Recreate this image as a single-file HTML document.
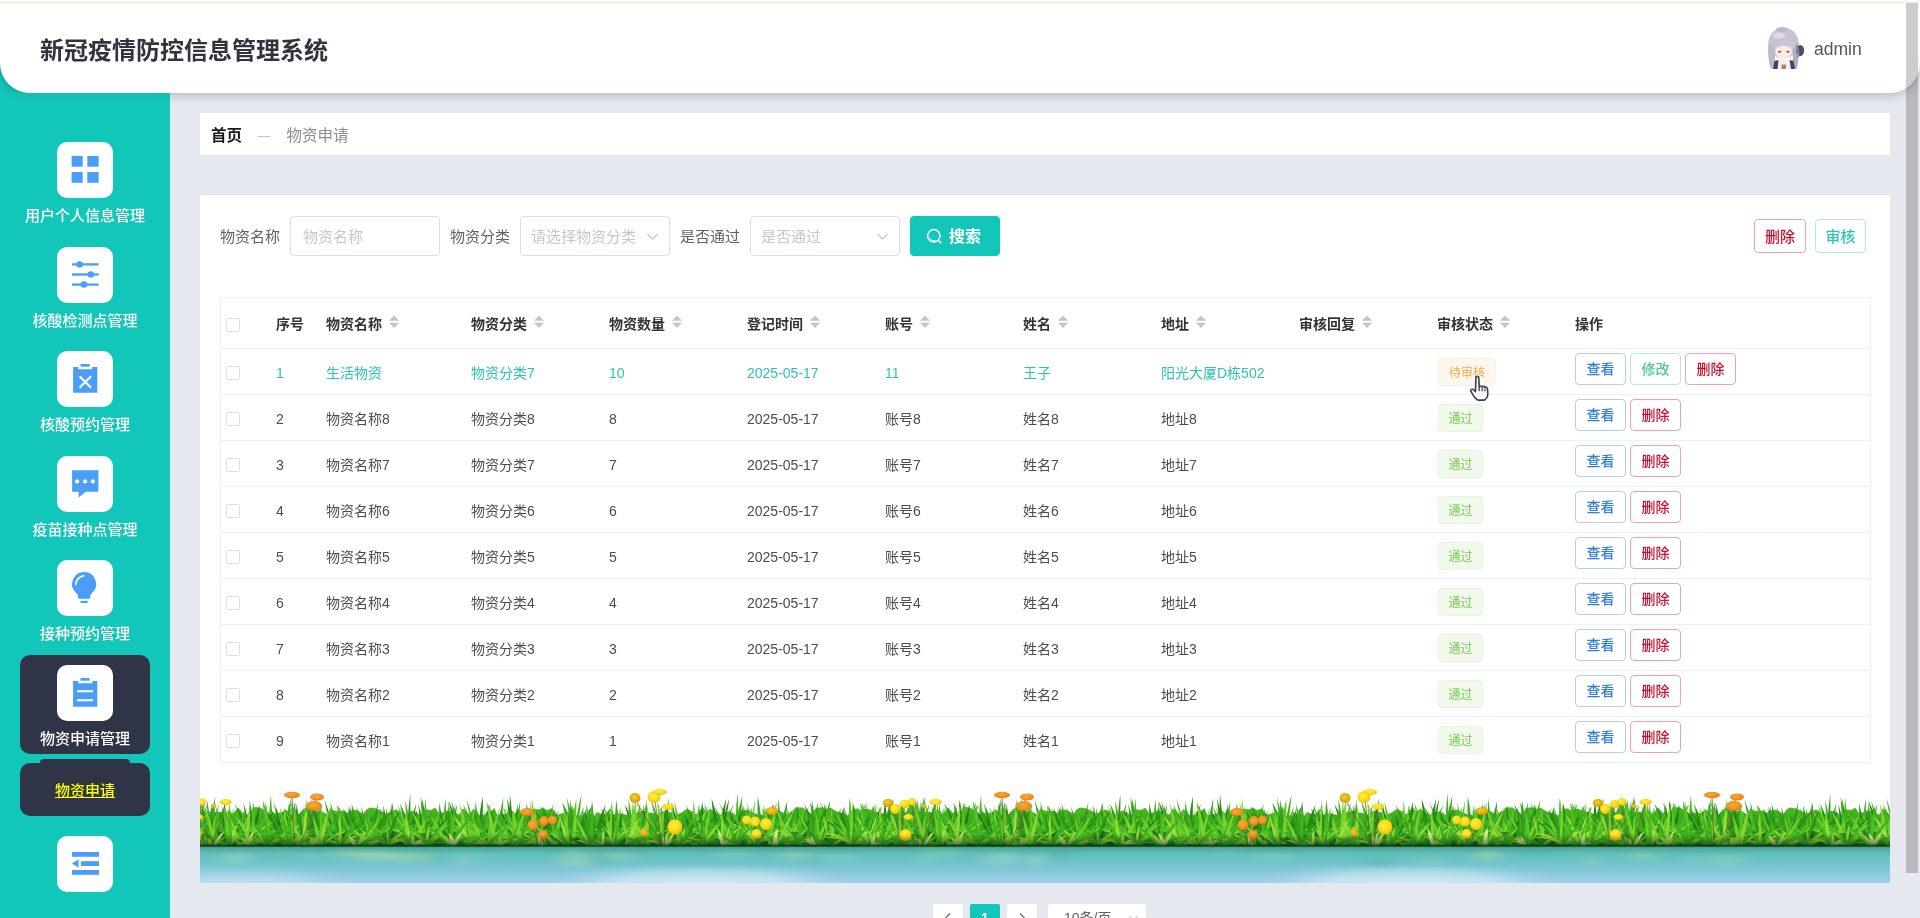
<!DOCTYPE html><html lang="zh-CN"><head><meta charset="utf-8"><title>新冠疫情防控信息管理系统</title><style>
*{box-sizing:border-box;margin:0;padding:0}
html,body{width:1920px;height:918px;overflow:hidden}
body{position:relative;background:#e5e8ee;font-family:"Liberation Sans","Noto Sans CJK SC",sans-serif;font-size:14px;color:#555;-webkit-font-smoothing:antialiased}
.abs{position:absolute}
#side{position:absolute;left:0;top:0;width:170px;height:918px;background:#13c6ba}
#head{position:absolute;left:0;top:0;width:1920px;height:93px;background:#fff;border-radius:0 0 30px 30px;box-shadow:0 3px 10px rgba(0,0,0,.19);z-index:5}
#head .t0{position:absolute;left:0;top:0;width:100%;height:2px;background:#fbfbf4}
#head .t1{position:absolute;left:0;top:2px;width:100%;height:1px;background:#e9eae3}
#title{position:absolute;left:40px;top:33px;font-size:24px;line-height:36px;font-weight:bold;color:#30343e;white-space:nowrap}
#uname{position:absolute;left:1814px;top:36px;font-size:17.500px;line-height:26px;color:#555;white-space:nowrap}
#avatar{position:absolute;left:1764px;top:26px;width:44px;height:44px}
.ibox{position:absolute;left:57px;width:56px;height:56px;border-radius:10px;background:#fff}
.ibox svg{position:absolute;left:0;top:0;width:56px;height:56px}
.ilab{position:absolute;left:0;width:170px;text-align:center;color:#fff;font-size:15px;line-height:22px;font-weight:500;white-space:nowrap}
.dk{position:absolute;background:#2f3546}
#bread{position:absolute;left:200px;top:113px;width:1690px;height:42px;background:#fff}
#bread span{position:absolute;top:1px;line-height:43px;font-size:15.500px;white-space:nowrap}
#panel{position:absolute;left:200px;top:195px;width:1690px;height:688px;background:#fff;overflow:hidden}
.lab{position:absolute;top:22px;height:40px;line-height:40px;font-size:15px;color:#606266;white-space:nowrap}
.inp{position:absolute;top:21px;height:40px;width:150px;border:1px solid #dcdfe6;border-radius:4px;background:#fff;line-height:40px;font-size:15px;color:#c4c7ce;padding-left:12px;white-space:nowrap}
.inp svg{position:absolute;right:10px;top:13px;width:13px;height:13px}
.btn{position:absolute;border:1px solid;border-radius:4px;background:#fff;text-align:center;white-space:nowrap;font-weight:500}
#tbl{position:absolute;left:20px;top:102px;width:1651px;height:466px;border:1px solid #eff0f3}
.hl{position:absolute;left:0;width:1649px;height:1px;background:#eff0f3}
.th{position:absolute;top:1px;height:50px;line-height:50px;font-size:14px;font-weight:bold;color:#333;white-space:nowrap}
.td{position:absolute;height:45px;line-height:45px;font-size:14px;color:#4c4c4c;white-space:nowrap}
.r1 .td{color:#2cc3b5}
.cb{position:absolute;left:5px;width:14px;height:14px;border:1px solid #dcdfe6;border-radius:2px;background:#fff}
.sort{position:absolute;width:10px;height:14px}
.tag{position:absolute;height:28px;line-height:28px;border:1px solid;border-radius:4px;font-size:12px;padding:0 10px;white-space:nowrap}
.pg{position:absolute;top:904px;height:28px;background:#fff;border-radius:2px;text-align:center;font-size:14px;color:#606266;line-height:28px}
#sb{position:absolute;left:1906px;top:3px;width:12px;height:870px;background:rgba(0,0,0,.2);z-index:9}
</style></head><body><div id="app" style="position:absolute;left:0;top:0;width:1920px;height:918px;overflow:hidden;will-change:transform">
<div id="side">
<div class="dk" style="left:20px;top:655px;width:130px;height:99px;border-radius:10px"></div>
<div class="dk" style="left:40px;top:759px;width:90px;height:10px;border-radius:4px"></div>
<div class="dk" style="left:20px;top:763px;width:130px;height:53px;border-radius:10px"></div>
<div class="ilab" style="top:780px;color:#ffff00;text-decoration:underline;font-weight:500">物资申请</div>
<div class="ibox" style="top:142px"><svg viewBox="0 0 56 56"><g fill="#4a9ef5"><rect x="14.600" y="13.900" width="11.100" height="10.800"/><rect x="30.300" y="13.900" width="11.300" height="10.800"/><rect x="14.600" y="30" width="11.100" height="10.800"/><rect x="30.300" y="30" width="11.300" height="10.800"/></g></svg></div>
<div class="ilab" style="top:205px">用户个人信息管理</div>
<div class="ibox" style="top:247px"><svg viewBox="0 0 56 56"><g fill="#4a9ef5"><rect x="15" y="16.250" width="26.700" height="2.300"/><rect x="15" y="26.350" width="26.700" height="2.300"/><rect x="15" y="36.450" width="26.700" height="2.300"/><circle cx="22.600" cy="17.400" r="3.250"/><circle cx="33.800" cy="27.500" r="3.250"/><circle cx="26.900" cy="37.600" r="3.250"/></g></svg></div>
<div class="ilab" style="top:310px">核酸检测点管理</div>
<div class="ibox" style="top:351px"><svg viewBox="0 0 56 56"><g fill="#4a9ef5"><path d="M16.100 16.100h5.100v2.100h14.100v-2.100h5v25.700h-24.200z"/><rect x="23.500" y="13" width="9.200" height="2.700"/></g><path d="M22.600 25.200L34 36.700M34 25.200L22.600 36.700" stroke="#fff" stroke-width="2.200" fill="none"/></svg></div>
<div class="ilab" style="top:414px">核酸预约管理</div>
<div class="ibox" style="top:456px"><svg viewBox="0 0 56 56"><g fill="#4a9ef5"><path d="M15.100 14.200h26.300v21.500h-12.500l-7.300 5.700v-5.700h-6.500z"/></g><g fill="#fff"><circle cx="20.100" cy="25.400" r="2.100"/><circle cx="28.100" cy="25.400" r="2.100"/><circle cx="35.900" cy="25.400" r="2.100"/></g></svg></div>
<div class="ilab" style="top:519px">疫苗接种点管理</div>
<div class="ibox" style="top:560px"><svg viewBox="0 0 56 56"><g fill="#4a9ef5"><path d="M27.100 11.950A12.050 12.050 0 0 1 34.850 33.200Q33 35 33 37V38.800H21.200V37Q21.200 35 19.350 33.200A12.050 12.050 0 0 1 27.100 11.950Z"/><rect x="23.500" y="40.900" width="7.300" height="2.100"/></g><path d="M18.900 24.300A8.400 8.400 0 0 1 26.600 15.900" stroke="#fff" stroke-width="1.800" fill="none" stroke-linecap="round"/></svg></div>
<div class="ilab" style="top:623px">接种预约管理</div>
<div class="ibox" style="top:665px"><svg viewBox="0 0 56 56"><g fill="#4a9ef5"><path d="M16.100 16.100h5.100v2.100h14.100v-2.100h5v25.700h-24.200z"/><rect x="23.500" y="13" width="9.200" height="2.700"/></g><g fill="#fff"><rect x="20.100" y="25.200" width="16" height="2.100"/><rect x="20.100" y="34.200" width="16" height="2.100"/></g></svg></div>
<div class="ilab" style="top:728px">物资申请管理</div>
<div class="ibox" style="top:836px"><svg viewBox="0 0 56 56"><g fill="#4a9ef5"><rect x="15" y="16" width="27" height="4.800"/><rect x="24" y="25.200" width="18" height="4.800"/><rect x="15" y="34" width="27" height="4.800"/><path d="M15 27.500l6.500-4.200v8.400z"/></g></svg></div>
</div>
<div id="head"><div class="t0"></div><div class="t1"></div><div id="title">新冠疫情防控信息管理系统</div>
<svg id="avatar" viewBox="0 0 44 44"><ellipse cx="19.500" cy="17" rx="15" ry="15.500" fill="#c9c2d3"/><path d="M4.500 16Q3 30 6.500 42.500L13 42.500Q10 34 11 24Z" fill="#beb6ca"/><path d="M34.500 16Q35.500 30 33 42.500L27 42.500Q29.500 34 29 24Z" fill="#b3aac1"/><ellipse cx="17.700" cy="3.600" rx="5.800" ry="2.400" fill="#bdb5c9"/><ellipse cx="15" cy="9.500" rx="6.500" ry="3" fill="#e4dfea" opacity=".8"/><path d="M12.500 33.500L27 33.500 28.500 43 11.500 43Z" fill="#f4f0f2"/><path d="M10.500 35L14.500 34 13.500 43 9 43Z" fill="#47424f"/><path d="M25.500 34L29.500 35 31 43 27 43Z" fill="#47424f"/><path d="M17.500 38.500h4.500v4.500h-4.500z" fill="#b5835f"/><ellipse cx="19.600" cy="25.500" rx="8.300" ry="7.600" fill="#fce9e3"/><path d="M10 23Q11.500 13.500 19.500 13Q28.500 13.500 29.500 23Q26.500 19.500 23.500 21Q20 17.500 16 21Q13 19.500 10 23Z" fill="#cbc4d5"/><ellipse cx="15.600" cy="25.800" rx="1.700" ry="1" fill="#7b5c72"/><ellipse cx="24" cy="25.800" rx="1.700" ry="1" fill="#7b5c72"/><ellipse cx="36.300" cy="24.500" rx="3.800" ry="5.500" fill="#514b5e"/><path d="M32 19q3 4 2.500 12" stroke="#8d859c" stroke-width="1.500" fill="none"/></svg>
<div id="uname">admin</div></div>
<div id="bread"><span style="left:11px;font-weight:bold;color:#1a1a1a">首页</span><span style="left:57.500px;color:#b9bdc6;font-size:13px">—</span><span style="left:86.500px;color:#8a8d94">物资申请</span></div>
<div id="panel">
<div class="lab" style="left:20px">物资名称</div><div class="inp" style="left:90px">物资名称</div>
<div class="lab" style="left:250px">物资分类</div><div class="inp" style="left:320px;padding-left:10px">请选择物资分类<svg viewBox="0 0 13 13"><path d="M1.500 4l5 5 5-5" fill="none" stroke="#c0c4cc" stroke-width="1.200"/></svg></div>
<div class="lab" style="left:480px">是否通过</div><div class="inp" style="left:550px;padding-left:10px">是否通过<svg viewBox="0 0 13 13"><path d="M1.500 4l5 5 5-5" fill="none" stroke="#c0c4cc" stroke-width="1.200"/></svg></div>
<div class="btn" style="left:710px;top:21px;width:90px;height:40px;background:#13c6ba;border-color:#13c6ba;color:#fff;font-weight:bold;font-size:16px;line-height:40px;text-align:left"><svg style="position:absolute;left:15px;top:11px;width:17px;height:17px" viewBox="0 0 17 17"><circle cx="7.800" cy="7.800" r="6.200" fill="none" stroke="#fff" stroke-width="1.500"/><path d="M12.300 12.300l3 3" stroke="#fff" stroke-width="1.600"/><path d="M3.700 9.500a4.600 4.600 0 0 0 5.800 3" stroke="#fff" stroke-width="1" fill="none"/></svg><span style="position:absolute;left:38px;top:0">搜索</span></div>
<div class="btn" style="left:1554px;top:24px;width:52px;height:34px;line-height:33px;font-size:15px;color:#c8102e;border-color:#eba3b0">删除</div>
<div class="btn" style="left:1615px;top:24px;width:51px;height:34px;line-height:33px;font-size:15px;color:#2cc3b5;border-color:#aee9e3">审核</div>
<div id="tbl">
<div class="cb" style="top:20px"></div>
<div class="th" style="left:55px">序号</div>
<div class="th" style="left:105px">物资名称</div>
<svg class="sort" style="left:168px;top:17px" viewBox="0 0 10 14"><path d="M5 .5l5 5.300H0z" fill="#c0c4cc"/><path d="M5 13l5-5.300H0z" fill="#c0c4cc"/></svg>
<div class="th" style="left:250px">物资分类</div>
<svg class="sort" style="left:313px;top:17px" viewBox="0 0 10 14"><path d="M5 .5l5 5.300H0z" fill="#c0c4cc"/><path d="M5 13l5-5.300H0z" fill="#c0c4cc"/></svg>
<div class="th" style="left:388px">物资数量</div>
<svg class="sort" style="left:451px;top:17px" viewBox="0 0 10 14"><path d="M5 .5l5 5.300H0z" fill="#c0c4cc"/><path d="M5 13l5-5.300H0z" fill="#c0c4cc"/></svg>
<div class="th" style="left:526px">登记时间</div>
<svg class="sort" style="left:589px;top:17px" viewBox="0 0 10 14"><path d="M5 .5l5 5.300H0z" fill="#c0c4cc"/><path d="M5 13l5-5.300H0z" fill="#c0c4cc"/></svg>
<div class="th" style="left:664px">账号</div>
<svg class="sort" style="left:699px;top:17px" viewBox="0 0 10 14"><path d="M5 .5l5 5.300H0z" fill="#c0c4cc"/><path d="M5 13l5-5.300H0z" fill="#c0c4cc"/></svg>
<div class="th" style="left:802px">姓名</div>
<svg class="sort" style="left:837px;top:17px" viewBox="0 0 10 14"><path d="M5 .5l5 5.300H0z" fill="#c0c4cc"/><path d="M5 13l5-5.300H0z" fill="#c0c4cc"/></svg>
<div class="th" style="left:940px">地址</div>
<svg class="sort" style="left:975px;top:17px" viewBox="0 0 10 14"><path d="M5 .5l5 5.300H0z" fill="#c0c4cc"/><path d="M5 13l5-5.300H0z" fill="#c0c4cc"/></svg>
<div class="th" style="left:1078px">审核回复</div>
<svg class="sort" style="left:1141px;top:17px" viewBox="0 0 10 14"><path d="M5 .5l5 5.300H0z" fill="#c0c4cc"/><path d="M5 13l5-5.300H0z" fill="#c0c4cc"/></svg>
<div class="th" style="left:1216px">审核状态</div>
<svg class="sort" style="left:1279px;top:17px" viewBox="0 0 10 14"><path d="M5 .5l5 5.300H0z" fill="#c0c4cc"/><path d="M5 13l5-5.300H0z" fill="#c0c4cc"/></svg>
<div class="th" style="left:1354px">操作</div>
<div class="hl" style="top:50px"></div>
<div class="r1">
<div class="cb" style="top:68px"></div>
<div class="td" style="left:55px;top:53px">1</div>
<div class="td" style="left:105px;top:53px">生活物资</div>
<div class="td" style="left:250px;top:53px">物资分类7</div>
<div class="td" style="left:388px;top:53px">10</div>
<div class="td" style="left:526px;top:53px">2025-05-17</div>
<div class="td" style="left:664px;top:53px">11</div>
<div class="td" style="left:802px;top:53px">王子</div>
<div class="td" style="left:940px;top:53px">阳光大厦D栋502</div>
<div class="tag" style="left:1217px;top:60px;color:#e9ae55;background:#fdf6ec;border-color:#fbf0e1;width:58px">待审核</div>
<div class="btn" style="left:1354px;top:55px;width:51px;height:32px;line-height:30px;font-size:14px;color:#2f7ee6;border-color:#b3cdf3">查看</div>
<div class="btn" style="left:1409px;top:55px;width:51px;height:32px;line-height:30px;font-size:14px;color:#4ec98e;border-color:#b9ead3">修改</div>
<div class="btn" style="left:1464px;top:55px;width:51px;height:32px;line-height:30px;font-size:14px;color:#c8102e;border-color:#eba3b0">删除</div>
</div>
<div class="hl" style="top:96px"></div>
<div class="rn">
<div class="cb" style="top:114px"></div>
<div class="td" style="left:55px;top:99px">2</div>
<div class="td" style="left:105px;top:99px">物资名称8</div>
<div class="td" style="left:250px;top:99px">物资分类8</div>
<div class="td" style="left:388px;top:99px">8</div>
<div class="td" style="left:526px;top:99px">2025-05-17</div>
<div class="td" style="left:664px;top:99px">账号8</div>
<div class="td" style="left:802px;top:99px">姓名8</div>
<div class="td" style="left:940px;top:99px">地址8</div>
<div class="tag" style="left:1217px;top:106px;color:#7bca53;background:#f0f9eb;border-color:#e6f5de;width:45px;padding:0 9.500px">通过</div>
<div class="btn" style="left:1354px;top:101px;width:51px;height:32px;line-height:30px;font-size:14px;color:#2f7ee6;border-color:#b3cdf3">查看</div>
<div class="btn" style="left:1409px;top:101px;width:51px;height:32px;line-height:30px;font-size:14px;color:#c8102e;border-color:#eba3b0">删除</div>
</div>
<div class="hl" style="top:142px"></div>
<div class="rn">
<div class="cb" style="top:160px"></div>
<div class="td" style="left:55px;top:145px">3</div>
<div class="td" style="left:105px;top:145px">物资名称7</div>
<div class="td" style="left:250px;top:145px">物资分类7</div>
<div class="td" style="left:388px;top:145px">7</div>
<div class="td" style="left:526px;top:145px">2025-05-17</div>
<div class="td" style="left:664px;top:145px">账号7</div>
<div class="td" style="left:802px;top:145px">姓名7</div>
<div class="td" style="left:940px;top:145px">地址7</div>
<div class="tag" style="left:1217px;top:152px;color:#7bca53;background:#f0f9eb;border-color:#e6f5de;width:45px;padding:0 9.500px">通过</div>
<div class="btn" style="left:1354px;top:147px;width:51px;height:32px;line-height:30px;font-size:14px;color:#2f7ee6;border-color:#b3cdf3">查看</div>
<div class="btn" style="left:1409px;top:147px;width:51px;height:32px;line-height:30px;font-size:14px;color:#c8102e;border-color:#eba3b0">删除</div>
</div>
<div class="hl" style="top:188px"></div>
<div class="rn">
<div class="cb" style="top:206px"></div>
<div class="td" style="left:55px;top:191px">4</div>
<div class="td" style="left:105px;top:191px">物资名称6</div>
<div class="td" style="left:250px;top:191px">物资分类6</div>
<div class="td" style="left:388px;top:191px">6</div>
<div class="td" style="left:526px;top:191px">2025-05-17</div>
<div class="td" style="left:664px;top:191px">账号6</div>
<div class="td" style="left:802px;top:191px">姓名6</div>
<div class="td" style="left:940px;top:191px">地址6</div>
<div class="tag" style="left:1217px;top:198px;color:#7bca53;background:#f0f9eb;border-color:#e6f5de;width:45px;padding:0 9.500px">通过</div>
<div class="btn" style="left:1354px;top:193px;width:51px;height:32px;line-height:30px;font-size:14px;color:#2f7ee6;border-color:#b3cdf3">查看</div>
<div class="btn" style="left:1409px;top:193px;width:51px;height:32px;line-height:30px;font-size:14px;color:#c8102e;border-color:#eba3b0">删除</div>
</div>
<div class="hl" style="top:234px"></div>
<div class="rn">
<div class="cb" style="top:252px"></div>
<div class="td" style="left:55px;top:237px">5</div>
<div class="td" style="left:105px;top:237px">物资名称5</div>
<div class="td" style="left:250px;top:237px">物资分类5</div>
<div class="td" style="left:388px;top:237px">5</div>
<div class="td" style="left:526px;top:237px">2025-05-17</div>
<div class="td" style="left:664px;top:237px">账号5</div>
<div class="td" style="left:802px;top:237px">姓名5</div>
<div class="td" style="left:940px;top:237px">地址5</div>
<div class="tag" style="left:1217px;top:244px;color:#7bca53;background:#f0f9eb;border-color:#e6f5de;width:45px;padding:0 9.500px">通过</div>
<div class="btn" style="left:1354px;top:239px;width:51px;height:32px;line-height:30px;font-size:14px;color:#2f7ee6;border-color:#b3cdf3">查看</div>
<div class="btn" style="left:1409px;top:239px;width:51px;height:32px;line-height:30px;font-size:14px;color:#c8102e;border-color:#eba3b0">删除</div>
</div>
<div class="hl" style="top:280px"></div>
<div class="rn">
<div class="cb" style="top:298px"></div>
<div class="td" style="left:55px;top:283px">6</div>
<div class="td" style="left:105px;top:283px">物资名称4</div>
<div class="td" style="left:250px;top:283px">物资分类4</div>
<div class="td" style="left:388px;top:283px">4</div>
<div class="td" style="left:526px;top:283px">2025-05-17</div>
<div class="td" style="left:664px;top:283px">账号4</div>
<div class="td" style="left:802px;top:283px">姓名4</div>
<div class="td" style="left:940px;top:283px">地址4</div>
<div class="tag" style="left:1217px;top:290px;color:#7bca53;background:#f0f9eb;border-color:#e6f5de;width:45px;padding:0 9.500px">通过</div>
<div class="btn" style="left:1354px;top:285px;width:51px;height:32px;line-height:30px;font-size:14px;color:#2f7ee6;border-color:#b3cdf3">查看</div>
<div class="btn" style="left:1409px;top:285px;width:51px;height:32px;line-height:30px;font-size:14px;color:#c8102e;border-color:#eba3b0">删除</div>
</div>
<div class="hl" style="top:326px"></div>
<div class="rn">
<div class="cb" style="top:344px"></div>
<div class="td" style="left:55px;top:329px">7</div>
<div class="td" style="left:105px;top:329px">物资名称3</div>
<div class="td" style="left:250px;top:329px">物资分类3</div>
<div class="td" style="left:388px;top:329px">3</div>
<div class="td" style="left:526px;top:329px">2025-05-17</div>
<div class="td" style="left:664px;top:329px">账号3</div>
<div class="td" style="left:802px;top:329px">姓名3</div>
<div class="td" style="left:940px;top:329px">地址3</div>
<div class="tag" style="left:1217px;top:336px;color:#7bca53;background:#f0f9eb;border-color:#e6f5de;width:45px;padding:0 9.500px">通过</div>
<div class="btn" style="left:1354px;top:331px;width:51px;height:32px;line-height:30px;font-size:14px;color:#2f7ee6;border-color:#b3cdf3">查看</div>
<div class="btn" style="left:1409px;top:331px;width:51px;height:32px;line-height:30px;font-size:14px;color:#c8102e;border-color:#eba3b0">删除</div>
</div>
<div class="hl" style="top:372px"></div>
<div class="rn">
<div class="cb" style="top:390px"></div>
<div class="td" style="left:55px;top:375px">8</div>
<div class="td" style="left:105px;top:375px">物资名称2</div>
<div class="td" style="left:250px;top:375px">物资分类2</div>
<div class="td" style="left:388px;top:375px">2</div>
<div class="td" style="left:526px;top:375px">2025-05-17</div>
<div class="td" style="left:664px;top:375px">账号2</div>
<div class="td" style="left:802px;top:375px">姓名2</div>
<div class="td" style="left:940px;top:375px">地址2</div>
<div class="tag" style="left:1217px;top:382px;color:#7bca53;background:#f0f9eb;border-color:#e6f5de;width:45px;padding:0 9.500px">通过</div>
<div class="btn" style="left:1354px;top:377px;width:51px;height:32px;line-height:30px;font-size:14px;color:#2f7ee6;border-color:#b3cdf3">查看</div>
<div class="btn" style="left:1409px;top:377px;width:51px;height:32px;line-height:30px;font-size:14px;color:#c8102e;border-color:#eba3b0">删除</div>
</div>
<div class="hl" style="top:418px"></div>
<div class="rn">
<div class="cb" style="top:436px"></div>
<div class="td" style="left:55px;top:421px">9</div>
<div class="td" style="left:105px;top:421px">物资名称1</div>
<div class="td" style="left:250px;top:421px">物资分类1</div>
<div class="td" style="left:388px;top:421px">1</div>
<div class="td" style="left:526px;top:421px">2025-05-17</div>
<div class="td" style="left:664px;top:421px">账号1</div>
<div class="td" style="left:802px;top:421px">姓名1</div>
<div class="td" style="left:940px;top:421px">地址1</div>
<div class="tag" style="left:1217px;top:428px;color:#7bca53;background:#f0f9eb;border-color:#e6f5de;width:45px;padding:0 9.500px">通过</div>
<div class="btn" style="left:1354px;top:423px;width:51px;height:32px;line-height:30px;font-size:14px;color:#2f7ee6;border-color:#b3cdf3">查看</div>
<div class="btn" style="left:1409px;top:423px;width:51px;height:32px;line-height:30px;font-size:14px;color:#c8102e;border-color:#eba3b0">删除</div>
</div>
</div>
<svg class="abs" style="left:1269px;top:179px;width:21.500px;height:28px" viewBox="0 0 20 26"><path d="M6.500 2.500q1.800-1 2.600 1l.4 8.500q1.400-1.200 2.600-.2q1.500-.8 2.500.5q2-.5 2.600 1.500l.3 5q-.3 4-3.500 5.500h-5.500q-2.500-1-4.500-4.500l-2.500-4.200q.2-2 2.500-1.200l2 2z" fill="#fff" stroke="#39414d" stroke-width="1.500" stroke-linejoin="round"/><path d="M9.500 12v4M12.200 12.500v3.500M14.800 13.500v2.500" stroke="#39414d" stroke-width="1.200"/></svg>
<svg class="abs" style="left:0;top:590px;width:1690px;height:98px" viewBox="0 0 1690 98"><defs><linearGradient id="gb" x1="0" y1="0" x2="0" y2="1"><stop offset="0" stop-color="#4dba22"/><stop offset=".5" stop-color="#35a01b"/><stop offset="1" stop-color="#1a6512"/></linearGradient><linearGradient id="wg" x1="0" y1="0" x2="0" y2="1"><stop offset="0" stop-color="#3f6f68"/><stop offset=".07" stop-color="#4aa59d"/><stop offset=".25" stop-color="#62bfbb"/><stop offset=".6" stop-color="#7ac6d4"/><stop offset="1" stop-color="#a3d0ea"/></linearGradient><radialGradient id="fy" cx=".45" cy=".4" r=".6"><stop offset="0" stop-color="#fff04a"/><stop offset=".6" stop-color="#fbdc17"/><stop offset="1" stop-color="#e9b90c"/></radialGradient><radialGradient id="fg" cx=".45" cy=".4" r=".6"><stop offset="0" stop-color="#f6d023"/><stop offset="1" stop-color="#d59a10"/></radialGradient><radialGradient id="fo" cx=".45" cy=".4" r=".6"><stop offset="0" stop-color="#f8ab3a"/><stop offset=".7" stop-color="#ee8f1f"/><stop offset="1" stop-color="#d87812"/></radialGradient><linearGradient id="bs" x1="0" y1="0" x2="0" y2="1"><stop offset="0" stop-color="#07280c" stop-opacity="0"/><stop offset="1" stop-color="#07280c" stop-opacity=".6"/></linearGradient><filter id="bl2" x="-20%%" y="-150%%" width="140%%" height="400%%"><feGaussianBlur stdDeviation="22 5"/></filter><filter id="bl" x="-5%%" y="-50%%" width="110%%" height="200%%"><feGaussianBlur stdDeviation="6 2.500"/></filter><g id="gt"><path fill="url(#gb)" d="M0 62L0 24L4.8 27L11.5 26.2L16.5 27.3L20.3 26.6L25.8 29.1L29.2 24.7L32.5 29.3L38.3 22.4L45.2 30.7L50.9 27.5L54.5 22.1L59.6 22.5L63.4 24.2L66.5 26.2L71.2 29.6L76.3 27.8L81.3 28L86.1 24.5L93.1 31L99.5 28.4L103.8 24.1L107.9 22.6L114 25.6L120.4 25.5L127.2 29.6L130.2 23.9L136.8 26.2L143.8 25.6L147.1 27.7L153.2 24.4L156.5 25L163.4 28.8L166.8 24.2L170.2 22.5L176.4 23.6L181.7 26L185.4 28.6L189 27.8L192.4 25.8L196.3 24.4L203.2 29.2L207.4 30L211.2 25.5L217.6 27.8L221 30.9L224.9 24.3L231 25L235.2 22.7L238.5 27.2L242.5 27.4L247 26.1L253.8 26.4L259.1 29.8L262.9 23.4L269.5 29.4L273.5 23.7L279.4 30.5L283.2 30.6L289.8 27.4L294.4 22.9L297.6 30.7L301.6 28.3L305.6 29.4L311 24.6L314.7 28.5L317.9 24.1L323.2 29.7L328.6 24.5L335.3 23.8L338.4 24.4L343.2 22.5L346.9 25.3L352.2 23.2L356.6 30L363.5 27.9L369.3 27.3L372.8 22.3L375.9 30.2L381.7 30.7L384.8 27.7L389.7 28.6L394 31L397.3 26.9L403.3 30.1L409.2 28.3L415.4 30.2L419.8 28.2L426.4 29.8L431.1 29.1L437.5 27.2L443 25.4L448.3 27.5L451.7 27.8L458.6 29.9L464.6 25.5L470.5 27.2L475.3 29.5L478.6 28.8L481.7 27.4L486.6 24.1L492.4 26.5L497.9 30.3L501.9 22.1L506.1 28.1L509.9 23.5L516.5 27.9L521.3 30L525.6 28L529.4 25.9L535.6 30.2L542.2 25.5L547.5 24.8L551 26.5L557.4 29.6L563.2 30.6L567.3 23.5L572.1 24.5L576 25.7L581.5 26.4L585.8 29.6L592.7 26.1L596 22.3L602.5 22.4L608.3 27.1L612.6 29.1L615.6 23.2L620.4 22.2L626.8 24.1L630.3 22.4L635.8 26L641.4 27.9L647.6 30.6L653.3 23.8L658.2 23.6L661.3 26.2L667.1 23.6L671.2 25.1L677 26.7L682.5 28.8L687 29.1L693.7 22.8L700.4 28.5L703.9 26.1L709.4 30.2L710 27.1L710 62 Z"/><path fill="#48b423" d="M9 58.6Q7.2 33.9 6.8 13.5Q10.9 33.7 12 58.6ZM717.3 58.6Q715.5 33.9 715.1 13.5Q719.2 33.7 720.3 58.6ZM8.6 58.6Q18.3 43.1 32.2 35.8Q21 45 11.3 58.6ZM717.5 58.6Q727.1 43.1 741 35.8Q729.9 45 720.1 58.6ZM7.8 58.6Q-0.9 46.6 -11 38.6Q2.8 44.1 11.3 58.6ZM717 58.6Q708.3 46.6 698.2 38.6Q712.1 44.1 720.6 58.6ZM5.6 58.6Q1.3 34.3 -1.8 14.2Q5.8 33.6 9.3 58.6ZM717 58.6Q712.6 34.3 709.5 14.2Q717.1 33.6 720.6 58.6ZM31.9 59.6Q21.9 46.8 12 37Q24.5 44.8 34.5 59.6ZM740.8 59.6Q730.8 46.8 720.9 37Q733.4 44.8 743.4 59.6ZM29.6 59.6Q36.8 38 46.8 22.5Q41.8 39.8 33.9 59.6ZM740 59.6Q747.1 38 757.2 22.5Q752.1 39.8 744.2 59.6ZM29.5 59.6Q30.1 38.8 33.4 21.9Q33.8 39 32.5 59.6ZM740.6 59.6Q741.2 38.8 744.5 21.9Q744.9 39 743.6 59.6ZM30.8 59.6Q21.9 42.9 14.7 28.6Q26 40.9 34.5 59.6ZM740.3 59.6Q731.4 42.9 724.2 28.6Q735.5 40.9 743.9 59.6ZM29 59.6Q42.1 45.8 57.1 40.7Q44.5 48.3 31.9 59.6ZM740.7 59.6Q753.7 45.8 768.8 40.7Q756.2 48.3 743.5 59.6ZM28.4 59.6Q24 38.7 21.3 21.1Q29.4 37.7 32.8 59.6ZM739.9 59.6Q735.5 38.7 732.8 21.1Q740.9 37.7 744.3 59.6ZM30.2 59.6Q26.2 36.1 23.5 16.6Q29.4 35.6 32.8 59.6ZM740.8 59.6Q736.8 36.1 734.1 16.6Q740 35.6 743.4 59.6ZM48.5 58.3Q49.1 35.5 53.7 17.1Q54.7 35.8 53 58.3ZM760 58.3Q760.6 35.5 765.2 17.1Q766.2 35.8 764.5 58.3ZM68.2 60.8Q68.1 32.7 71 9.7Q72.7 32.7 71.9 60.8ZM69.4 60.8Q61.8 41.1 55.3 24.7Q66.1 39.6 73.1 60.8ZM70 60.8Q65.1 36.1 62.9 15.3Q70 35.2 74 60.8ZM81.7 59.9Q73.3 46.1 63.1 36.5Q78.2 43.4 86.2 59.9ZM82.8 59.9Q78.1 38.9 74.4 21.4Q81.7 38.1 85.8 59.9ZM101.5 60Q91.3 51.5 80.3 46.7Q95.1 47.7 105.8 60ZM101.5 60Q103.1 34.1 106.8 13.2Q106.5 34.4 104.2 60ZM102.2 60Q96.7 44.1 93.6 30.2Q101.3 42.7 106 60ZM115.3 59.1Q127.2 41.1 144.4 33.5Q131.1 43.8 119.1 59.1ZM154 58.2Q160.5 39.5 172.5 27.7Q165.6 41.4 158.3 58.2ZM166.7 59Q175.5 41.7 190.3 33.2Q179.1 43.7 170.1 59ZM168.9 59Q177.5 37.4 192.4 24.4Q182.5 39.6 173.2 59ZM186 59.8Q184.7 39.5 186.2 22.8Q190 39.3 190.3 59.8ZM185.9 59.8Q178.8 45.7 170.3 35.3Q183.7 43.5 190.2 59.8ZM188.7 59.8Q199.8 47 213.4 42.4Q202.5 49.5 191.6 59.8ZM206.4 59.3Q215.5 45.7 226.6 38.4Q218.6 48 209.4 59.3ZM209.7 59.3Q220.5 45.1 235.4 40.4Q223.3 47.4 212.6 59.3ZM209 59.3Q202.8 39.6 197.2 23.4Q205.9 38.7 211.6 59.3ZM208.9 59.3Q205.9 35.2 205.2 15.1Q210.4 34.7 212.5 59.3ZM222.6 59.5Q232.6 42.5 245.4 32.5Q235.8 44.6 225.6 59.5ZM226.4 59.5Q235.7 37.5 249.4 23.2Q238.9 39 229.3 59.5ZM225 59.5Q222.4 40.5 220 24.9Q225.6 40.1 227.7 59.5ZM241.9 60.6Q242.3 34.6 245.6 13.4Q246.7 34.7 245.5 60.6ZM239.6 60.6Q248.8 44.9 264.3 39.1Q252 47 242.6 60.6ZM258.6 60.3Q259.6 39.8 263.7 23.4Q264.5 40.2 262.6 60.3ZM257.8 60.3Q253 42.7 250 27.7Q257.9 41.5 261.9 60.3ZM274.6 58.4Q267.3 41.2 261.5 26.6Q272.2 39.4 278.8 58.4ZM273.4 58.4Q268 37.1 263.1 19.5Q273.3 35.9 277.7 58.4ZM296.1 59.5Q288.1 42 280.8 27.4Q292.8 40 300.2 59.5ZM297.6 59.5Q290.7 43.1 284.6 29.4Q295.2 41.4 301.5 59.5ZM295 59.5Q287 47 277 38.9Q290.7 44.9 298.4 59.5ZM313.2 60.2Q322.4 40.6 338.3 30.2Q326.1 42.4 316.5 60.2ZM335.3 60.7Q330 38.7 326 20.3Q333.9 37.8 338.5 60.7ZM334.1 60.7Q324.3 49.2 315.5 39.4Q328.3 46.2 338.1 60.7ZM375.6 58.3Q364.5 45.3 353.5 35.5Q368.1 42.6 379.2 58.3ZM373.2 58.3Q375.4 30.9 381.6 9Q379.5 31.3 376.4 58.3ZM372.9 58.3Q376.3 37.1 384.4 21.1Q379.9 37.8 375.8 58.3ZM372.1 58.3Q370.9 37.2 372.1 19.8Q375.1 37 375.5 58.3ZM390.1 60.2Q378.3 45.7 368.1 33.2Q382.3 42.7 394.1 60.2ZM392.5 60.2Q401.3 47 413.3 41.2Q404.5 49.4 395.7 60.2ZM392.2 60.2Q399.4 36 414 20.1Q404.3 37.6 396.3 60.2ZM392.6 60.2Q391.1 37.8 391.9 19.3Q395.4 37.6 396.1 60.2ZM391.5 60.2Q398.2 37.4 411 22Q403.3 39.1 395.8 60.2ZM437.5 61Q426.2 47.7 412.1 41.2Q429 45.5 440.3 61ZM459 59.5Q468.7 41.3 484.8 32.8Q472.2 43.3 462.3 59.5ZM461.1 59.5Q455.2 35.1 450.9 14.7Q460 34 465 59.5ZM458.9 59.5Q449.1 47 436.4 40.8Q452 44.9 461.8 59.5ZM474.7 60.6Q464.2 44.6 452.5 33.1Q468.4 42 478.7 60.6ZM476.4 60.6Q471.3 42.3 468.9 26.4Q476.6 41 480.8 60.6ZM498.3 60.9Q489.9 47 481.8 35.8Q493.3 45.1 501.4 60.9ZM499.9 60.9Q488 47.9 475.8 38.5Q492.3 44.4 504.4 60.9ZM515.9 58.6Q523.7 35.5 534.1 18.5Q527.1 36.7 518.8 58.6ZM515 58.6Q525.9 39.7 541.2 29.5Q530 42.2 518.8 58.6ZM516.2 58.6Q503.5 47.4 487.9 44.6Q507.5 43.5 520.6 58.6ZM534.5 59Q527.7 35.8 518.8 17.8Q531.3 34.8 537.5 59ZM535.1 59Q535.1 30.7 537.5 7.6Q539 30.8 538.2 59ZM533.8 59Q535.3 36.5 540.2 18.5Q540.2 36.9 537.7 59ZM536 59Q542.2 37.1 552.9 21.5Q546.2 38.3 539.3 59ZM536.6 59Q541.7 37.7 552.5 22.6Q547 39.1 540.9 59ZM559 58.1Q557.3 33.3 558.2 12.8Q562.1 33 562.8 58.1ZM580 60Q569.8 40.1 560.8 23.8Q572.8 38.7 582.6 60ZM600.5 60.6Q602.6 38.3 608.5 20.8Q606.7 38.8 603.8 60.6ZM600.7 60.6Q612 45.5 624.5 37Q615.1 48 603.9 60.6ZM600.3 60.6Q587.8 49 576.8 39Q591.2 45.8 604 60.6ZM617.9 60.7Q609.9 47.5 599.7 38.9Q612.8 45.8 620.7 60.7ZM633 58.9Q622.2 47.7 609.1 42.9Q625.9 44.6 636.8 58.9ZM650 59.4Q639.5 41.7 627.5 28.9Q644.1 39.2 654.1 59.4ZM-59.5 59.4Q-69.9 41.7 -82 28.9Q-65.4 39.2 -55.4 59.4ZM652.3 59.4Q660 43.2 671.1 33.3Q663.2 44.8 655.2 59.4ZM-58.9 59.4Q-51.2 43.2 -40.1 33.3Q-48 44.8 -56 59.4ZM664.7 60.4Q671.6 42.3 680.3 29.3Q674.8 43.7 667.5 60.4ZM-43.4 60.4Q-36.6 42.3 -27.9 29.3Q-33.3 43.7 -40.7 60.4ZM666.5 60.4Q668.2 38.1 673.4 20.4Q673.4 38.6 670.6 60.4ZM-44.1 60.4Q-42.4 38.1 -37.2 20.4Q-37.2 38.6 -40 60.4ZM665.6 60.4Q670 42 679.3 29Q674.6 43.2 669.4 60.4ZM-43.9 60.4Q-39.5 42 -30.2 29Q-34.9 43.2 -40.2 60.4ZM701.4 58.9Q704.1 32.6 712 12.1Q709.6 33.3 705.9 58.9ZM-7.7 58.9Q-5 32.6 2.9 12.1Q0.6 33.3 -3.2 58.9ZM701.1 58.9Q703.1 37.8 707.8 21.1Q707.4 38.3 704.6 58.9ZM-7.2 58.9Q-5.2 37.8 -0.5 21.1Q-0.8 38.3 -3.7 58.9Z"/><path fill="#33a01b" d="M7.3 58.6Q-1.9 46.5 -9.6 35.8Q1.5 44.1 10.6 58.6ZM717.1 58.6Q707.9 46.5 700.2 35.8Q711.3 44.1 720.4 58.6ZM6.7 58.6Q14.5 41.3 29.2 33Q19.3 43.7 11 58.6ZM716.6 58.6Q724.5 41.3 739.2 33Q729.3 43.7 720.9 58.6ZM31.5 59.6Q21.7 50.6 10.4 46.7Q24.4 48 34.5 59.6ZM740.6 59.6Q730.8 50.6 719.5 46.7Q733.5 48 743.6 59.6ZM30.2 59.6Q38.7 42.9 52.9 34.7Q43 45.3 34.1 59.6ZM740.1 59.6Q748.7 42.9 762.9 34.7Q753 45.3 744.1 59.6ZM52.5 58.3Q43.7 45.7 32.7 38.1Q46.9 43.7 55.4 58.3ZM760.8 58.3Q752 45.7 741 38.1Q755.2 43.7 763.7 58.3ZM50.2 58.3Q40.5 48.8 30.8 42Q43.6 46 53.5 58.3ZM760.6 58.3Q750.9 48.8 741.2 42Q754 46 763.9 58.3ZM68.9 60.8Q72.8 43.1 79.6 29.7Q76.5 44 72 60.8ZM68.2 60.8Q65.2 38.3 63.8 19.5Q69.1 37.8 71.3 60.8ZM82.9 59.9Q71.1 44.9 57.7 35.3Q75.3 42 86.9 59.9ZM84.9 59.9Q88.6 35.7 95.8 16.9Q93.4 36.5 88.8 59.9ZM84 59.9Q85.4 34.3 90.7 13.8Q90.8 34.7 88.3 59.9ZM104 60Q93.1 47.6 80.4 40.6Q96.6 44.9 107.5 60ZM103.5 60Q110.9 38.9 121.1 23.7Q114.6 40.3 106.6 60ZM102.6 60Q115.1 44 133.7 41.1Q118.3 46.7 106 60ZM116.8 59.1Q112.6 40.5 109.4 25Q116.2 39.7 119.7 59.1ZM118.1 59.1Q110.5 44.3 104.1 31.8Q114 42.7 121.2 59.1ZM135.5 60.6Q138.5 41 144.3 25.7Q142 41.6 138.4 60.6ZM132.4 60.6Q128.7 38.5 126.1 20.2Q134.1 37.8 136.7 60.6ZM131.9 60.6Q122 49.6 110.4 43.6Q125.4 46.9 135.3 60.6ZM155.3 58.2Q149.8 39.6 143.6 24.7Q153.1 38.7 158 58.2ZM166.7 59Q163.1 38.3 161.1 21Q166.6 37.7 169.5 59ZM188.2 59.8Q188.6 36.6 191.5 17.7Q191.9 36.7 190.8 59.8ZM188.2 59.8Q199.5 43.2 216.9 38.3Q203.2 46 191.9 59.8ZM206.3 59.3Q218.6 44.4 232.9 37.7Q221.7 47.2 209.7 59.3ZM208.7 59.3Q214.1 40.3 224.2 27.1Q218.8 41.8 212.7 59.3ZM241.4 60.6Q237.5 42.7 235.5 27.4Q242.2 41.8 245.3 60.6ZM240 60.6Q232.8 43.3 223.2 30.7Q236.1 42 242.8 60.6ZM259.7 60.3Q254.8 35.8 251.2 15.5Q258.5 35.1 262.7 60.3ZM258.2 60.3Q265.6 44.7 277.4 35.9Q269.5 46.7 261.7 60.3ZM277.3 58.4Q287.5 38.5 302.3 26.9Q291.7 40.7 281.1 58.4ZM275 58.4Q274.5 34.6 275.8 15Q277.7 34.5 277.6 58.4ZM295 59.5Q288.4 43.6 281 31.1Q291.8 42.3 298 59.5ZM295.6 59.5Q283.9 47.3 273.6 37.1Q286.5 45 298.4 59.5ZM312.7 60.2Q301.6 43.5 288.7 32.1Q304.9 41.4 315.8 60.2ZM312.2 60.2Q305.5 43.8 299.4 30.1Q309.5 42.2 315.7 60.2ZM313.4 60.2Q321.9 46.9 335.6 42.7Q325.3 49.2 316.6 60.2ZM336.9 60.7Q327.6 47.8 317.9 38.1Q331.7 45.1 340.8 60.7ZM335.4 60.7Q329.3 43.6 324.9 29Q333.2 42.3 338.6 60.7ZM337.6 60.7Q335.1 42.1 334.6 26.6Q339.5 41.7 341.2 60.7ZM337.8 60.7Q343.9 36.4 354.5 18.6Q347.1 37.3 340.5 60.7ZM354.5 59.4Q344.4 49 334.5 41.3Q347.8 46.1 358.1 59.4ZM355.8 59.4Q346.5 45.5 338.8 33.6Q349.4 43.7 358.6 59.4ZM376 58.3Q366.2 42.5 356.6 30.3Q369.1 40.9 378.6 58.3ZM394.1 60.2Q404 45 417.3 37.6Q406.9 47.1 396.9 60.2ZM413.5 60.7Q410 41 407.6 24.7Q413.4 40.5 416.3 60.7ZM413.3 60.7Q424.5 46.7 440.7 44.5Q427.8 49.7 416.9 60.7ZM435.8 61Q430.8 42.3 426.9 26.8Q436.2 41.1 440.2 61ZM435.9 61Q442.5 45.1 451.3 34.3Q445.8 46.6 438.8 61ZM438.1 61Q446.8 44.9 461.5 38Q450.2 47 441.3 61ZM460.3 59.5Q456.7 41 454.3 25.6Q461.1 40.3 463.8 59.5ZM457.3 59.5Q452 42.2 447.1 27.9Q457.2 40.7 461.7 59.5ZM460.5 59.5Q451.9 46.3 440.3 38.8Q455 44.5 463.3 59.5ZM476.4 60.6Q482 41.1 492.1 27.4Q485.5 42.2 479.4 60.6ZM474.5 60.6Q461.9 48.7 450.9 38.1Q465.8 45 478.8 60.6ZM500.9 60.9Q511 39.7 529 29.2Q515.1 41.8 504.6 60.9ZM498.7 60.9Q508.7 48.6 520.9 43.7Q511.8 51.4 502 60.9ZM498 60.9Q489.1 48 478.2 39.7Q492.8 45.7 501.5 60.9ZM497.1 60.9Q488.6 45.2 481 32Q493.6 42.8 501.5 60.9ZM517.8 58.6Q509.1 37.2 501.4 19.6Q512.3 36 520.4 58.6ZM535 59Q524.6 49.3 511.4 47.3Q527.2 46.8 537.9 59ZM534.3 59Q537.9 37.9 545.8 21.9Q542.2 38.7 537.8 59ZM534.9 59Q536.9 31.9 542.3 10.2Q541.2 32.3 538.4 59ZM556.8 58.1Q547.1 41.7 534.3 31.3Q551.3 39.4 560.7 58.1ZM559.5 58.1Q550.6 49.1 540.9 43.5Q553.9 46.2 563.1 58.1ZM579.7 60Q576.9 38.1 575 20.1Q580.9 37.7 582.9 60ZM579.3 60Q580.9 35.4 587.2 15.9Q586.4 35.9 583.7 60ZM578.2 60Q567.3 41.9 555.2 28.7Q571.8 39.5 582.3 60ZM599.4 60.6Q597.2 38.7 596.9 20.5Q601.4 38.3 602.8 60.6ZM619.7 60.7Q625.9 41.8 636.3 28.8Q629.7 43.1 623 60.7ZM618.3 60.7Q611.2 43.5 606.4 28.4Q615.4 41.9 621.9 60.7ZM620.1 60.7Q611 52.6 600.7 48.5Q614.3 49.4 623.8 60.7ZM633.3 58.9Q626.7 35.8 620.1 17Q630.3 34.8 636.2 58.9ZM634 58.9Q645.7 42.8 661.8 36.7Q648.8 45.2 637.1 58.9ZM636.4 58.9Q627.5 41.3 615.1 29.6Q630.7 39.7 639.2 58.9ZM634.1 58.9Q627.9 39.3 621.7 23.5Q631.6 38.2 637.2 58.9ZM634.3 58.9Q621.5 47.5 610.4 37.7Q624.3 44.7 637.5 58.9ZM651.4 59.4Q663.3 43.2 677.8 35Q665.9 45.3 654.1 59.4ZM-58.8 59.4Q-46.9 43.2 -32.4 35Q-44.2 45.3 -56.1 59.4ZM650.4 59.4Q641.3 41.6 633.8 26.7Q644.6 40 653.4 59.4ZM-58.9 59.4Q-68 41.6 -75.6 26.7Q-64.7 40 -56 59.4ZM649.9 59.4Q661.3 45.7 676.9 42.7Q663.8 48 652.7 59.4ZM-58.8 59.4Q-47.5 45.7 -31.9 42.7Q-44.9 48 -56.1 59.4ZM667.7 60.4Q676 38.2 692.2 25.3Q680.4 40 671.5 60.4ZM-43.9 60.4Q-35.6 38.2 -19.4 25.3Q-31.2 40 -40.1 60.4ZM668.3 60.4Q664.7 36.8 661.8 17.4Q668 36.3 670.9 60.4ZM-43.4 60.4Q-46.9 36.8 -49.9 17.4Q-43.7 36.3 -40.7 60.4ZM668.2 60.4Q672.9 42.7 680.3 29.7Q676.4 43.7 671.2 60.4ZM-43.5 60.4Q-38.9 42.7 -31.4 29.7Q-35.4 43.7 -40.6 60.4ZM683 58.4Q675.4 38.5 665.9 23.4Q678.8 37.3 685.9 58.4ZM-28.7 58.4Q-36.3 38.5 -45.8 23.4Q-32.9 37.3 -25.8 58.4ZM704 58.9Q693.7 41 681.8 28.2Q697 39.3 707 58.9ZM-6.9 58.9Q-17.2 41 -29.1 28.2Q-14 39.3 -4 58.9Z"/><path fill="#217f12" d="M6 58.6Q-4.3 48.6 -14.2 41.1Q-1.2 45.8 9.4 58.6ZM717.1 58.6Q706.8 48.6 696.9 41.1Q709.9 45.8 720.5 58.6ZM7.2 58.6Q-1.2 48 -10.3 40.5Q2.1 45.6 10.5 58.6ZM717.2 58.6Q708.7 48 699.7 40.5Q712.1 45.6 720.4 58.6ZM31.8 59.6Q37 41.3 44.5 27.6Q40.2 42.3 34.5 59.6ZM740.8 59.6Q746 41.3 753.4 27.6Q749.2 42.3 743.4 59.6ZM49.3 58.3Q40.6 48.3 31.9 40.4Q44.9 45 53.7 58.3ZM760 58.3Q751.3 48.3 742.6 40.4Q755.6 45 764.4 58.3ZM51.1 58.3Q49.4 34.7 49.7 15.2Q53.6 34.4 54.5 58.3ZM760.5 58.3Q758.9 34.7 759.2 15.2Q763.1 34.4 763.9 58.3ZM51.7 58.3Q43.7 44.6 37.8 32.2Q47.6 42.5 55.2 58.3ZM760.5 58.3Q752.4 44.6 746.6 32.2Q756.4 42.5 764 58.3ZM51.2 58.3Q53.6 36.7 59.6 19.8Q58.6 37.4 55.2 58.3ZM760.2 58.3Q762.6 36.7 768.6 19.8Q767.6 37.4 764.2 58.3ZM51.8 58.3Q60.5 37.8 75.4 25.8Q64.3 39.5 55.1 58.3ZM760.6 58.3Q769.3 37.8 784.2 25.8Q773.1 39.5 763.9 58.3ZM68 60.8Q57.3 47 47.3 35.8Q60.8 44.5 71.4 60.8ZM83 59.9Q73.1 49.6 62 43.6Q76.4 46.8 86.4 59.9ZM101.9 60Q91.8 40.5 81.1 25.4Q96.3 38.4 105.8 60ZM116.7 59.1Q108.8 46.4 100.3 36.9Q112.5 44.3 120.1 59.1ZM133.9 60.6Q146.4 45.9 164.6 45.2Q150.1 49.4 138 60.6ZM134.7 60.6Q123.1 47.3 110.5 38.7Q126.7 44.5 138.3 60.6ZM134 60.6Q123.5 45.8 110.8 36.4Q127.5 43.2 137.9 60.6ZM152.7 58.2Q144.1 48.2 135.8 40.1Q148.6 44.9 157.2 58.2ZM169.9 59Q160 45.2 150.2 34.5Q163.5 42.9 173.3 59ZM167.2 59Q179.9 44.9 194.3 39.1Q183.2 48.2 170.9 59ZM206.6 59.3Q210.3 39.7 217.1 24.9Q215.5 40.8 210.9 59.3ZM205.8 59.3Q216.9 46.5 231.8 44.3Q220.1 49.7 209.4 59.3ZM222.8 59.5Q220.1 37.3 218.3 18.9Q223.9 36.9 225.9 59.5ZM223.1 59.5Q212.7 44 200.2 33.8Q217.2 41.3 227.2 59.5ZM260 60.3Q248.8 44.5 236.9 33Q253 41.8 264 60.3ZM277.4 58.4Q282.5 41.5 291.2 29.6Q286.4 42.8 280.7 58.4ZM275.1 58.4Q281.8 35.7 291.1 18.8Q285.4 36.9 278.2 58.4ZM310.5 60.2Q302.4 48.7 293.6 40.4Q306.7 46.1 314.5 60.2ZM334.1 60.7Q330 37.1 325.7 17.8Q333.7 36.5 337.2 60.7ZM337.3 60.7Q347.7 42.6 360.4 31.2Q350.5 44.3 339.9 60.7ZM334.3 60.7Q344.5 43.5 359.8 35.6Q348.2 45.9 337.9 60.7ZM354 59.4Q362.5 41 374.1 29.3Q367.5 43.6 358.4 59.4ZM355.2 59.4Q344.6 47.3 330.8 42.5Q347.1 45.2 357.9 59.4ZM355.1 59.4Q347.1 44.1 338.2 32.5Q350.9 42.3 358.4 59.4ZM374 58.3Q381.6 35.6 393 19.5Q386.4 37.3 378.1 58.3ZM373 58.3Q362.5 45.7 351.1 37.2Q365.8 43.1 376.4 58.3ZM415.9 60.7Q408.3 39.8 400.6 22.8Q411.9 38.5 419 60.7ZM415.3 60.7Q417.8 40.7 422.7 24.9Q421.3 41.2 418.1 60.7ZM412.8 60.7Q403.3 49.1 392.8 41Q407.8 45.9 417.3 60.7ZM436.2 61Q424.1 50.4 410.2 46.4Q427.1 47.4 439.5 61ZM439 61Q429.4 48.8 421.8 37.7Q433.5 46 443 61ZM460.4 59.5Q458.3 36.3 457.7 17.2Q462.1 36.1 463.4 59.5ZM474.9 60.6Q467.5 38.4 458.7 21Q470.7 37.4 477.6 60.6ZM476.8 60.6Q467 43.4 456.6 30.4Q470.8 41.5 480.1 60.6ZM498 60.9Q487.4 49 479.1 37.6Q491.7 45.6 502.4 60.9ZM498.5 60.9Q498.8 36.3 502.5 16.3Q503.8 36.5 502.5 60.9ZM514.4 58.6Q525.2 42.9 538.2 34.7Q529.5 46.2 518.8 58.6ZM515.5 58.6Q502.8 46.1 490.9 36.4Q505.9 43.3 518.9 58.6ZM517.2 58.6Q519.5 33.3 526.3 13.3Q524 33.8 520.8 58.6ZM535.6 59Q532.3 40.8 529.7 25.8Q535.9 40.3 538.6 59ZM580.3 60Q577.5 41.6 576.5 26.2Q580.9 41.1 583 60ZM581.6 60Q588.8 45 597.8 35Q591.8 46.6 584.3 60ZM578.1 60Q569.7 46 561.3 34.9Q574.5 43.5 582.4 60ZM601 60.6Q597.3 39.4 596.3 21.5Q602.6 38.6 605.2 60.6ZM600.5 60.6Q605.7 39.9 614.4 24.7Q610.3 41.2 604.3 60.6ZM635.2 58.9Q644.8 41.7 656.8 31.2Q648.7 44.1 638.9 58.9ZM634.5 58.9Q642.3 40 654.3 27.9Q646.4 41.8 638.1 58.9ZM650.6 59.4Q650.6 37 653.9 18.9Q655.8 37.1 654.8 59.4ZM-59.6 59.4Q-59.6 37 -56.2 18.9Q-54.3 37.1 -55.3 59.4ZM650.3 59.4Q638.6 44.6 624.8 35.6Q642.8 41.6 654.4 59.4ZM-59.5 59.4Q-71.1 44.6 -85 35.6Q-67 41.6 -55.4 59.4ZM651 59.4Q664.1 44.8 681.3 42.4Q667.4 48.1 654.7 59.4ZM-59.3 59.4Q-46.2 44.8 -29 42.4Q-43 48.1 -55.6 59.4ZM681.2 58.4Q669 46 653.5 42Q672.5 42.9 685 58.4ZM-29.1 58.4Q-41.3 46 -56.8 42Q-37.9 42.9 -25.4 58.4ZM681.6 58.4Q674.1 43.6 666.8 31.5Q678 41.8 685 58.4ZM-29 58.4Q-36.5 43.6 -43.8 31.5Q-32.6 41.8 -25.6 58.4Z"/><path fill="#2c9418" d="M6.4 58.6Q17.3 44.3 30.4 37.8Q21.5 47.8 10.7 58.6ZM716.6 58.6Q727.6 44.3 740.6 37.8Q731.7 47.8 721 58.6ZM6.7 58.6Q17.9 39.3 34.8 30.1Q21.7 41.7 10.2 58.6ZM717 58.6Q728.3 39.3 745.2 30.1Q732.1 41.7 720.6 58.6ZM29.1 59.6Q24.1 41.6 18.9 27Q28.6 40.5 32.8 59.6ZM740.2 59.6Q735.2 41.6 730 27Q739.7 40.5 744 59.6ZM49.9 58.3Q45.7 35.9 43.3 17.2Q49.1 35.3 52.7 58.3ZM760.8 58.3Q756.7 35.9 754.3 17.2Q760.1 35.3 763.6 58.3ZM66.7 60.8Q54.5 47.1 41.1 38.3Q57.8 44.4 70.1 60.8ZM68.5 60.8Q56.9 47 46.8 34.9Q61.2 43.7 72.8 60.8ZM83.3 59.9Q91.6 38.6 103.3 23.7Q94.9 39.9 86.2 59.9ZM84.2 59.9Q76 39.9 70 22.7Q81.1 38 88.5 59.9ZM83.9 59.9Q94.9 42.2 112.7 35.9Q98.4 44.6 87.3 59.9ZM103.7 60Q98.9 40.1 95.3 23.5Q103 39.2 107 60ZM101.7 60Q97 39.8 92.5 23.2Q100.5 39 104.6 60ZM118.9 59.1Q107.1 44.2 96 32.1Q111.4 41.1 123.3 59.1ZM118.3 59.1Q128.3 43.5 142 36Q132.4 46.3 122.2 59.1ZM116.5 59.1Q110.6 38.6 106 21.4Q115.9 37.3 120.9 59.1ZM134.4 60.6Q127.6 46.6 121.4 35Q131.5 44.9 137.9 60.6ZM135.3 60.6Q124.6 44.4 110.5 35.1Q127.3 42.7 137.9 60.6ZM132.1 60.6Q128.3 34.8 124.5 13.7Q131.7 34.4 134.8 60.6ZM152.6 58.2Q164.7 43.2 178.5 35.9Q168.1 46.2 156.2 58.2ZM154.9 58.2Q152.7 36.1 151.7 17.9Q156.1 35.8 157.7 58.2ZM155.5 58.2Q166 38.5 179.5 26Q169.1 40.3 158.3 58.2ZM154.3 58.2Q164.9 42.8 179.8 36.7Q168.1 45.3 157.5 58.2ZM153.6 58.2Q143.1 39.9 131 26.6Q148.1 37.3 158.1 58.2ZM167.4 59Q162.4 38.4 156.1 22Q165.8 37.6 170.2 59ZM170.2 59Q172.4 35.6 178.4 17Q175.8 35.9 172.8 59ZM168.4 59Q177.8 44.9 193 41.4Q181.5 47.6 172.1 59ZM184.8 59.8Q182.7 38.3 183.5 20.5Q187.7 38 188.8 59.8ZM188.7 59.8Q182.1 40.8 176.4 25Q185.9 39.6 191.9 59.8ZM187.5 59.8Q177.3 41.8 166.3 28.3Q180.9 39.9 190.7 59.8ZM207.3 59.3Q217.9 39.2 232.9 27.4Q221.3 41.1 210.4 59.3ZM209.3 59.3Q204.1 37 200 18.5Q209.3 35.9 213.6 59.3ZM207 59.3Q209.8 36.2 216.3 18.1Q213.9 36.8 210.4 59.3ZM209.2 59.3Q216.1 42 227.5 31.2Q219.6 43.5 212.2 59.3ZM206.5 59.3Q207.1 31.5 210.3 8.9Q210.7 31.6 209.4 59.3ZM223.9 59.5Q222.1 34.4 222.2 13.6Q227 34.1 227.8 59.5ZM240.3 60.6Q231.9 44.8 223.1 32.5Q234.9 43.3 242.9 60.6ZM259.1 60.3Q269.6 47.8 285.5 48.4Q273.1 51.1 263 60.3ZM258 60.3Q263.6 41.7 272.9 28.8Q268.7 43.5 262.4 60.3ZM258.7 60.3Q265.3 39.9 278.7 27.1Q270 41.5 262.7 60.3ZM274.1 58.4Q281.2 36.9 295.6 23.6Q285.7 38.6 277.9 58.4ZM297.6 59.5Q290.1 43 282.1 30.1Q293.5 41.6 300.5 59.5ZM297.5 59.5Q292.3 37 286.2 18.9Q295.8 36.2 300.4 59.5ZM294.8 59.5Q287.1 47.1 277.5 38.8Q291.2 44.8 298.5 59.5ZM335.9 60.7Q323.8 45.2 307.5 38.2Q327.2 42.7 339.3 60.7ZM336.9 60.7Q331.3 43.3 324.5 29.6Q335.2 42.1 340.2 60.7ZM354.1 59.4Q347 38.4 341.1 20.8Q352.3 36.7 358.6 59.4ZM355.2 59.4Q364.1 46.2 378.6 43.2Q367.1 48.4 358.1 59.4ZM374.7 58.3Q378.5 38 387 23Q383 39 378.5 58.3ZM393.6 60.2Q384 46.8 376.4 34.8Q388.2 44.1 397.5 60.2ZM415 60.7Q426.5 42 439.6 30Q430 44.3 418.4 60.7ZM437.6 61Q431.3 39.1 425 21.4Q435.9 38 441.3 61ZM457.8 59.5Q446.5 45.1 433.3 36.4Q449.4 43 460.6 59.5ZM459.1 59.5Q458.6 38.3 461.4 21.1Q464.2 38.4 463.6 59.5ZM477.1 60.6Q468.3 51.2 457.5 46.8Q472.3 48 481.2 60.6ZM476 60.6Q463.4 47.3 447.9 41.9Q466.5 44.7 479.2 60.6ZM477.4 60.6Q471.7 45.2 465.6 32.9Q476.9 43.5 481.8 60.6ZM477.7 60.6Q469.8 45.3 461 33.7Q473 43.8 480.5 60.6ZM500.1 60.9Q492.1 38.3 485.7 19.4Q496.1 37 503.4 60.9ZM514.8 58.6Q526.5 40 542.7 30.9Q531 43.1 519.1 58.6ZM514.9 58.6Q502.9 47.3 492.4 37.5Q505.9 44.4 518.2 58.6ZM537.4 59Q527.3 48.8 519 39.3Q530.9 45.7 541.2 59ZM536.4 59Q529.2 40.8 520.3 27Q532.4 39.6 539.1 59ZM555.9 58.1Q562.4 35 575.3 19.3Q567.1 36.5 559.9 58.1ZM556.2 58.1Q561.5 41 571.6 29.8Q566.5 42.7 560.5 58.1ZM580.6 60Q592.2 45.5 607.3 40.5Q595.4 48.3 584 60ZM618.1 60.7Q608.3 50 597 43.7Q612 46.9 622 60.7ZM635.1 58.9Q644.1 45.2 657.4 39.7Q647.1 47.3 638 58.9ZM634.5 58.9Q637.6 37.6 644.4 21.2Q642.6 38.4 638.6 58.9ZM635.6 58.9Q646.6 43.2 659.3 34.5Q650.2 46 639.2 58.9ZM649.9 59.4Q642.3 41.8 632.5 28.9Q646.6 40.1 653.5 59.4ZM-59.3 59.4Q-66.8 41.8 -76.7 28.9Q-62.6 40.1 -55.6 59.4ZM652.1 59.4Q642.8 44.7 632.3 34.1Q647.4 42.1 656.4 59.4ZM-59.6 59.4Q-69 44.7 -79.4 34.1Q-64.3 42.1 -55.3 59.4ZM680.5 58.4Q689 38.2 703.7 26.3Q692 39.5 683.2 58.4ZM-28.6 58.4Q-20.1 38.2 -5.4 26.3Q-17.1 39.5 -25.9 58.4ZM679.6 58.4Q683.9 33 692.5 13.6Q687.6 33.7 682.6 58.4ZM-28.8 58.4Q-24.5 33 -15.8 13.6Q-20.7 33.7 -25.8 58.4ZM680.5 58.4Q672 45.5 663.9 35Q675.9 43.2 684 58.4ZM-29.1 58.4Q-37.5 45.5 -45.6 35Q-33.6 43.2 -25.5 58.4ZM682.2 58.4Q671.3 44.5 660.4 34.1Q674.4 42.3 685.3 58.4ZM-28.8 58.4Q-39.7 44.5 -50.6 34.1Q-36.6 42.3 -25.7 58.4ZM702.1 58.9Q705.8 38.7 713.7 23.5Q709.7 39.5 705.2 58.9ZM-7 58.9Q-3.2 38.7 4.6 23.5Q0.7 39.5 -3.8 58.9ZM704.5 58.9Q697.4 37.7 689.6 20.8Q701.5 36.4 708 58.9ZM-7.1 58.9Q-14.2 37.7 -22.1 20.8Q-10.1 36.4 -3.7 58.9Z"/><path fill="#3dab1f" d="M8.3 58.6Q10.3 32.5 15.3 11.6Q14.9 32.9 12 58.6ZM717 58.6Q719 32.5 724 11.6Q723.5 32.9 720.6 58.6ZM6 58.6Q7.6 36.9 13 19.7Q11.7 37.3 9.3 58.6ZM717.1 58.6Q718.8 36.9 724.2 19.7Q722.9 37.3 720.4 58.6ZM30.8 59.6Q22.7 42.3 13.9 28.7Q26.7 40.5 34.4 59.6ZM740.3 59.6Q732.2 42.3 723.4 28.7Q736.2 40.5 743.9 59.6ZM49.1 58.3Q56.3 35.3 68.1 19.2Q60.8 36.8 52.9 58.3ZM760.4 58.3Q767.5 35.3 779.4 19.2Q772 36.8 764.1 58.3ZM51.3 58.3Q60.5 37.8 76.9 26.8Q64.2 39.6 54.7 58.3ZM760.6 58.3Q769.7 37.8 786.1 26.8Q773.5 39.6 763.9 58.3ZM48.3 58.3Q42.3 42.2 35.6 29.5Q47.4 40.5 52.6 58.3ZM760.1 58.3Q754.1 42.2 747.4 29.5Q759.2 40.5 764.4 58.3ZM69.2 60.8Q59.6 46.2 49.1 35.6Q62.7 44.3 72.1 60.8ZM83.7 59.9Q90.9 41.5 100.6 28.6Q94.1 42.9 86.5 59.9ZM104.5 60Q97.5 37.1 90.7 18.4Q101.3 36 107.7 60ZM101.1 60Q110 38.6 120.8 23.3Q113.5 40.2 104.2 60ZM103.7 60Q96.9 36.4 90.6 16.9Q101.5 35.1 107.6 60ZM133.5 60.6Q141.1 45 153.9 37.2Q145.5 47.4 137.4 60.6ZM131.8 60.6Q121.3 51.5 111.5 44.1Q124.8 48 135.7 60.6ZM131.8 60.6Q140.9 39.4 156.8 27.5Q145.6 41.6 136 60.6ZM154.7 58.2Q160.4 40.2 171.7 28.7Q164.4 41.6 158.1 58.2ZM152.2 58.2Q145.1 36.4 135.8 19.7Q148.8 35.3 155.2 58.2ZM186.2 59.8Q195.6 43.8 209.8 36.4Q199.1 46.1 189.6 59.8ZM186.8 59.8Q195.7 46.4 207.1 39.9Q199.8 49.5 190.9 59.8ZM185.8 59.8Q197.3 42.8 212.6 34.7Q200.7 45.2 189.1 59.8ZM207.2 59.3Q196 42.8 181.3 33.3Q200 40.3 211 59.3ZM224.3 59.5Q221.7 33.2 220.5 11.5Q225.7 32.9 227.5 59.5ZM222.6 59.5Q212.8 43.5 201 32.5Q216.8 41.3 226.3 59.5ZM225.4 59.5Q219.9 43.4 214.4 30.3Q223.7 42.2 228.6 59.5ZM223.3 59.5Q212.6 50.4 203.3 42.3Q215.8 47.2 226.9 59.5ZM240.2 60.6Q237.3 41.7 236.1 25.9Q241.1 41.2 243.2 60.6ZM241.4 60.6Q231.4 45.8 219.9 35.5Q236.2 42.9 245.9 60.6ZM274.9 58.4Q268.3 43.9 260.2 33.2Q272.1 42.4 278.2 58.4ZM275.1 58.4Q270 33.7 266.4 13.2Q273.3 33.1 277.8 58.4ZM276.9 58.4Q278.4 32 283 10.7Q283.4 32.3 280.9 58.4ZM296.9 59.5Q306.3 42 321.6 33.6Q309.9 44.1 300.2 59.5ZM297.3 59.5Q298.5 33.3 303.3 12.2Q302.7 33.6 300.7 59.5ZM312.6 60.2Q307 39.2 303.2 21.5Q311.4 38.1 316.2 60.2ZM310.1 60.2Q319.3 47.8 334.2 47.3Q323.3 51.2 314.3 60.2ZM311.6 60.2Q301.5 49.2 291.9 40.4Q305.4 46 315.6 60.2ZM351.7 59.4Q351.7 39.5 354.7 23.3Q356.4 39.6 355.4 59.4ZM372.4 58.3Q368.9 33.1 366.9 12.3Q373 32.6 375.7 58.3ZM390.8 60.2Q395.3 40.5 402.6 25.7Q400 41.7 394.6 60.2ZM394 60.2Q402.6 47.3 415.1 42.4Q405.8 49.7 397.2 60.2ZM414 60.7Q415.7 41.1 420.5 25.6Q419.4 41.5 417 60.7ZM414.1 60.7Q413.8 39.7 416.2 22.5Q418.3 39.7 417.8 60.7ZM412 60.7Q400.8 46.4 389.7 35.6Q404.1 44 415.2 60.7ZM415.3 60.7Q414.3 35.4 416.2 14.6Q419.6 35.3 419.5 60.7ZM412.6 60.7Q421.8 48 433.9 42.8Q425.5 51 416.4 60.7ZM436.4 61Q424.5 48.2 410.5 41.8Q427 46 439 61ZM459 59.5Q466.5 43 478.3 33.3Q469.8 44.6 462 59.5ZM476.8 60.6Q465.8 44.1 453.6 32.4Q470.3 41.4 481 60.6ZM475.7 60.6Q472.4 41.4 470.5 25.4Q477.8 40.6 480 60.6ZM476.3 60.6Q473.5 36.3 471.4 16.2Q476.9 35.9 479 60.6ZM498.5 60.9Q493.7 44.3 491.1 30Q498.6 43.1 502.5 60.9ZM500.7 60.9Q506.5 39.1 517.3 23.7Q510.9 40.4 504.4 60.9ZM498.6 60.9Q488.7 51.2 477 46.9Q491.2 48.9 501.4 60.9ZM516.7 58.6Q507.2 46.2 498.4 36Q511 43.6 520.4 58.6ZM516.4 58.6Q507.3 45 498.9 33.8Q511.2 42.6 520.1 58.6ZM535.4 59Q525.2 44.6 514.7 33.6Q529.1 42 539.1 59ZM536.2 59Q541.7 39.4 551.7 25.6Q546 40.7 539.8 59ZM558.7 58.1Q557.4 32.5 557.5 11.5Q560.7 32.4 561.4 58.1ZM558 58.1Q548.1 41.6 534.9 31.2Q552.5 39.1 562 58.1ZM579.1 60Q577.6 34.3 578.2 13.1Q581.4 34.1 582.1 60ZM580.9 60Q586.9 40 596.6 25.7Q590.2 41.1 583.7 60ZM601.7 60.6Q589.6 45.7 576.7 35.2Q593.8 42.6 605.9 60.6ZM601.4 60.6Q591.8 49.9 580.9 43.6Q594.7 47.5 604.4 60.6ZM620.4 60.7Q623.2 35.2 630.1 15.1Q628.4 35.8 624.5 60.7ZM617.6 60.7Q619.4 37 624.7 18.2Q624.9 37.6 622.1 60.7ZM620.8 60.7Q628.9 37.9 642.3 22.5Q632.6 39.3 623.9 60.7ZM617.7 60.7Q613.4 36.4 609.7 16.4Q618.1 35.7 621.4 60.7ZM652.8 59.4Q662.1 47.2 673.8 42.3Q665.4 50 656.3 59.4ZM-59.2 59.4Q-49.9 47.2 -38.1 42.3Q-46.5 50 -55.7 59.4ZM648.4 59.4Q653.7 35.3 666 18.4Q659.1 36.7 652.8 59.4ZM-59.7 59.4Q-54.3 35.3 -42.1 18.4Q-48.9 36.7 -55.2 59.4ZM665.6 60.4Q658.8 45.3 651.4 33.4Q662.5 43.7 668.9 60.4ZM-43.7 60.4Q-50.5 45.3 -57.9 33.4Q-46.8 43.7 -40.4 60.4ZM663.8 60.4Q653.7 45.9 645 33.3Q658.2 43 668.2 60.4ZM-44.2 60.4Q-54.4 45.9 -63.1 33.3Q-49.8 43 -39.9 60.4ZM679.6 58.4Q685.9 42 695.3 30.9Q688.9 43.3 682.1 58.4ZM-28.6 58.4Q-22.2 42 -12.8 30.9Q-19.2 43.3 -26 58.4ZM704.9 58.9Q709.6 34.1 717.5 14.9Q713.5 34.9 708.1 58.9ZM-7 58.9Q-2.3 34.1 5.6 14.9Q1.6 34.9 -3.8 58.9ZM704.5 58.9Q712.8 37 726.6 22.8Q716.6 38.5 707.8 58.9ZM-7.1 58.9Q1.3 37 15.1 22.8Q5 38.5 -3.8 58.9ZM704 58.9Q710.2 35.2 719 17.1Q713.3 36 706.7 58.9ZM-6.7 58.9Q-0.6 35.2 8.2 17.1Q2.6 36 -4.1 58.9ZM702.2 58.9Q700.4 35.7 701.1 16.6Q705.2 35.4 706.1 58.9ZM-7.3 58.9Q-9.2 35.7 -8.5 16.6Q-4.4 35.4 -3.5 58.9Z"/><path fill="#258a14" d="M30.8 59.6Q23.3 41.5 15.6 27.1Q26.6 40.3 33.6 59.6ZM740.7 59.6Q733.2 41.5 725.5 27.1Q736.5 40.3 743.5 59.6ZM50.9 58.3Q42.2 36.8 34.5 19Q45.9 35.4 54.1 58.3ZM760.7 58.3Q752 36.8 744.2 19Q755.6 35.4 763.8 58.3ZM70 60.8Q74.7 38.7 85.5 22.9Q79.4 39.8 73.9 60.8ZM69.4 60.8Q57.4 49.5 43.6 44Q60.7 46.3 73.1 60.8ZM83.7 59.9Q89 39.1 98.6 24.1Q92.7 40.2 86.8 59.9ZM101.4 60Q92.4 46.3 80.8 38.1Q95.2 44.6 104 60ZM101.8 60Q108.3 39.8 119.2 25.9Q113.4 41.6 106.1 60ZM118.6 59.1Q114.5 34.4 111 14Q119.2 33.7 122.4 59.1ZM117.7 59.1Q109.1 44.2 99.6 32.9Q113.1 42 121.4 59.1ZM118.7 59.1Q129.9 44.5 145.3 40.3Q133.9 47.9 122.9 59.1ZM134.1 60.6Q124.4 49.8 116.4 39.9Q128.3 46.8 138.1 60.6ZM154.4 58.2Q150.2 38 148.4 21Q154.3 37.3 157.7 58.2ZM152.5 58.2Q146.7 39.4 143.3 23.3Q151.3 38.2 156.3 58.2ZM166.6 59Q156.8 50.3 148.1 42.8Q159.9 47.3 170.1 59ZM168.2 59Q177.2 39.1 190.9 27Q181.7 41.3 172.3 59ZM188.2 59.8Q199.1 44.6 212.9 37.5Q202.4 47.1 191.6 59.8ZM188.4 59.8Q197.5 45 209.9 37.7Q201.8 47.9 192.5 59.8ZM187.4 59.8Q188.8 35.7 193.2 16.4Q192.4 36 190.3 59.8ZM223 59.5Q230.9 40.6 243.7 29.1Q235.2 42.6 226.8 59.5ZM242.5 60.6Q252.6 43.6 267.7 35.9Q257.1 46.6 246.7 60.6ZM242.4 60.6Q243.7 40.1 247.4 23.5Q247.4 40.3 245.4 60.6ZM239.8 60.6Q238.3 37.1 239.5 17.7Q243 36.9 243.6 60.6ZM241.3 60.6Q232.1 41 219.1 27.7Q235.3 39.6 244.1 60.6ZM259.1 60.3Q249.8 44.4 241.2 31.6Q252.9 42.8 261.9 60.3ZM258.3 60.3Q252.9 36.1 248.7 16Q258 35.1 262.5 60.3ZM277.5 58.4Q278.9 33.9 282.3 14.1Q282.2 34.2 280.2 58.4ZM274.1 58.4Q279.3 39.7 288.3 26.2Q282.3 40.6 276.7 58.4ZM294.9 59.5Q288.1 41.2 280.6 26.7Q292 39.9 298.2 59.5ZM295.5 59.5Q308.3 45.1 324 41Q312 48.8 299.8 59.5ZM293.9 59.5Q298.5 42 307.2 29.6Q303 43.3 297.7 59.5ZM296.3 59.5Q291.8 37 287.4 18.5Q296.7 36.1 300.3 59.5ZM311.7 60.2Q308.8 34.4 307.1 13.2Q313.3 34 315.3 60.2ZM310.4 60.2Q309.3 32 309.9 8.8Q313 31.9 313.4 60.2ZM311.9 60.2Q315.3 39.7 324.4 24.7Q320.7 40.8 316.2 60.2ZM337.3 60.7Q346.7 39.6 359 25.4Q351.3 41.8 341.5 60.7ZM335.9 60.7Q343.8 39.5 356.4 25.5Q347.8 41.1 339.3 60.7ZM352.4 59.4Q343.5 39.7 333.9 24.4Q347.5 38.1 355.9 59.4ZM355.5 59.4Q347.8 39.7 339.3 24.4Q351 38.6 358.2 59.4ZM372.3 58.3Q381.5 43.2 396.3 37.8Q385.9 46.1 376.5 58.3ZM390.7 60.2Q387.4 41.1 386.8 24.9Q392.7 40.3 395 60.2ZM393.7 60.2Q384.1 49.7 372.1 45.2Q386.5 47.6 396.3 60.2ZM392.1 60.2Q397.2 36.9 405.6 19.4Q402.6 38.2 396.6 60.2ZM391.4 60.2Q401.2 39.2 416.8 27.1Q405.2 41.2 395 60.2ZM413 60.7Q406.8 43.7 400.4 30Q411.1 42.3 416.6 60.7ZM413.1 60.7Q408.2 40.3 404.7 23.2Q412.5 39.3 416.6 60.7ZM413.9 60.7Q404.4 48.5 396 38.1Q408 45.9 417.5 60.7ZM438.2 61Q428.7 49.6 416.9 43.7Q431.7 47.3 441.3 61ZM439.3 61Q435.1 43.1 433.3 27.8Q439.5 42.1 442.9 61ZM436.4 61Q430.4 37.8 424.5 18.9Q435.2 36.7 440.4 61ZM436.3 61Q447.6 46.6 461.7 41Q451.7 50.2 440.6 61ZM435.8 61Q424.3 44.3 412.7 31.6Q427.3 42.4 438.7 61ZM437 61Q434.1 39.4 432.5 21.5Q438.9 38.8 440.8 61ZM460.3 59.5Q463 33.6 469.4 13.1Q467 34.1 463.6 59.5ZM458.8 59.5Q460.9 38.5 466.6 22Q464.3 38.9 461.5 59.5ZM461.4 59.5Q451.4 40.3 442.1 24.8Q454.4 38.8 464.1 59.5ZM498.1 60.9Q505 40.9 517.2 27.8Q508.8 42.4 501.3 60.9ZM518.6 58.6Q522.3 33.3 529.2 13.5Q526.6 34 522 58.6ZM517.4 58.6Q512.9 34.2 511.6 13.6Q518.3 33.3 521.8 58.6ZM557.1 58.1Q567 46.5 579.2 42.6Q569.8 49.2 560.2 58.1ZM558.9 58.1Q566.8 37.7 579.2 24.3Q570.8 39.3 562.3 58.1ZM556.1 58.1Q566.4 41.4 582.5 35.1Q570.9 44.5 560.5 58.1ZM557.1 58.1Q560.4 39 566.8 24.3Q563.9 39.6 559.9 58.1ZM580.5 60Q589.5 47.3 602.2 42.8Q592.9 49.9 583.9 60ZM577.8 60Q568.8 40.4 556.9 26.5Q572.3 38.9 580.9 60ZM602.2 60.6Q612.1 45.1 628.4 40.5Q615.5 47.4 605.5 60.6ZM599.7 60.6Q610.4 48 622.3 42.4Q613.9 51.4 603.6 60.6ZM616.5 60.7Q608.2 45 601.6 31.2Q613.2 42.6 621 60.7ZM617.7 60.7Q610.5 37.8 604 19Q615.4 36.4 621.7 60.7ZM619 60.7Q627.5 43.6 640.9 34.2Q630.6 45.3 621.8 60.7ZM620.3 60.7Q622 38 626.2 19.7Q625.3 38.3 622.9 60.7ZM636 58.9Q638.7 38.1 645.3 22Q642.1 38.6 638.7 58.9ZM650 59.4Q658.5 41.6 670.5 30.8Q662.8 43.9 654 59.4ZM-59.4 59.4Q-51 41.6 -39 30.8Q-46.6 43.9 -55.5 59.4ZM649.8 59.4Q643.1 41.2 638.8 25.5Q647.6 39.7 653.6 59.4ZM-59.4 59.4Q-66.1 41.2 -70.3 25.5Q-61.6 39.7 -55.6 59.4ZM665.1 60.4Q671.8 40.6 682.7 26.9Q675 41.7 667.8 60.4ZM-43.4 60.4Q-36.6 40.6 -25.8 26.9Q-33.5 41.7 -40.7 60.4ZM667 60.4Q672.2 37.9 682 21.4Q676.8 39.1 670.7 60.4ZM-43.9 60.4Q-38.7 37.9 -28.9 21.4Q-34.1 39.1 -40.2 60.4ZM682.2 58.4Q672.6 45.2 662.3 35.7Q675.7 43.1 685.2 58.4ZM-28.8 58.4Q-38.4 45.2 -48.6 35.7Q-35.3 43.1 -25.8 58.4ZM680.2 58.4Q690.4 38 707.5 27.6Q694.1 40 683.6 58.4ZM-29 58.4Q-18.8 38 -1.7 27.6Q-15 40 -25.6 58.4ZM704.7 58.9Q693.7 44.8 681.1 35.9Q697.6 42.1 708.4 58.9ZM-7.3 58.9Q-18.3 44.8 -30.9 35.9Q-14.4 42.1 -3.5 58.9ZM701.3 58.9Q704.9 40.4 712 26.6Q709.7 41.5 705.3 58.9ZM-7.4 58.9Q-3.8 40.4 3.3 26.6Q1 41.5 -3.5 58.9Z"/><path fill="#66cb2a" d="M20.3 61Q8.3 51.9 -2.4 44.3Q10.9 48.9 23.4 61ZM732.1 61Q720.2 51.9 709.5 44.3Q722.8 48.9 735.3 61ZM20.4 61Q24.3 44.9 33.8 34.3Q29.2 46.3 24.5 61ZM731.7 61Q735.6 44.9 745.1 34.3Q740.4 46.3 735.7 61ZM39.5 60.6Q42.5 43.6 49.5 31Q46.9 44.5 43.1 60.6ZM747.6 60.6Q750.5 43.6 757.6 31Q755 44.5 751.2 60.6ZM38.4 60.6Q30.4 49.7 20.5 43.2Q33.1 47.9 40.9 60.6ZM748.1 60.6Q740.2 49.7 730.3 43.2Q742.8 47.9 750.7 60.6ZM37.5 60.6Q29 46.1 21 34.3Q32.6 44.2 40.7 60.6ZM747.8 60.6Q739.4 46.1 731.4 34.3Q742.9 44.2 751 60.6ZM37.3 60.6Q27 51.1 13.7 49.8Q29.3 48.8 39.9 60.6ZM748.1 60.6Q737.8 51.1 724.5 49.8Q740.2 48.8 750.7 60.6ZM52.8 60.8Q64.7 45.5 83 43.8Q68.2 48.5 56.5 60.8ZM762.5 60.8Q774.4 45.5 792.7 43.8Q777.9 48.5 766.2 60.8ZM53.2 60.8Q62 43.8 75 34.2Q65.9 45.9 56.8 60.8ZM762.6 60.8Q771.4 43.8 784.4 34.2Q775.3 45.9 766.1 60.8ZM51.7 60.8Q49.1 44.7 47.6 31.2Q52.2 44.2 54.2 60.8ZM763.1 60.8Q760.5 44.7 759.1 31.2Q763.6 44.2 765.6 60.8ZM69.7 60.1Q78.7 44 94.5 38.4Q83 46.7 73.7 60.1ZM67.5 60.1Q57.4 48.2 44.3 42.9Q60.7 45.6 70.9 60.1ZM69.2 60.1Q57.4 47.9 43.1 42.8Q59.7 45.8 71.7 60.1ZM85.1 59.5Q97.9 45.6 114.7 43.8Q101.3 49.1 88.9 59.5ZM97.3 60.8Q88.4 52.5 77.3 50.1Q90.7 50.3 99.8 60.8ZM100.2 60.8Q95.7 41.5 93.8 25Q100.3 40.6 104 60.8ZM118.9 59.5Q106.1 50.9 91.7 50.4Q108.8 47.5 122.4 59.5ZM120.7 59.5Q124.5 40.7 132.2 26.8Q127.4 41.4 123.1 59.5ZM119.9 59.5Q122.2 40.4 127.8 25.5Q125.3 40.8 122.5 59.5ZM133.5 59.2Q145.6 41.8 160.3 32.6Q149.4 44.6 137.3 59.2ZM137.5 59.2Q130.1 41.7 121.5 28.2Q133.5 40.3 140.4 59.2ZM150 59.5Q141.6 52.6 134.3 46Q145 49.1 153.9 59.5ZM150.5 59.5Q144.4 37.1 137 19.4Q148 36.2 153.5 59.5ZM170.6 60.6Q158.6 47.7 142.7 44.3Q161.3 45.5 173.4 60.6ZM190.6 59.9Q189.6 41.2 190.3 25.8Q192.8 41.1 193.2 59.9ZM188.3 59.9Q200 46.7 215.8 45.3Q203.6 50.3 192.3 59.9ZM188.4 59.9Q179.3 47.2 167.8 39.7Q183.4 44.5 192.3 59.9ZM189.4 59.9Q180.7 49.4 169.7 44.1Q183.7 47.1 192.4 59.9ZM209.3 60.5Q198.9 53.4 186.9 53.6Q201.4 50.4 212.4 60.5ZM208.4 60.5Q203.4 37.5 197.5 18.9Q207.3 36.7 211.6 60.5ZM227.1 60.7Q232.1 40 240.5 24.7Q237 41.3 231.2 60.7ZM246.1 59.8Q236.8 41.7 227.3 27.5Q240.4 40 249.3 59.8ZM248.1 59.8Q254 42.2 265.5 31Q257.8 43.5 251.4 59.8ZM246.3 59.8Q244 42.4 243.2 27.9Q248.5 41.9 249.9 59.8ZM246.3 59.8Q252.4 44.2 262.8 34.6Q256.7 46 250 59.8ZM266 60.8Q274.2 46.1 286.7 39Q278.3 48.6 269.9 60.8ZM266.1 60.8Q266.5 40.5 269.8 24.1Q271 40.7 269.8 60.8ZM268.4 60.8Q269.9 40 273.8 23.3Q273.9 40.4 271.6 60.8ZM282.3 60Q291.2 44.2 305.1 36.8Q294.6 46.2 285.4 60ZM283.1 60Q271.1 45.6 256.9 37.5Q274.1 43.3 286.1 60ZM295.9 59.8Q305 48.2 317.6 44.9Q307.7 50.5 298.8 59.8ZM315 60.7Q309.9 38.7 305.3 20.6Q313.1 38 317.5 60.7ZM331.6 59.7Q321.6 43.2 309.4 31.8Q325.5 41 335.2 59.7ZM333.3 59.7Q325.2 43.8 315.2 32.2Q329.4 41.8 337 59.7ZM350.4 59.7Q344.6 46.2 338.6 35.3Q348.9 44.5 354.1 59.7ZM373.2 59.1Q370.9 42.3 369.7 28.3Q374.1 41.9 375.8 59.1ZM372.5 59.1Q367 39.8 363.1 23.6Q371.3 38.7 376.1 59.1ZM371 59.1Q381.6 50 393.6 49.5Q383.9 53 374.1 59.1ZM387.9 59.3Q379.6 50.1 371.7 42.8Q382.7 47.6 391.1 59.3ZM390.8 59.3Q393 41.2 398.7 27.1Q396.3 41.6 393.4 59.3ZM390.3 59.3Q390.5 41.7 392.8 27.4Q393.8 41.8 393 59.3ZM390.2 59.3Q400.9 41.9 414.9 32.2Q403.8 43.8 392.9 59.3ZM411.4 59.8Q417.8 43.9 429.7 34.9Q421.6 45.5 414.7 59.8ZM410.5 59.8Q414 38 421.4 21.4Q418.1 38.8 413.8 59.8ZM410.7 59.8Q399.3 48.8 389.6 39Q403.1 45.4 414.8 59.8ZM432.4 60.7Q442.2 51.6 454.9 54.1Q444.9 55 435.9 60.7ZM432.3 60.7Q426 47.4 420.4 36.4Q429.1 46.1 435 60.7ZM432 60.7Q444.3 48.6 457.9 45.1Q447.6 52.4 436.1 60.7ZM445.5 59.5Q451.4 44.5 460 34.6Q455.4 46.3 449 59.5ZM446.8 59.5Q436.5 52.6 425.2 50.9Q439 49.4 450 59.5ZM444.2 59.5Q454 49.3 465.8 47Q456.5 52 447.1 59.5ZM459.2 60.4Q471.5 49.2 484.1 44.9Q473.7 51.9 462 60.4ZM477.8 60.7Q484.4 43.9 494.9 33.3Q488.6 45.8 481.5 60.7ZM493.2 60.7Q500.1 41.8 510.6 28.7Q503.1 42.9 495.7 60.7ZM492.5 60.7Q494.5 37.8 499.6 19.6Q499.3 38.3 496.3 60.7ZM492.9 60.7Q492.2 35.5 493.6 14.8Q496.3 35.4 496.2 60.7ZM493.5 60.7Q500.3 45.6 509.1 35.6Q503.9 47.4 496.8 60.7ZM513.8 60.1Q504.5 54.5 493.9 55.6Q507.2 50.9 517.3 60.1ZM529.8 59.5Q519.1 50.7 507.7 45.9Q521.8 47.8 532.9 59.5ZM529.6 59.5Q535.9 42.3 546.6 31.2Q540.2 44 533.4 59.5ZM549.6 59.6Q561.1 43.3 577.1 36.7Q563.8 45.4 552.3 59.6ZM546.3 59.6Q542.5 40 539.2 23.7Q546.3 39.3 549.4 59.6ZM547.5 59.6Q536 43.9 524.9 31.5Q540.2 41.1 551.5 59.6ZM570 59.3Q565 38.4 562.2 20.8Q569.4 37.5 573.6 59.3ZM571.3 59.3Q566.7 37.4 563.8 19.1Q569.8 36.8 573.9 59.3ZM588.3 60.6Q586.9 39.6 587.2 22.4Q590.3 39.5 591 60.6ZM585.8 60.6Q597.3 43.6 614.1 36.9Q600 45.6 588.5 60.6ZM600.7 60.7Q600.5 40 603 23Q604.7 40 604.1 60.7ZM599.2 60.7Q608.3 41.4 624.2 31.4Q611.6 43.1 602.2 60.7ZM601.5 60.7Q592.9 40.6 586.3 23.4Q597 39 605.1 60.7ZM613.1 60.1Q624 47.3 637.4 43.2Q627.5 50.7 616.9 60.1ZM611.2 60.1Q615.8 41.9 623.6 28.5Q619.7 43 614.5 60.1ZM630.7 60.5Q619.5 52.6 606.2 53Q621.6 49.9 633.4 60.5ZM630.4 60.5Q628.2 43.3 628.4 28.9Q633.1 42.8 634.5 60.5ZM649 60.1Q642.2 42.3 635.5 27.8Q646.7 40.7 652.9 60.1ZM-61.3 60.1Q-68.1 42.3 -74.8 27.8Q-63.6 40.7 -57.4 60.1ZM662 60.7Q675.3 46.8 694.4 49.5Q678.4 50 665.5 60.7ZM-46.2 60.7Q-32.9 46.8 -13.9 49.5Q-29.9 50 -42.7 60.7ZM681.7 60.4Q692.3 49.9 705.9 49.9Q695.1 53 685 60.4ZM-27.7 60.4Q-17.1 49.9 -3.5 49.9Q-14.4 53 -24.4 60.4ZM681.7 60.4Q693.9 44.4 708.7 36.9Q697.5 47.4 685.4 60.4ZM-27.9 60.4Q-15.7 44.4 -0.9 36.9Q-12.1 47.4 -24.2 60.4ZM680.2 60.4Q667.9 48.2 653.4 42.5Q671.7 44.8 684.3 60.4ZM-28.1 60.4Q-40.5 48.2 -54.9 42.5Q-36.6 44.8 -24 60.4ZM682.1 60.4Q679.1 44.3 676.1 31.1Q682.3 43.8 684.7 60.4ZM-27.4 60.4Q-30.4 44.3 -33.4 31.1Q-27.2 43.8 -24.8 60.4ZM680.1 60.4Q692.1 47.7 708.9 49.2Q695.6 51.4 684.2 60.4ZM-28.1 60.4Q-16.1 47.7 0.7 49.2Q-12.6 51.4 -24 60.4ZM696.3 60Q705.2 40 718.8 27.7Q709.6 42.1 700.2 60ZM-14.2 60Q-5.3 40 8.2 27.7Q-0.9 42.1 -10.3 60ZM695 60Q689.2 43.6 683.7 30.2Q692.8 42.4 698.1 60ZM-13.8 60Q-19.6 43.6 -25.2 30.2Q-16 42.4 -10.8 60Z"/><path fill="#4dba22" d="M7.4 60.7Q10.9 40.5 16.9 24.8Q14.9 41.3 10.7 60.7ZM717.9 60.7Q721.4 40.5 727.5 24.8Q725.5 41.3 721.2 60.7ZM23 61Q28.1 41.9 38.9 29Q32.9 43.3 27 61ZM731.7 61Q736.8 41.9 747.6 29Q741.6 43.3 735.7 61ZM20.4 61Q10 49.7 -2.8 44.4Q13.9 46.5 24.4 61ZM731.7 61Q721.3 49.7 708.5 44.4Q725.2 46.5 735.8 61ZM21.3 61Q21.7 36 24.8 15.7Q26 36.1 24.8 61ZM732 61Q732.4 36 735.5 15.7Q736.7 36.1 735.4 61ZM38.1 60.6Q49.1 44 64.5 36.8Q52.9 46.8 41.9 60.6ZM747.5 60.6Q758.5 44 773.9 36.8Q762.4 46.8 751.3 60.6ZM52.5 60.8Q57.4 41.7 67.4 28.3Q62 42.9 56.3 60.8ZM762.5 60.8Q767.4 41.7 777.3 28.3Q771.9 42.9 766.2 60.8ZM53.3 60.8Q66.2 49.1 80 45.1Q68.3 51.6 55.9 60.8ZM763.1 60.8Q776 49.1 789.8 45.1Q778.1 51.6 765.7 60.8ZM54 60.8Q44.5 47.4 37 35.4Q48.1 45.1 57.4 60.8ZM762.6 60.8Q753.1 47.4 745.7 35.4Q756.7 45.1 766.1 60.8ZM53.2 60.8Q49 44.9 44.9 31.7Q53.7 43.8 57.1 60.8ZM762.4 60.8Q758.2 44.9 754 31.7Q762.9 43.8 766.3 60.8ZM54 60.8Q43.7 44 33 31.1Q48.1 41.6 58 60.8ZM762.4 60.8Q752.1 44 741.4 31.1Q756.4 41.6 766.4 60.8ZM68.5 60.1Q60.4 49.5 50.4 43.6Q62.9 47.8 70.9 60.1ZM84.3 59.5Q78.9 36.4 73.3 17.6Q83.3 35.5 87.9 59.5ZM85.4 59.5Q74.6 51.3 61.4 51.5Q77.1 48.4 88.5 59.5ZM99 60.8Q103 44.1 110.4 32.1Q107.9 45.5 103.2 60.8ZM122 59.5Q132.5 43.5 149.8 39.1Q135.3 45.4 124.7 59.5ZM120.8 59.5Q108.4 46 94.5 38.1Q112.2 42.9 124.6 59.5ZM121.7 59.5Q119.6 36 119.2 16.7Q123.9 35.7 125.2 59.5ZM120.6 59.5Q119.8 40.8 120.5 25.5Q122.8 40.7 123.1 59.5ZM136.5 59.2Q127 49.1 117.5 41.7Q129.9 46.6 139.5 59.2ZM136.2 59.2Q145.5 44 160.1 38.1Q149 46.3 139.5 59.2ZM135.7 59.2Q125 53.1 114.5 49.1Q128 48.9 139.9 59.2ZM151.4 59.5Q149.5 39.8 149.8 23.5Q153.9 39.5 154.8 59.5ZM149.5 59.5Q140.1 44 128.9 33.1Q144.3 41.6 153.4 59.5ZM150.5 59.5Q159.5 47 171.2 41.5Q162.5 49.3 153.6 59.5ZM169.7 60.6Q173.1 38.9 181.5 22.6Q177.7 39.8 173.5 60.6ZM170.3 60.6Q168 40.7 167.4 24.3Q172.2 40.4 173.6 60.6ZM191.1 59.9Q178.8 50.3 166 45.1Q181.7 47.1 194.5 59.9ZM191.4 59.9Q201.6 44.2 216.8 38.1Q205.6 47 195.4 59.9ZM192.3 59.9Q197 41.8 204.4 28.5Q200.6 42.8 195.3 59.9ZM192.5 59.9Q201.5 40.8 215.2 29.4Q204.6 42.3 195.3 59.9ZM210.3 60.5Q218.8 49.7 231.4 48.5Q222 52.6 213.8 60.5ZM209.2 60.5Q212.7 42.2 220.4 28.7Q216.6 43 212.4 60.5ZM223.7 60.7Q222.6 42.4 223.8 27.4Q226.7 42.3 227 60.7ZM227.9 60.7Q216.5 47 203.2 38.9Q219.1 44.9 230.6 60.7ZM246.1 59.8Q256.9 48 269.1 43.1Q259.4 50.5 248.9 59.8ZM247.2 59.8Q257.8 41.4 272.6 31.4Q260.5 43.1 249.8 59.8ZM247.1 59.8Q257.7 45 273.7 41.2Q261.6 48.1 251.1 59.8ZM246.4 59.8Q240.5 39.6 235.1 22.9Q244.3 38.5 249.5 59.8ZM267.6 60.8Q259 40.9 248.6 26Q262.8 39.4 270.9 60.8ZM268.6 60.8Q279.2 48.4 294.4 47.9Q282.7 51.8 272.5 60.8ZM281.1 60Q284.8 39.7 290.6 23.9Q288.1 40.3 283.8 60ZM292.6 59.8Q287.3 41.4 283.8 25.8Q292.3 40.1 296.8 59.8ZM332.8 59.7Q346.1 47 362 45.5Q349 50.5 336.4 59.7ZM353.3 59.7Q344.6 47.8 333.9 40.6Q347.1 46.1 355.8 59.7ZM353.4 59.7Q351 39.3 349.8 22.5Q354 39 355.8 59.7ZM389 59.3Q395.9 45.4 408.2 39Q398.7 46.9 391.5 59.3ZM387.8 59.3Q376.4 50.3 364.8 45.3Q379.1 47.4 391 59.3ZM391.1 59.3Q387.7 37.4 385.9 19.1Q392.7 36.7 395.2 59.3ZM389.9 59.3Q381.7 48.3 372.4 40.9Q385.1 46 393.3 59.3ZM391.1 59.3Q381.6 53.9 371.6 52.2Q384.1 50.3 394.5 59.3ZM432.7 60.7Q444.1 43.3 459.7 35Q446.9 45.3 435.5 60.7ZM433 60.7Q437.4 38.6 445 21.8Q441 39.4 435.9 60.7ZM430.2 60.7Q426 45.6 422.6 33Q429.7 44.7 433.3 60.7ZM431.5 60.7Q439.6 43.5 454.1 35Q443.4 45.4 434.9 60.7ZM443.7 59.5Q452.2 46.9 463.4 41.2Q455.8 49.7 447.3 59.5ZM446.8 59.5Q448.8 42.9 453.4 30Q452.3 43.4 449.6 59.5ZM477.9 60.7Q485.5 45.4 496.9 36.6Q488.3 46.9 480.5 60.7ZM479.1 60.7Q471.7 44.4 462.2 32.6Q476 42.6 482.9 60.7ZM478.1 60.7Q469.4 47.8 461.7 37.1Q472.1 46.1 480.6 60.7ZM477.3 60.7Q467.4 52.4 458.4 45.3Q470.7 49 481.1 60.7ZM493 60.7Q497.2 42.4 504.3 28.7Q500.3 43.2 495.6 60.7ZM529.7 59.5Q519 46.9 509.4 36.4Q522.5 44.2 533.2 59.5ZM547.8 59.6Q556 42.5 570.6 34.1Q559.2 44.1 550.7 59.6ZM568.4 59.3Q565.3 42.9 563.2 29.3Q569.5 42.3 571.7 59.3ZM569.6 59.3Q578.3 48 589.5 44Q582.1 51.3 573.6 59.3ZM587.7 60.6Q578.9 44.5 570.2 31.8Q582.3 42.8 590.8 60.6ZM585.3 60.6Q580.3 45.1 575.3 32.5Q584.8 43.8 589 60.6ZM588.5 60.6Q590.2 38.5 594.4 20.9Q593.4 38.8 591.1 60.6ZM598.4 60.7Q598.5 42.8 601.9 28.2Q603.5 42.9 602.4 60.7ZM599.4 60.7Q598.1 39.9 598.4 22.7Q601.4 39.7 602 60.7ZM600 60.7Q593.7 45.9 587.3 33.8Q598.1 44.2 603.8 60.7ZM600.3 60.7Q587.6 52.3 573.1 52.6Q589.6 49.6 603 60.7ZM610.6 60.1Q611.3 41.2 615 26Q616.1 41.5 614.5 60.1ZM613.3 60.1Q605.9 49 600.3 38.9Q609.6 46.8 616.7 60.1ZM662.9 60.7Q650.3 52 638.9 45.2Q652.5 49.2 665.8 60.7ZM-45.9 60.7Q-58.5 52 -69.9 45.2Q-56.3 49.2 -43 60.7ZM662.1 60.7Q669.4 43.7 680.6 33.3Q674.1 46 666.2 60.7ZM-46.6 60.7Q-39.2 43.7 -28.1 33.3Q-34.5 46 -42.4 60.7ZM681.9 60.4Q673.1 53.5 665.2 47.9Q675.3 51.2 684.4 60.4ZM-27.4 60.4Q-36.1 53.5 -44 47.9Q-33.9 51.2 -24.8 60.4ZM694.6 60Q707.8 47.6 725.1 50.3Q710.7 51.1 698.2 60ZM-14.1 60Q-0.9 47.6 16.4 50.3Q2 51.1 -10.5 60ZM697.1 60Q702.1 43.9 711.7 33.3Q705.4 45 699.9 60ZM-13.7 60Q-8.7 43.9 0.9 33.3Q-5.4 45 -10.9 60ZM697.7 60Q708.7 48.5 724.3 50.9Q711.9 52 701.5 60ZM-14.2 60Q-3.3 48.5 12.3 50.9Q-0 52 -10.4 60Z"/><path fill="#1f7a12" d="M6.8 60.7Q-1.1 51.3 -8.1 43.2Q2 49 9.9 60.7ZM718 60.7Q710.1 51.3 703.1 43.2Q713.2 49 721.1 60.7ZM9.4 60.7Q18.1 48.6 28.4 42.4Q21 51 12.4 60.7ZM718.1 60.7Q726.8 48.6 737.1 42.4Q729.7 51 721.1 60.7ZM7.9 60.7Q15.1 39.7 24.5 24.1Q18.1 40.7 10.5 60.7ZM718.3 60.7Q725.5 39.7 734.9 24.1Q728.5 40.7 720.9 60.7ZM23.3 61Q22.4 43 23.1 28.2Q25.7 42.9 26 61ZM732.4 61Q731.5 43 732.2 28.2Q734.8 42.9 735 61ZM37.8 60.6Q49.3 47.7 65.3 46.8Q52.4 50.8 41.3 60.6ZM747.6 60.6Q759.2 47.7 775.2 46.8Q762.3 50.8 751.2 60.6ZM36 60.6Q26.4 50.8 17.7 42.5Q29.7 48 39.5 60.6ZM747.7 60.6Q738 50.8 729.3 42.5Q741.3 48 751.2 60.6ZM82.1 59.5Q77.8 39.5 75.7 22.6Q81.4 38.8 85 59.5ZM82.7 59.5Q73.5 41.2 66 25.5Q77.7 39.2 86.5 59.5ZM85.1 59.5Q93.5 49 105.8 47.5Q96.1 51.4 87.9 59.5ZM96.4 60.8Q95.2 37.6 96.5 18.4Q99.6 37.4 100 60.8ZM97.7 60.8Q111.7 48 128.6 47.6Q114.6 51.5 101.4 60.8ZM97.4 60.8Q109.7 46.7 126.5 45Q113.3 50.3 101.5 60.8ZM99.6 60.8Q91.2 52.9 83 46.9Q94.6 49.8 103.2 60.8ZM137.1 59.2Q131.7 43 126.4 29.7Q136.3 41.6 140.9 59.2ZM151.9 59.5Q141.5 48.8 128.7 44.3Q145.1 45.6 155.8 59.5ZM189.4 59.9Q192 41.6 196.7 27.2Q195.1 42.1 191.9 59.9ZM210.3 60.5Q203.2 45.1 195 33.5Q206.8 43.6 213.4 60.5ZM226.9 60.7Q235 42.8 248.2 32.6Q238.9 44.8 230.4 60.7ZM267.4 60.8Q263.7 43.4 261.5 28.9Q267.9 42.6 270.8 60.8ZM266.4 60.8Q277.4 50.8 291.3 52.4Q279.3 53.2 268.8 60.8ZM293.2 59.8Q286.3 48.2 279.8 38.7Q290 46.2 296.6 59.8ZM293.9 59.8Q281.7 51.7 270.4 45.8Q283.5 49.2 296.4 59.8ZM311.3 60.7Q305.8 40.6 299.6 24.4Q310.3 39.5 315 60.7ZM314.6 60.7Q314.9 37.4 317.5 18.5Q318.5 37.5 317.5 60.7ZM313 60.7Q320.9 42.7 331.6 30.7Q324.5 44.4 316.2 60.7ZM332.7 59.7Q340.2 43.5 352.1 34.2Q344.4 45.6 336.4 59.7ZM332.3 59.7Q324.1 48.6 314.4 41.5Q326.7 46.9 334.8 59.7ZM353.3 59.7Q344.8 50.4 334 46.4Q348.1 47.7 356.7 59.7ZM352.5 59.7Q347.7 45.5 343.5 33.7Q351.9 44.2 356 59.7ZM373.5 59.1Q367.3 46.1 360.2 36.1Q372 44.1 377.6 59.1ZM373.1 59.1Q368.1 44 363.2 31.7Q373.1 42.5 377.2 59.1ZM374.9 59.1Q366.1 51.5 355.6 49.4Q368.3 49.2 377.5 59.1ZM411.5 59.8Q402 46.6 390.4 38.5Q405 44.6 414.4 59.8ZM410.9 59.8Q405.1 45.2 400 32.9Q409.6 43.6 414.7 59.8ZM431.5 60.7Q422.1 48.1 411.9 39.2Q426 45.5 435.3 60.7ZM444.7 59.5Q443.2 37.6 443.4 19.5Q446.7 37.4 447.6 59.5ZM458.3 60.4Q461.7 42.4 469.8 29.4Q466.6 43.5 462.3 60.4ZM461.8 60.4Q464 43 469.5 29.6Q467.8 43.6 464.9 60.4ZM477.6 60.7Q488.1 42 503.5 32.1Q490.8 43.6 480.1 60.7ZM477.8 60.7Q474.8 37.4 472.1 18.3Q477.9 37 480.4 60.7ZM491.8 60.7Q487.7 43.3 485.1 28.8Q491.2 42.6 494.7 60.7ZM513.2 60.1Q505.8 41.3 496.9 26.9Q510.5 39.6 517.3 60.1ZM512.1 60.1Q503.3 52.3 495.3 45.8Q505.5 50 514.7 60.1ZM510.7 60.1Q501.1 45.3 490.1 34.9Q505.2 42.9 514.5 60.1ZM532 59.5Q536.7 36.9 544.1 19.5Q539.7 37.6 534.5 59.5ZM548.4 59.6Q543.3 45.1 537.9 33.4Q546.9 44 551.4 59.6ZM549 59.6Q539.5 46.1 531.7 34.2Q543.6 43.5 552.8 59.6ZM569.3 59.3Q569.4 36.7 572.5 18.2Q574.1 36.8 573.1 59.3ZM600.2 60.7Q607.5 45.1 620.1 36.8Q610.9 46.8 603.3 60.7ZM598.3 60.7Q589.2 54.9 578.9 54.5Q591.3 52.1 601.2 60.7ZM600.3 60.7Q604 42.1 612 28.3Q607.1 42.8 602.9 60.7ZM600.4 60.7Q608.6 45.9 622 39.5Q612.8 48.5 604.4 60.7ZM599.3 60.7Q605.3 42.4 616.9 30.6Q608.8 43.6 602.2 60.7ZM632.6 60.5Q641.9 39.8 658.3 28.5Q645 41.2 635.3 60.5ZM683.5 60.4Q683.4 36.7 685.8 17.4Q687.1 36.8 686.4 60.4ZM-27.6 60.4Q-27.6 36.7 -25.2 17.4Q-23.9 36.8 -24.6 60.4ZM697.6 60Q703.4 46 711.8 36.7Q706.2 47.2 700.1 60ZM-13.5 60Q-7.8 46 0.6 36.7Q-4.9 47.2 -11 60Z"/><path fill="#41b01f" d="M6.4 60.7Q11.8 43.1 21.2 30.9Q16 44.5 9.9 60.7ZM717.8 60.7Q723.3 43.1 732.6 30.9Q727.5 44.5 721.4 60.7ZM8.7 60.7Q-2.5 49.3 -13.5 41.2Q-0.2 47.3 11.2 60.7ZM718.4 60.7Q707.2 49.3 696.1 41.2Q709.4 47.3 720.8 60.7ZM7.4 60.7Q2.8 45.7 -0.9 33Q7.8 44.4 11.5 60.7ZM717.5 60.7Q713 45.7 709.3 33Q717.9 44.4 721.6 60.7ZM21.3 61Q23.2 43.2 27.6 29.3Q26.9 43.7 24.3 61ZM732.2 61Q734.1 43.2 738.4 29.3Q737.8 43.7 735.2 61ZM21.9 61Q18.1 39.3 15.9 21.3Q22.7 38.6 25.6 61ZM731.9 61Q728.1 39.3 725.9 21.3Q732.6 38.6 735.6 61ZM39 60.6Q43.5 40.6 52.4 26Q48.1 41.8 42.8 60.6ZM747.5 60.6Q752 40.6 760.8 26Q756.6 41.8 751.3 60.6ZM54.5 60.8Q64.7 43.2 77.1 31.9Q67.5 44.8 57.1 60.8ZM763.1 60.8Q773.3 43.2 785.7 31.9Q776 44.8 765.6 60.8ZM83.3 59.5Q86.5 36.5 93.3 18.5Q89.7 37 85.8 59.5ZM85.1 59.5Q79.1 45.7 72.8 34.7Q81.9 44.5 87.5 59.5ZM96.5 60.8Q94.3 36 93.7 15.5Q98.6 35.7 100 60.8ZM100.5 60.8Q100.8 39.1 103.2 21.4Q104.1 39.2 103.2 60.8ZM98.9 60.8Q89.6 52.8 78.6 50Q92.9 49.6 102.6 60.8ZM134 59.2Q130.9 35.9 130.5 16.5Q135.5 35.4 137.7 59.2ZM136 59.2Q148.7 44.2 167 42.5Q151.3 46.6 138.8 59.2ZM136.4 59.2Q135.9 38.1 137.2 20.7Q139 38 138.8 59.2ZM149.2 59.5Q142.7 39.2 137.7 22.2Q146.4 38.1 152.2 59.5ZM149 59.5Q143 37.4 137.7 19.2Q146.1 36.6 151.6 59.5ZM171.7 60.6Q184.3 45.3 201.6 41.5Q187 47.7 174.6 60.6ZM191.9 59.9Q181.4 47.7 169.9 40Q183.9 45.7 194.4 59.9ZM189 59.9Q195.1 44.9 205.9 36.1Q198.9 46.5 192.3 59.9ZM191.4 59.9Q193.9 41.4 199.5 27.1Q198.2 42.1 195 59.9ZM209 60.5Q201 47.5 193.8 36.7Q204 45.8 211.8 60.5ZM224 60.7Q223.3 34.5 225.2 12.9Q227.7 34.4 227.4 60.7ZM248.2 59.8Q247.4 35.4 248.7 15.4Q251 35.3 251 59.8ZM248.4 59.8Q238.2 52 229.2 45.4Q240.8 49.1 251.5 59.8ZM249.3 59.8Q249.3 41.2 251.4 26Q252.5 41.2 251.9 59.8ZM269 60.8Q259.5 52.9 250.7 46.5Q262.6 49.7 272.5 60.8ZM282.9 60Q278.6 37.3 274.3 18.8Q282.7 36.6 286.3 60ZM279.9 60Q289.1 42.4 301.7 31.8Q292.8 44.5 283.3 60ZM282.7 60Q282.4 42.4 284.9 28Q286.7 42.4 286.1 60ZM282 60Q295.2 44.8 311.2 39.5Q298.6 48.1 285.8 60ZM294.5 59.8Q300.1 40.1 309.5 25.9Q304 41.3 297.8 59.8ZM295.2 59.8Q301.2 44.2 310.9 34.1Q304.9 45.7 298.4 59.8ZM294 59.8Q289.4 41.1 285.4 25.7Q292.7 40.4 296.7 59.8ZM295.9 59.8Q289.2 41.3 280.9 27Q292 40.3 298.3 59.8ZM314.3 60.7Q305.6 45.8 294.3 36Q309.5 43.7 317.8 60.7ZM313.4 60.7Q315.1 35.6 320.3 15.5Q319.3 35.9 316.7 60.7ZM351.7 59.7Q341.6 51.4 332.7 43.9Q344.7 48.1 355.4 59.7ZM354 59.7Q364.8 44.3 381.1 39.7Q367.6 46.4 356.7 59.7ZM372.8 59.1Q361.3 51.2 348.9 48.5Q364 47.9 376.2 59.1ZM371.8 59.1Q383.1 48.8 396.6 49.3Q386 52.5 375.6 59.1ZM373.2 59.1Q363.4 51.9 351.7 51.5Q366.8 48.1 377.3 59.1ZM390.4 59.3Q388.3 41.5 387.6 26.8Q391.9 41.2 393.3 59.3ZM430.2 60.7Q428.3 35.4 428.6 14.6Q433.4 35.2 434.2 60.7ZM430.4 60.7Q433.9 36.7 440.5 18.1Q438.8 37.6 434.4 60.7ZM430 60.7Q432.8 44.1 439.2 31.6Q436.4 44.7 433 60.7ZM432.1 60.7Q420.7 45.4 407.6 35.5Q424.2 43 435.5 60.7ZM445 59.5Q446.7 41 451.5 26.5Q451.2 41.5 448.6 59.5ZM446.8 59.5Q448.9 42.3 454 28.8Q452.4 42.8 449.6 59.5ZM444.6 59.5Q451 44.2 459.1 33.4Q454 45.5 447.2 59.5ZM445.2 59.5Q433.3 45 422.8 33.2Q435.7 43.2 447.6 59.5ZM443.4 59.5Q443.3 34.8 446.4 14.6Q448.2 34.8 447.3 59.5ZM462.6 60.4Q453.6 52.3 443.1 49.2Q456.3 49.7 465.5 60.4ZM462.3 60.4Q455.6 46.8 449 35.9Q459.6 45 465.8 60.4ZM476.4 60.7Q486 41.2 497.7 27.9Q489 42.7 479.1 60.7ZM490.1 60.7Q500.1 45.3 517.2 42.2Q504.3 48.3 494.3 60.7ZM491.3 60.7Q502 49.9 516 49.9Q504.4 52.5 494.1 60.7ZM510.8 60.1Q505 42.2 500.9 27.1Q508.3 41.2 513.6 60.1ZM513.8 60.1Q504.4 45.1 494.2 33.9Q508.5 42.8 517.6 60.1ZM512.1 60.1Q508 36.8 504.2 17.7Q512.6 36.1 515.8 60.1ZM513.8 60.1Q506.5 44.8 498.4 32.9Q510.9 42.9 517.6 60.1ZM531.2 59.5Q536.6 44.5 545.9 35Q541.3 46.4 535.3 59.5ZM531.2 59.5Q539.9 45.2 550.5 36.9Q543.2 47.5 534.4 59.5ZM548.5 59.6Q561.3 47.7 577.1 47.6Q564.1 51 552 59.6ZM549.7 59.6Q547.5 36.9 547.6 18.1Q551.4 36.6 552.9 59.6ZM547.7 59.6Q535.5 46.4 520.5 40.5Q538.6 43.8 550.9 59.6ZM569.3 59.3Q569.1 39.5 571 23.3Q572.7 39.5 572.2 59.3ZM586.2 60.6Q577.7 50.9 567.7 45.5Q580.2 48.9 588.8 60.6ZM611 60.1Q609 41.4 609.2 25.8Q613 41 614.1 60.1ZM630.2 60.5Q637 46.5 649.3 40.1Q640.3 48.2 633.2 60.5ZM631.1 60.5Q645.1 47 662.6 47Q648.1 50.5 634.8 60.5ZM648 60.1Q654.9 38.6 667.4 24.1Q658.8 40 651.3 60.1ZM-61 60.1Q-54.1 38.6 -41.6 24.1Q-50.2 40 -57.7 60.1ZM665 60.7Q675.5 41.6 692.9 33.1Q678.1 43.2 667.5 60.7ZM-45.7 60.7Q-35.3 41.6 -17.9 33.1Q-32.6 43.2 -43.3 60.7ZM665.4 60.7Q674.9 50.2 688.4 50.5Q677.3 52.6 668.1 60.7ZM-45.8 60.7Q-36.3 50.2 -22.8 50.5Q-34 52.6 -43.2 60.7ZM662 60.7Q660.5 39 660.8 21.2Q664.5 38.8 665.2 60.7ZM-46.1 60.7Q-47.6 39 -47.2 21.2Q-43.6 38.8 -42.9 60.7ZM663 60.7Q658.3 43.4 653.4 29.3Q661.7 42.5 665.7 60.7ZM-45.9 60.7Q-50.5 43.4 -55.5 29.3Q-47.2 42.5 -43.1 60.7ZM665.5 60.7Q668.7 37 676.7 18.7Q673.2 37.7 669.1 60.7ZM-46.3 60.7Q-43 37 -35 18.7Q-38.6 37.7 -42.7 60.7ZM683.5 60.4Q689.5 44.9 698.5 34.6Q693.2 46.4 686.7 60.4ZM-27.7 60.4Q-21.7 44.9 -12.6 34.6Q-18 46.4 -24.5 60.4ZM696.4 60Q693.9 39.4 692.9 22.3Q697 39 698.8 60ZM-13.5 60Q-16 39.4 -17 22.3Q-12.9 39 -11 60Z"/><path fill="#58c326" d="M7.6 60.7Q10.8 37 19.3 18.9Q15.3 37.7 11.2 60.7ZM717.8 60.7Q721 37 729.5 18.9Q725.5 37.7 721.4 60.7ZM37.7 60.6Q32.9 42.6 28.2 27.8Q36.6 41.7 40.8 60.6ZM747.9 60.6Q743.1 42.6 738.4 27.8Q746.8 41.7 750.9 60.6ZM37.1 60.6Q38.9 41.8 43.5 26.9Q43.4 42.3 40.8 60.6ZM747.6 60.6Q749.3 41.8 754 26.9Q753.8 42.3 751.2 60.6ZM51.4 60.8Q50.6 40.4 52.8 23.6Q55.6 40.3 55.4 60.8ZM762.4 60.8Q761.6 40.4 763.7 23.6Q766.6 40.3 766.3 60.8ZM51.3 60.8Q61.8 47.3 76.9 44.2Q65.1 50.1 54.7 60.8ZM762.6 60.8Q773.1 47.3 788.2 44.2Q776.4 50.1 766.1 60.8ZM52.2 60.8Q42.5 52.5 32.3 47.5Q46 49.1 56 60.8ZM762.4 60.8Q752.8 52.5 742.5 47.5Q756.2 49.1 766.3 60.8ZM67.9 60.1Q64 36.1 62.9 16Q68.8 35.5 71.8 60.1ZM71.5 60.1Q85.2 47.9 100.6 45.4Q87.2 50.4 74 60.1ZM68.5 60.1Q66.2 35.5 65.1 15.3Q69.4 35.2 71 60.1ZM70.9 60.1Q83.5 45.5 97.3 38.2Q86.5 48.3 74.2 60.1ZM83.7 59.5Q80.8 39.2 80.1 22.2Q85.4 38.6 87.4 59.5ZM97.9 60.8Q95.5 42.3 95.6 26.8Q99.9 41.8 101.5 60.8ZM96.6 60.8Q93.9 38.7 92.7 20.3Q98.3 38.2 100.1 60.8ZM119 59.5Q129.4 47.5 142 43.2Q131.6 49.6 121.4 59.5ZM118.3 59.5Q122.9 38.1 130.9 22Q127 39.1 121.7 59.5ZM133.5 59.2Q126.5 38.7 118.7 22.4Q130.6 37.4 137 59.2ZM133.7 59.2Q130.9 39.1 129.9 22.4Q134.7 38.7 136.8 59.2ZM149.6 59.5Q138.2 50.9 124.3 51Q141 47.6 153.1 59.5ZM167.7 60.6Q177.2 46.1 188.5 38.1Q181.3 49.1 171.8 60.6ZM170.7 60.6Q181.5 51.1 195.3 55.1Q183.8 54.3 173.8 60.6ZM208.2 60.5Q200.9 48.4 191.8 40.3Q204.4 46.5 211.3 60.5ZM226.8 60.7Q237.4 41.5 252.5 31Q241.6 44 230.7 60.7ZM225.3 60.7Q222.3 43.4 221.1 28.9Q227.4 42.7 229.5 60.7ZM225.4 60.7Q233.9 49.3 245.8 46.1Q237.2 52.2 229 60.7ZM225.7 60.7Q223.4 42.8 222.7 27.8Q226.9 42.4 228.5 60.7ZM249.8 59.8Q259.2 51.7 271 54.7Q261 54.2 252.3 59.8ZM268.1 60.8Q278.8 51.4 292.3 54.3Q281.1 54.5 271.3 60.8ZM281.7 60Q273.8 42.6 265.5 29Q276.9 41.3 284.3 60ZM281.4 60Q273.4 46.8 263.7 37.8Q277.4 44.6 285 60ZM294.3 59.8Q303 42.2 317 32.9Q307.3 44.6 298.2 59.8ZM295.4 59.8Q285.7 49.1 274.3 43.3Q288.6 46.7 298.3 59.8ZM293.3 59.8Q283.8 48.6 274.3 40.1Q286.8 46.2 296.4 59.8ZM295.3 59.8Q284.6 46.9 271.2 40.4Q287.5 44.7 298.2 59.8ZM312.7 60.7Q324 49.9 337.1 47.8Q326.3 52.7 315.6 60.7ZM314.1 60.7Q304.7 53.7 295.9 48.1Q307.1 50.9 317 60.7ZM313.2 60.7Q319.3 46.4 329 37.7Q322.3 47.8 315.8 60.7ZM312.2 60.7Q311 41.4 312.3 25.4Q315.7 41.2 316 60.7ZM354.4 59.7Q361.9 44.9 374.8 37.8Q364.7 46.4 356.9 59.7ZM370.5 59.1Q371.4 33.9 376.3 13.7Q376.6 34.2 374.6 59.1ZM372.1 59.1Q366.7 36.5 362.1 17.8Q371.3 35.5 375.9 59.1ZM388.6 59.3Q377.3 50.1 363.4 49.6Q379.4 47.7 391.2 59.3ZM443.9 59.5Q438.1 42.9 431.5 29.9Q441.4 41.9 446.7 59.5ZM461.1 60.4Q453.4 42.8 445.1 28.9Q458.2 40.8 465.3 60.4ZM477.6 60.7Q486.6 49 501 49.2Q490.3 52.3 481.6 60.7ZM479.1 60.7Q476.2 36.2 474.4 16Q480.4 35.8 482.6 60.7ZM479.4 60.7Q488.3 50.4 501.1 50.2Q490.8 52.9 482.2 60.7ZM478.2 60.7Q466.4 50.3 452 48Q469.3 47.3 481.5 60.7ZM492.3 60.7Q501.9 49.8 513.6 47Q505.3 53.4 496.3 60.7ZM528.8 59.5Q535.9 44.5 548.2 36.7Q538.9 46 531.5 59.5ZM530.6 59.5Q528.1 39.7 526.4 23.4Q531.6 39.4 533.4 59.5ZM547 59.6Q538.5 40.2 531 24.2Q541.7 38.9 549.8 59.6ZM548.8 59.6Q550.8 34.3 555.2 13.9Q553.8 34.6 551.3 59.6ZM569 59.3Q578.9 40.7 594 30.7Q582.4 42.7 572.2 59.3ZM569.1 59.3Q575.6 41 588.5 30Q579.7 42.6 572.6 59.3ZM569.8 59.3Q567.3 40.7 565.4 25.4Q570.5 40.4 572.3 59.3ZM585.1 60.6Q590.5 43.8 599.9 32.4Q593.4 44.8 587.6 60.6ZM585.4 60.6Q593.4 49 606.5 46.9Q596.2 51.1 588.2 60.6ZM598.9 60.7Q587.1 49.3 572.8 45.2Q589.6 46.9 601.6 60.7ZM611.2 60.1Q618 39.2 629.6 24.9Q621.6 40.4 614.3 60.1ZM612 60.1Q603.9 44 594.2 32.2Q607.2 42.5 614.9 60.1ZM630.8 60.5Q641.6 49.3 655.9 48.9Q643.9 51.8 633.4 60.5ZM630.8 60.5Q623.8 48.1 615.8 38.8Q628 45.9 634.6 60.5ZM650.2 60.1Q659.4 46.4 672.9 41.2Q662.3 48.5 653 60.1ZM-60.8 60.1Q-51.6 46.4 -38.1 41.2Q-48.7 48.5 -57.9 60.1ZM650.5 60.1Q659.4 47.9 672.8 44.9Q662.2 50.2 653.3 60.1ZM-60.8 60.1Q-51.8 47.9 -38.5 44.9Q-49.1 50.2 -57.9 60.1ZM648.8 60.1Q648.1 34.2 649.8 13Q652.4 34.2 652.3 60.1ZM-61.1 60.1Q-61.8 34.2 -60.1 13Q-57.5 34.2 -57.6 60.1ZM647.9 60.1Q647.8 41.2 649.7 25.8Q650.9 41.2 650.3 60.1ZM-60.6 60.1Q-60.7 41.2 -58.8 25.8Q-57.6 41.2 -58.1 60.1ZM665.7 60.7Q663 36.9 662.5 17.2Q666.8 36.6 668.8 60.7ZM-46 60.7Q-48.7 36.9 -49.2 17.2Q-44.9 36.6 -43 60.7ZM662.8 60.7Q670.1 44.8 681.9 35.6Q672.8 46.1 665.2 60.7ZM-45.7 60.7Q-38.4 44.8 -26.6 35.6Q-35.7 46.1 -43.3 60.7ZM664.6 60.7Q656.4 45.5 650.4 32Q660.6 43.4 668.3 60.7ZM-46.3 60.7Q-54.5 45.5 -60.5 32Q-50.3 43.4 -42.6 60.7ZM681.8 60.4Q676.1 44.4 672.3 30.6Q679.8 43.2 684.9 60.4ZM-27.6 60.4Q-33.4 44.4 -37.1 30.6Q-29.7 43.2 -24.5 60.4ZM682.2 60.4Q675.8 45.9 668.9 34.4Q679.8 44.3 685.7 60.4ZM-27.8 60.4Q-34.2 45.9 -41.2 34.4Q-30.2 44.3 -24.3 60.4ZM694.6 60Q689.7 45.3 684.4 33.5Q693.7 44.1 697.9 60ZM-13.9 60Q-18.9 45.3 -24.2 33.5Q-14.8 44.1 -10.6 60ZM696.7 60Q687.4 41.1 675.3 28Q690.5 39.7 699.4 60ZM-13.6 60Q-22.9 41.1 -35 28Q-19.8 39.7 -10.9 60Z"/><path fill="#33a01b" d="M8 60.7Q2.9 45.9 -2 33.8Q7.2 44.6 11.6 60.7ZM717.8 60.7Q712.7 45.9 707.8 33.8Q717 44.6 721.4 60.7ZM9.8 60.7Q9.6 36.3 12 16.3Q13.5 36.3 12.8 60.7ZM718 60.7Q717.9 36.3 720.3 16.3Q721.8 36.3 721.1 60.7ZM6.6 60.7Q-5 50.4 -16 42.7Q-2.7 48 9.3 60.7ZM718.3 60.7Q706.6 50.4 695.6 42.7Q708.9 48 720.9 60.7ZM9.4 60.7Q1.9 48.8 -4.8 38.7Q5.7 46.6 12.9 60.7ZM717.8 60.7Q710.3 48.8 703.6 38.7Q714.2 46.6 721.4 60.7ZM20.9 61Q30.5 50.1 42.3 47Q33.4 53 24.2 61ZM732.1 61Q741.7 50.1 753.5 47Q744.6 53 735.4 61ZM21.6 61Q13.8 48.3 4 39.8Q17.2 46.3 24.7 61ZM732.1 61Q724.3 48.3 714.6 39.8Q727.8 46.3 735.3 61ZM39.3 60.6Q33.7 42.6 28.9 27.6Q37 41.7 42 60.6ZM748 60.6Q742.4 42.6 737.7 27.6Q745.7 41.7 750.8 60.6ZM70.6 60.1Q82 42.5 97.1 33.4Q84.8 44.5 73.4 60.1ZM67.7 60.1Q74.7 44.3 85.3 34.5Q78.3 46 70.9 60.1ZM67.9 60.1Q76.9 45.6 91.3 40.3Q79.5 47.3 70.5 60.1ZM82.1 59.5Q73.5 54 65.8 49Q76.1 50.7 85.5 59.5ZM97.3 60.8Q96.2 41 96.6 24.7Q99.5 40.9 99.9 60.8ZM100.4 60.8Q112.9 46.9 127.6 41.5Q115.4 49.4 103.2 60.8ZM120.1 59.5Q128.5 39.8 139.9 26.5Q132.1 41.4 123.4 59.5ZM149.1 59.5Q136.1 47.7 122.1 41.2Q139.4 44.4 152.8 59.5ZM149.2 59.5Q149 37.8 150.8 20.1Q152.2 37.8 151.8 59.5ZM149.3 59.5Q162.2 45.2 176.3 39Q165.7 48.7 153.2 59.5ZM151.7 59.5Q160 45.4 171.5 38.2Q164 48 155.5 59.5ZM152.5 59.5Q144.4 43.6 137 30.5Q147.8 41.9 155.6 59.5ZM171.6 60.6Q180.4 39.6 191.3 24.6Q183.6 41 174.4 60.6ZM169.7 60.6Q178.8 47.1 191.3 41.2Q181.6 49.1 172.5 60.6ZM210.4 60.5Q222.3 48.1 236.7 45.2Q225.2 51.3 213.8 60.5ZM227.4 60.7Q218.3 42.6 211 27Q222.1 40.8 230.8 60.7ZM224.3 60.7Q211.9 49.1 195.7 47.9Q214 47 226.7 60.7ZM225.8 60.7Q227.2 41.1 231.5 25.5Q230.7 41.4 228.6 60.7ZM246.9 59.8Q250.1 37 257.2 19.5Q255.2 37.9 251.1 59.8ZM281.3 60Q291.6 43 306.5 35.2Q295.8 45.9 285.4 60ZM280.6 60Q289 47.2 299.4 40.4Q292.3 49.6 283.8 60ZM280.5 60Q273.6 40.6 265 25.6Q277.8 39.2 284.1 60ZM295.5 59.8Q287.2 51.7 277.6 47.6Q290.3 49 298.8 59.8ZM313 60.7Q319.8 43 330.3 31.5Q324.3 44.9 316.9 60.7ZM332.9 59.7Q337.7 41.8 345.7 28.8Q342 43 336.4 59.7ZM332.4 59.7Q320.2 47.5 308.2 38.6Q322.7 45.2 335.1 59.7ZM353 59.7Q366.7 45.6 385.2 46.5Q370 49.2 356.9 59.7ZM353.5 59.7Q362.7 43 375.6 33.9Q367.1 45.6 357.6 59.7ZM354.5 59.7Q362.7 40.4 376.2 28.7Q365.8 41.8 357.2 59.7ZM371.4 59.1Q382.5 43.1 396.4 34.8Q385 45 373.9 59.1ZM371 59.1Q369.5 34.5 370.3 14.2Q373.9 34.3 374.5 59.1ZM373.7 59.1Q367.6 36.4 362.5 17.6Q372.6 35.2 377.8 59.1ZM389.9 59.3Q384.5 39.8 381.6 23.2Q389.2 38.7 393.7 59.3ZM391.1 59.3Q390.5 35.1 392 15.3Q394.3 35 394.2 59.3ZM387.6 59.3Q387.3 39.8 390.2 23.9Q392.4 39.8 391.7 59.3ZM412.9 59.8Q402.1 52.8 391.8 48Q404.6 49.6 416.1 59.8ZM409.5 59.8Q401 50.6 390.9 45.7Q404.7 47.6 413.3 59.8ZM413 59.8Q403.2 49.8 395 40.6Q406.2 47.1 416.3 59.8ZM458.6 60.4Q455.2 45.2 453 32.5Q460.2 44.3 462.7 60.4ZM459.9 60.4Q473 48.4 490.3 52.8Q476 52.2 463.8 60.4ZM476 60.7Q488.9 49 502.6 45.6Q491.8 52.6 479.7 60.7ZM494.2 60.7Q498.4 45.4 507.7 35.3Q502 46.5 497.2 60.7ZM512.9 60.1Q522.6 42.9 537.2 34.4Q525.9 45 516 60.1ZM512.1 60.1Q501.4 53.2 489.6 51.9Q504.5 49.4 516.1 60.1ZM531.6 59.5Q535.5 44.1 543.1 33.2Q539.3 45.2 534.7 59.5ZM530.4 59.5Q520.7 44.2 510.7 32.4Q524.4 42 533.8 59.5ZM528.6 59.5Q520.6 38.8 514.4 21.2Q524.4 37.4 531.9 59.5ZM531.3 59.5Q522.1 49.8 513.1 42.2Q526 46.6 535.4 59.5ZM547.5 59.6Q538.8 46.8 527.1 39.6Q541.8 44.9 550.3 59.6ZM547.9 59.6Q543.7 44.3 540.4 31.5Q547.4 43.4 551 59.6ZM549.1 59.6Q545.5 37.7 542.2 19.7Q548.5 37.3 551.5 59.6ZM570.8 59.3Q576.1 42.6 585.3 31.4Q580.9 44.4 574.9 59.3ZM584.1 60.6Q587.1 40.3 595.1 25Q592 41.1 588.1 60.6ZM584.6 60.6Q576.4 44.3 568.7 31Q580 42.6 587.8 60.6ZM599.1 60.7Q600.2 41.6 605.3 26.5Q605.2 42 603.2 60.7ZM612.1 60.1Q610.7 35.5 612 15.1Q615.7 35.3 616.1 60.1ZM611.8 60.1Q613.1 36.1 617.8 16.8Q617.4 36.4 615.3 60.1ZM630.2 60.5Q621.5 48.7 612.9 39.4Q625.8 45.9 634.3 60.5ZM646.7 60.1Q643.6 42.2 642.2 27.1Q648.5 41.5 650.7 60.1ZM-61.3 60.1Q-64.5 42.2 -65.9 27.1Q-59.6 41.5 -57.4 60.1ZM647 60.1Q643.8 41.2 643.3 25.1Q648.7 40.5 651 60.1ZM-61.3 60.1Q-64.6 41.2 -65 25.1Q-59.7 40.5 -57.4 60.1ZM649.9 60.1Q657.8 44.8 668.9 35.8Q661.4 46.8 653.2 60.1ZM-61 60.1Q-53.1 44.8 -42 35.8Q-49.5 46.8 -57.7 60.1ZM647.5 60.1Q648.3 40.2 652.5 24.2Q652.9 40.5 651.1 60.1ZM-61.2 60.1Q-60.4 40.2 -56.2 24.2Q-55.8 40.5 -57.5 60.1ZM649.6 60.1Q656 46.3 668 39.8Q660 48.3 653.2 60.1ZM-61.2 60.1Q-54.8 46.3 -42.8 39.8Q-50.8 48.3 -57.6 60.1ZM662.4 60.7Q675.7 47.8 690.1 43.5Q678.6 51.2 666 60.7ZM-46.3 60.7Q-33 47.8 -18.5 43.5Q-30 51.2 -42.7 60.7ZM682.4 60.4Q692.5 44.1 707.1 36.4Q695.2 45.9 685 60.4ZM-27.4 60.4Q-17.3 44.1 -2.6 36.4Q-14.6 45.9 -24.8 60.4ZM680.8 60.4Q672.4 50.5 664.1 42.8Q676 47.8 684.4 60.4ZM-27.9 60.4Q-36.3 50.5 -44.7 42.8Q-32.7 47.8 -24.3 60.4ZM697.9 60Q697.5 38.3 699.8 20.6Q701.9 38.3 701.4 60ZM-14 60Q-14.4 38.3 -12.1 20.6Q-10 38.3 -10.5 60Z"/><path fill="#7bd32e" d="M7.6 60.7Q13 44.1 22 32.6Q16.4 45.2 10.5 60.7ZM718.2 60.7Q723.5 44.1 732.5 32.6Q726.9 45.2 721 60.7ZM7.3 60.7Q-0 45 -7.5 32.5Q3.2 43.7 10 60.7ZM718.2 60.7Q710.9 45 703.5 32.5Q714.1 43.7 721 60.7ZM21.7 61Q11.3 53.1 -1.2 52.5Q14.7 49.4 25.8 61ZM731.7 61Q721.3 53.1 708.7 52.5Q724.7 49.4 735.7 61ZM36.6 60.6Q41 43.3 47.8 30.4Q44.6 44.3 39.6 60.6ZM747.9 60.6Q752.3 43.3 759.1 30.4Q755.9 44.3 750.9 60.6ZM37.3 60.6Q30.4 43.9 22.8 30.8Q33.6 42.7 40.1 60.6ZM748 60.6Q741.1 43.9 733.5 30.8Q744.3 42.7 750.8 60.6ZM38.6 60.6Q31.9 38.6 23.2 21.5Q35.5 37.6 41.7 60.6ZM747.9 60.6Q741.1 38.6 732.5 21.5Q744.8 37.6 750.9 60.6ZM52.5 60.8Q44 42.8 32.8 30Q47.4 41.3 55.5 60.8ZM762.9 60.8Q754.3 42.8 743.1 30Q757.7 41.3 765.8 60.8ZM67.7 60.1Q77.6 49.4 89.4 47Q81.1 53.3 71.9 60.1ZM82.8 59.5Q91.9 43.2 104.6 34.2Q95.4 45.3 86.1 59.5ZM85.6 59.5Q83.6 38.3 83.6 20.7Q87.9 38 89 59.5ZM96.5 60.8Q98.2 43.8 103.9 30.6Q102.8 44.3 100.2 60.8ZM121.2 59.5Q109.8 49.4 95.2 48.3Q112.4 46.7 124.2 59.5ZM121.5 59.5Q133.4 46.2 150.3 46.1Q136.5 49.2 125 59.5ZM118.4 59.5Q114.7 43.4 112.5 29.8Q118.9 42.5 121.9 59.5ZM136.4 59.2Q136.8 42.4 140 28.8Q141.5 42.6 140.2 59.2ZM169.8 60.6Q166.9 44.5 164.1 31.4Q170.1 44 172.4 60.6ZM171.3 60.6Q164.1 49.8 158.1 40.5Q166.9 48.1 173.9 60.6ZM170.1 60.6Q179.4 45 195.1 40Q183.6 47.8 174.2 60.6ZM190.5 59.9Q183.2 49.1 174 42.5Q185.8 47.5 192.9 59.9ZM189.2 59.9Q196.3 44.4 206.9 35Q200.2 46.3 192.6 59.9ZM209 60.5Q199.9 40.8 191.9 24.4Q203.4 39.2 212.1 60.5ZM210.6 60.5Q222.9 46.2 236.8 39.3Q225.1 48.3 213.1 60.5ZM209.8 60.5Q217.2 42 230.7 31.5Q221.3 43.8 213.4 60.5ZM211.3 60.5Q198.6 48.3 186 39.9Q201.3 45.7 214.2 60.5ZM225 60.7Q217.5 41.8 211.6 25.8Q222.1 40.1 228.9 60.7ZM225.9 60.7Q215.2 50.1 203.3 44.1Q218.2 47.4 229.1 60.7ZM249 59.8Q240.5 51.5 229.9 48.9Q242.8 49.4 251.4 59.8ZM265 60.8Q261.5 37.8 260.1 18.6Q266.5 37.1 269 60.8ZM266.9 60.8Q260.1 43.4 253.6 29.3Q263.6 42.1 269.9 60.8ZM281.9 60Q275.3 45.9 269.6 34.1Q278.6 44.5 284.8 60ZM280.4 60Q276.1 45.4 272.6 33.3Q279.6 44.5 283.3 60ZM293 59.8Q289.1 35.6 286.5 15.5Q294 34.9 296.9 59.8ZM311.2 60.7Q316.3 38.7 326.9 23Q321 39.9 315 60.7ZM314.6 60.7Q326.6 51.1 340.6 52.7Q328.3 53.5 317 60.7ZM314.5 60.7Q312.8 40.9 313.4 24.4Q317.3 40.6 318.1 60.7ZM333 59.7Q331.4 34 331.8 12.7Q335.8 33.8 336.5 59.7ZM333.4 59.7Q331.1 35.5 329.4 15.5Q334.2 35.2 335.9 59.7ZM333.3 59.7Q333.4 39 335.6 22Q336.8 39 336.1 59.7ZM353.5 59.7Q342.3 48.1 331.5 39.2Q345.7 45.1 357.2 59.7ZM353.6 59.7Q355.2 42.5 360.7 29.2Q359.8 43.1 357.3 59.7ZM371.5 59.1Q372.1 41.4 375.8 27.3Q376.8 41.7 375.3 59.1ZM410.6 59.8Q407.4 40.3 404.6 24.3Q410.7 39.8 413.3 59.8ZM409.9 59.8Q409.5 35.2 411.4 15.1Q413.3 35.2 412.9 59.8ZM432.7 60.7Q432.5 34.5 435.4 13.1Q437.4 34.5 436.6 60.7ZM430.1 60.7Q430.4 34.7 433.2 13.5Q434.2 34.8 433.1 60.7ZM430.6 60.7Q439.8 51.3 451.9 51.3Q442 53.7 433.1 60.7ZM447.2 59.5Q434.3 49.4 420.7 44.5Q437.1 46.3 450.5 59.5ZM445 59.5Q454.2 47.6 465.3 42.3Q457 50.1 448 59.5ZM461.5 60.4Q464.6 44.3 472 32.7Q468 45.1 464.3 60.4ZM458.5 60.4Q459.6 39.3 464.3 22.4Q463.8 39.6 461.8 60.4ZM462 60.4Q458.8 36.7 457.3 17Q463.3 36.1 465.6 60.4ZM477.5 60.7Q469.2 51 461.4 43.4Q472.1 48.8 480.4 60.7ZM494.3 60.7Q498.2 41.1 505.4 26.2Q501.2 41.7 496.8 60.7ZM492.9 60.7Q498 37.7 507.9 20.8Q502.5 38.8 496.7 60.7ZM492.6 60.7Q482.6 51.7 472.4 45.7Q486.3 48.2 496.6 60.7ZM529.8 59.5Q523 41.5 518 26.2Q526.7 40.2 533 59.5ZM528.4 59.5Q519.7 53.9 511 50.7Q522.1 50.9 531.5 59.5ZM547.8 59.6Q547.8 40 550.1 24Q551.2 40.1 550.5 59.6ZM567.9 59.3Q570.4 35.3 577 16.4Q574.8 35.8 571.4 59.3ZM586 60.6Q591.3 45.7 600 35.8Q595.2 47.2 589.4 60.6ZM585.1 60.6Q580.1 39.9 576.3 22.6Q584.9 38.8 589 60.6ZM600 60.7Q592 47.3 583.6 37Q595.5 45.4 603.2 60.7ZM611.7 60.1Q605.4 41.9 598.1 27.5Q608.4 40.9 614.2 60.1ZM631 60.5Q644.6 46.8 662.7 47.3Q647.5 49.9 634.4 60.5ZM629.2 60.5Q615.9 52.1 601.2 51.9Q618 49.2 632 60.5ZM629.8 60.5Q642.4 48 659.4 50.1Q645.3 51.4 633.4 60.5ZM632.2 60.5Q630.6 39.6 631 22.4Q634.1 39.4 635 60.5ZM629.4 60.5Q624.5 40.9 620.4 24.6Q629 39.9 633.2 60.5ZM650.2 60.1Q650.9 36.4 654 17.1Q654.3 36.5 652.9 60.1ZM-60.7 60.1Q-60 36.4 -57 17.1Q-56.7 36.5 -58 60.1ZM665.7 60.7Q675.7 47.7 688.7 42.7Q678.5 50.1 668.6 60.7ZM-46 60.7Q-35.9 47.7 -22.9 42.7Q-33.1 50.1 -43 60.7ZM683.4 60.4Q680.3 38.9 679.4 21Q684.1 38.5 686.4 60.4ZM-27.6 60.4Q-30.6 38.9 -31.6 21Q-26.9 38.5 -24.6 60.4ZM680.3 60.4Q688.3 48.9 700.9 46.4Q691.6 51.5 683.7 60.4ZM-27.8 60.4Q-19.8 48.9 -7.2 46.4Q-16.5 51.5 -24.4 60.4Z"/><g fill="#0e4a12" opacity=".55"><ellipse cx="198.7" cy="51" rx="5.2" ry="2.8"/><ellipse cx="49.6" cy="49.9" rx="7.8" ry="2.6"/><ellipse cx="252.8" cy="51.2" rx="5.5" ry="5"/><ellipse cx="3.5" cy="51.8" rx="8" ry="3.1"/><ellipse cx="700.8" cy="51.7" rx="4.9" ry="4.8"/><ellipse cx="20" cy="50.9" rx="9.8" ry="4.4"/><ellipse cx="16.4" cy="54.6" rx="9.8" ry="5"/><ellipse cx="191.4" cy="49.4" rx="9.7" ry="2.8"/><ellipse cx="628.5" cy="54.9" rx="6.3" ry="3.1"/><ellipse cx="149.2" cy="52" rx="4.3" ry="5.4"/><ellipse cx="149.3" cy="50.9" rx="6.5" ry="5.3"/><ellipse cx="398" cy="52" rx="9.3" ry="4.2"/><ellipse cx="320" cy="54" rx="9.6" ry="4.4"/><ellipse cx="329.2" cy="49.1" rx="7.3" ry="4.7"/><ellipse cx="116.2" cy="52.8" rx="8.4" ry="3.3"/><ellipse cx="707.3" cy="49.1" rx="8.5" ry="4.7"/><ellipse cx="192.5" cy="50.4" rx="10" ry="3.9"/><ellipse cx="401.5" cy="51.1" rx="5.7" ry="2.6"/><ellipse cx="129.4" cy="51.8" rx="8.5" ry="5.1"/><ellipse cx="190.1" cy="54" rx="6.9" ry="3"/><ellipse cx="183.8" cy="52.1" rx="8.8" ry="2.8"/><ellipse cx="123.4" cy="52.2" rx="7.6" ry="3"/><ellipse cx="468.7" cy="51.6" rx="10.7" ry="5.4"/><ellipse cx="445.6" cy="54.5" rx="7.7" ry="3.3"/><ellipse cx="197.9" cy="54.5" rx="8.8" ry="4.5"/><ellipse cx="195.1" cy="53.6" rx="10.9" ry="4.2"/><ellipse cx="495.1" cy="53.5" rx="10.6" ry="4.7"/><ellipse cx="361.3" cy="54.3" rx="7.1" ry="2.6"/><ellipse cx="149.2" cy="50.3" rx="4.8" ry="3.1"/><ellipse cx="242.5" cy="49.2" rx="5.2" ry="3.7"/><ellipse cx="378.1" cy="54.7" rx="7.9" ry="2.7"/><ellipse cx="227" cy="53.1" rx="11" ry="3.8"/><ellipse cx="212.4" cy="53" rx="6.1" ry="3"/><ellipse cx="224.4" cy="50.9" rx="6.5" ry="3.2"/><ellipse cx="27.2" cy="50.3" rx="6.1" ry="3.3"/><ellipse cx="602.1" cy="49.2" rx="7.9" ry="2.7"/><ellipse cx="593.6" cy="50.4" rx="4.1" ry="3.4"/><ellipse cx="592.9" cy="52.1" rx="5.2" ry="5.5"/></g><path fill="#2c9418" d="M0.4 60.7Q7.3 39.8 17.9 25Q11 41.1 3.5 60.7ZM710.5 60.7Q717.5 39.8 728.1 25Q721.2 41.1 713.7 60.7ZM0.6 60.7Q-10.8 51.5 -22 45.5Q-9.2 49.7 2.5 60.7ZM711.2 60.7Q699.7 51.5 688.6 45.5Q701.3 49.7 713.1 60.7ZM13.7 60.2Q5.2 57.4 -3.1 58.1Q6.5 54.6 16.1 60.2ZM724.1 60.2Q715.7 57.4 707.4 58.1Q717 54.6 726.5 60.2ZM12.7 60.2Q8.9 48.2 6.4 37.8Q12.5 47.2 15.8 60.2ZM723.8 60.2Q720 48.2 717.4 37.8Q723.6 47.2 726.8 60.2ZM47.2 60.6Q56.6 49 67.6 43.3Q58.7 50.7 49.3 60.6ZM755.9 60.6Q765.4 49 776.4 43.3Q767.4 50.7 758.1 60.6ZM46.9 60.6Q39.7 56.9 33.3 52.8Q42.2 53.3 50.5 60.6ZM755.2 60.6Q748 56.9 741.6 52.8Q750.5 53.3 758.8 60.6ZM46.4 60.6Q41 45 34.5 32.9Q44.2 44 49.1 60.6ZM755.7 60.6Q750.3 45 743.8 32.9Q753.5 44 758.3 60.6ZM46.3 60.6Q36.3 54.6 27 50.3Q38 52.2 48.6 60.6ZM755.8 60.6Q745.8 54.6 736.5 50.3Q747.5 52.2 758.2 60.6ZM104 60.4Q96.3 47.2 88.7 36.7Q99.6 45.4 106.9 60.4ZM102.7 60.4Q99.3 45.9 97.6 33.6Q103.5 45 106.1 60.4ZM102.7 60.4Q100.2 42.7 98.8 28.1Q104.2 42.3 105.9 60.4ZM118.3 59.9Q112.4 49 105.2 41.2Q115.5 47.4 121.1 59.9ZM118.7 59.9Q123.3 49 131.9 43.3Q127.2 50.8 122.2 59.9ZM122.4 59.9Q130.1 48.6 140.9 43.9Q132.2 50.1 124.5 59.9ZM140.4 60.1Q136.5 42.4 133 28Q140.2 41.7 143.4 60.1ZM140.7 60.1Q154.4 47.3 168.3 41.4Q156.3 49.5 143 60.1ZM160.3 60.6Q154.1 40 147.1 23.4Q158.4 38.7 163.9 60.6ZM164.1 60.6Q177.7 50.1 191.7 47.6Q179.2 52.3 166.1 60.6ZM184.2 59.6Q189.8 38.7 200.5 24Q193.8 39.9 187.5 59.6ZM209 59.9Q203 50.4 197.8 42.3Q206.5 48.4 212.2 59.9ZM227.1 60.3Q225.1 45.7 225.5 33.5Q229.5 45.3 230.6 60.3ZM226.2 60.3Q238.9 46.1 252.9 39.1Q241.2 48.2 228.7 60.3ZM223.8 60.3Q210.8 53 198.3 49Q213.1 49.6 227 60.3ZM246.6 60.4Q249.9 45.8 255.5 34.8Q253.5 46.7 249.6 60.4ZM247.8 60.4Q247.1 39.2 248.7 21.8Q251.1 39.1 251 60.4ZM270.7 60.7Q257.8 56.1 244.9 61.2Q259.1 53 273.3 60.7ZM272.4 60.7Q278.8 49.5 288.3 44Q281.2 51 274.7 60.7ZM272 60.7Q285.7 52.4 300.5 59.2Q286.9 54.6 274 60.7ZM343.5 60Q347.3 41 354.5 26.6Q350 41.6 345.7 60ZM343 60Q337.6 47.7 331.4 38.2Q340.6 46.5 345.5 60ZM366.8 60.2Q363.6 42.8 362.2 28.3Q367.8 42.2 370.2 60.2ZM389.5 60.8Q391.5 44.9 396.6 32.7Q395.7 45.6 392.9 60.8ZM388.1 60.8Q397 42.3 411.5 32Q399.5 43.6 390.3 60.8ZM412.4 60.3Q411.4 39.9 412.3 23.1Q415.4 39.8 415.7 60.3ZM410.5 60.3Q421.5 49.4 433.7 45.6Q423.3 51.5 412.7 60.3ZM426.9 60Q438.4 44.1 456.2 40.5Q441.6 46.6 430.1 60ZM425.9 60Q414.5 53.3 404 48.6Q416.4 50.6 428.6 60ZM446 60.9Q459.8 50.8 476.1 55.7Q461.2 52.9 447.9 60.9ZM459.6 60.1Q467.5 52.6 476.1 50Q469.1 54.4 461.5 60.1ZM477.4 60.1Q469.3 46.5 460 36.6Q473.2 44.4 481 60.1ZM480.2 60.1Q487.6 50.4 496.5 46Q490.1 52.5 482.8 60.1ZM481.3 60.1Q487.8 43.2 497 31.5Q490.4 44.3 483.5 60.1ZM501.5 59.5Q500.5 44.9 502.1 32.9Q504.9 44.8 505 59.5ZM503.8 59.5Q503.8 46.3 506.4 35.7Q508.1 46.5 507.3 59.5ZM503.8 59.5Q500 38 498.1 20Q503.8 37.4 506.9 59.5ZM521.1 60.4Q511.4 50.1 499.2 46.1Q513.5 48.2 523.3 60.4ZM521.6 60.4Q533.7 45.2 549.3 39.4Q536.1 47.3 524.2 60.4ZM536.5 60.4Q529.7 43.4 523 29.7Q533.1 42.2 539.4 60.4ZM533.7 60.4Q540.5 51 550.7 49.1Q543.4 53.5 536.8 60.4ZM573.1 59.8Q564 47.1 552.2 39.8Q567.4 44.8 576.4 59.8ZM575.3 59.8Q567 48.1 558 39.7Q569.7 46.3 577.9 59.8ZM576 59.8Q582.3 39.2 592.7 24.7Q586.6 40.6 579.6 59.8ZM593.3 59.8Q586 44.2 578.6 31.8Q588.5 43.1 595.4 59.8ZM613.9 59.6Q617.7 37.2 626.3 20.3Q621.9 38 617.4 59.6ZM616.8 59.6Q611 50.5 605.7 42.8Q614.5 48.5 620 59.6ZM614.3 59.6Q607.7 47.7 600.5 38.6Q611.7 45.7 617.8 59.6ZM631.1 60.6Q620.2 52.9 607.4 53.8Q621.9 50.8 633.3 60.6ZM627.7 60.6Q637.1 53.9 646.2 53.9Q639.2 57.8 631.3 60.6ZM630.2 60.6Q625.9 50 621.7 41.4Q628.6 49 632.6 60.6ZM630.9 60.6Q639.8 48.1 654.4 46.5Q642.9 50.6 634 60.6ZM629.8 60.6Q639.2 46.9 654.2 43.7Q642.4 49.3 632.9 60.6ZM628.8 60.6Q627 46 627.2 33.8Q630.4 45.7 631.5 60.6ZM653 59.7Q664.9 52.7 676.4 53.9Q666.5 56 655.9 59.7ZM-58.9 59.7Q-46.9 52.7 -35.4 53.9Q-45.3 56 -55.9 59.7ZM665.8 60.6Q680.5 50.4 696.9 54.8Q682.6 53.8 669 60.6ZM-43 60.6Q-28.3 50.4 -12 54.8Q-26.3 53.8 -39.8 60.6ZM680.1 60.3Q669.4 54.7 659.2 51.6Q670.9 52.3 682.4 60.3ZM-29 60.3Q-39.7 54.7 -49.9 51.6Q-38.3 52.3 -26.8 60.3ZM697.2 59.7Q686.6 49.3 675.6 42.4Q689.6 46.6 700.4 59.7ZM-10.9 59.7Q-21.5 49.3 -32.5 42.4Q-18.5 46.6 -7.7 59.7ZM700.9 59.7Q709.3 49.9 721.7 50.5Q712.4 53 704.3 59.7ZM-11 59.7Q-2.6 49.9 9.8 50.5Q0.4 53 -7.6 59.7ZM697.6 59.7Q697.9 40.5 700.2 24.9Q700.9 40.6 700 59.7ZM-10.5 59.7Q-10.2 40.5 -7.9 24.9Q-7.2 40.6 -8.1 59.7ZM698.5 59.7Q708.9 51.7 721.2 57.1Q711 55.1 701.6 59.7ZM-10.9 59.7Q-0.4 51.7 11.9 57.1Q1.7 55.1 -7.7 59.7Z"/><path fill="#5fc727" d="M-0.3 60.7Q-7.6 52.7 -16.6 48.7Q-4 49.9 3.4 60.7ZM710.3 60.7Q703 52.7 694 48.7Q706.6 49.9 713.9 60.7ZM2.3 60.7Q-4.9 54.7 -11.4 49.7Q-3.3 52.9 4.2 60.7ZM711.1 60.7Q703.9 54.7 697.4 49.7Q705.6 52.9 713.1 60.7ZM2.1 60.7Q-8.5 47.9 -20.7 40.2Q-5.2 45.5 5.3 60.7ZM710.5 60.7Q700 47.9 687.7 40.2Q703.2 45.5 713.8 60.7ZM15.6 60.2Q21.8 51.3 31.2 48.7Q24 53 17.8 60.2ZM724.2 60.2Q730.4 51.3 739.8 48.7Q732.6 53 726.4 60.2ZM27.7 59.8Q26.7 42.9 27.2 29Q29.3 42.8 29.8 59.8ZM737.5 59.8Q736.5 42.9 737 29Q739.1 42.8 739.6 59.8ZM45.3 60.6Q46.3 38.4 49.7 20.5Q50.3 38.6 48.5 60.6ZM755.4 60.6Q756.4 38.4 759.8 20.5Q760.4 38.6 758.6 60.6ZM68.3 60.7Q58.1 55.5 49 51Q60.1 52.3 71.3 60.7ZM103.1 60.4Q116.6 52.7 129.9 54.3Q117.7 54.9 105.1 60.4ZM118.4 59.9Q114.6 45.5 112.6 33.1Q118.5 44.5 121.6 59.9ZM118.7 59.9Q119.5 37.5 122.2 19.3Q122.2 37.6 120.9 59.9ZM141.2 60.1Q133.6 51.1 123.6 47.6Q136 49.3 143.6 60.1ZM187.1 59.6Q186 45.8 186 34.4Q188.7 45.6 189.3 59.6ZM248.3 60.4Q250.7 42.7 255.5 28.8Q254.4 43.3 251.3 60.4ZM271 60.7Q261.1 46 248.9 36.6Q264.5 43.9 274.3 60.7ZM285.8 59.9Q298.9 47.7 316.5 51.1Q301.2 50.4 288.6 59.9ZM309.5 59.7Q301.3 43.8 294.1 30.5Q304.2 42.4 312.1 59.7ZM345.5 60Q334.3 51 323.7 44.6Q336.2 48.9 347.8 60ZM363.8 60.2Q355.1 51.7 347.3 44.6Q357.8 49.3 366.7 60.2ZM364.4 60.2Q364.6 41.3 367.7 25.9Q368.6 41.4 367.6 60.2ZM426.3 60Q437.8 52.7 449.7 54.7Q439.3 55.3 428.7 60ZM444.7 60.9Q436.9 57.2 429.8 53.9Q438.8 54.2 447.5 60.9ZM460.9 60.1Q450.7 55.7 440 59.6Q452.6 52.4 464 60.1ZM477.9 60.1Q476.4 40.7 476.8 24.7Q480 40.5 480.8 60.1ZM501.8 59.5Q515.5 48.7 531.2 49.2Q517.1 50.8 503.9 59.5ZM504 59.5Q509.7 45 519.5 36.3Q513.1 46.5 507 59.5ZM504 59.5Q504.8 44.3 508.4 32.2Q508.6 44.6 507.1 59.5ZM521.8 60.4Q521.3 45.4 522.9 33.1Q525.1 45.4 524.8 60.4ZM522.1 60.4Q527.5 46.3 537 37.7Q531.7 48.1 525.7 60.4ZM535.1 60.4Q531.3 43.9 527.7 30.3Q533.9 43.3 537.3 60.4ZM533.4 60.4Q541.1 47.1 553.6 41.7Q544 48.9 536.1 60.4ZM556.7 60.1Q564.7 47.4 575.8 41.4Q567.8 49.6 559.7 60.1ZM575.4 59.8Q571.1 47.9 566.1 38.5Q573.8 47 577.7 59.8ZM617.6 59.6Q615.5 40.6 615.3 24.8Q619.9 40.2 621.1 59.6ZM617.5 59.6Q623.1 48.8 632.4 43.7Q626.1 50.5 620.4 59.6ZM650.1 59.7Q640.1 47.7 630.8 38Q643.4 45.2 653.4 59.7ZM-59.1 59.7Q-69.1 47.7 -78.4 38Q-65.8 45.2 -55.7 59.7ZM665.2 60.6Q654.3 57.3 643.4 60.1Q656.1 53.3 668.7 60.6ZM-43.2 60.6Q-54.1 57.3 -64.9 60.1Q-52.3 53.3 -39.7 60.6ZM666.4 60.6Q660.8 51.2 654.6 44.2Q663 50 668.5 60.6ZM-42.4 60.6Q-48.1 51.2 -54.3 44.2Q-45.9 50 -40.4 60.6ZM699.5 59.7Q709.8 43.5 721.9 33.7Q712.6 45.4 702.2 59.7ZM-10.6 59.7Q-0.3 43.5 11.8 33.7Q2.4 45.4 -8 59.7Z"/><path fill="#a0e03e" d="M13 60.2Q8.3 40.4 5.3 23.6Q12.2 39.5 16.3 60.2ZM723.7 60.2Q718.9 40.4 716 23.6Q722.9 39.5 726.9 60.2ZM25.2 59.8Q35.7 51.1 46.6 49.3Q37.6 53.9 28 59.8ZM737.2 59.8Q747.6 51.1 758.5 49.3Q749.6 53.9 739.9 59.8ZM27.4 59.8Q32.1 44.4 40.2 33.8Q35.9 45.7 30.6 59.8ZM737 59.8Q741.7 44.4 749.7 33.8Q745.4 45.7 740.1 59.8ZM46.8 60.6Q57.1 43.5 73.4 36.3Q59.5 45 49.1 60.6ZM755.9 60.6Q766.1 43.5 782.4 36.3Q768.5 45 758.1 60.6ZM45.6 60.6Q46.3 40.6 48.8 24.4Q48.7 40.7 47.5 60.6ZM756 60.6Q756.8 40.6 759.3 24.4Q759.2 40.7 758 60.6ZM86.5 59.6Q97.6 49.4 110.8 48.9Q100.4 52.8 90 59.6ZM102.9 60.4Q110 53 119.3 53.1Q112.2 55.5 105.6 60.4ZM101.4 60.4Q103.4 39.3 107.8 22.4Q106.1 39.6 103.6 60.4ZM102.4 60.4Q102.6 39.8 105.9 23.2Q106.9 40 105.7 60.4ZM119 59.9Q121.1 47 125.2 37Q123.7 47.5 121.2 59.9ZM121.7 59.9Q131 49.8 142.3 46.7Q132.8 51.6 123.8 59.9ZM141 60.1Q149 52.9 159 54.9Q151.2 55.8 143.9 60.1ZM140.1 60.1Q133.2 57 126.3 56Q135.1 54 142.9 60.1ZM163.7 60.6Q158.5 50.9 153 43.4Q162 49.3 166.8 60.6ZM162.4 60.6Q172.1 53.4 183.2 56.5Q173.9 56.2 165.1 60.6ZM184.4 59.6Q173.4 52.2 160.6 52.7Q176.3 48.6 188 59.6ZM185.8 59.6Q199.4 51.4 213 54.1Q201.2 55.1 189.1 59.6ZM207.1 59.9Q205.5 43.7 205.9 30.2Q209.9 43.3 210.7 59.9ZM249.2 60.4Q239.7 50.7 228.7 45.8Q242.6 48.2 252.3 60.4ZM246.1 60.4Q255.3 52.2 266.7 53.9Q257.7 55.3 249.3 60.4ZM271.8 60.7Q280.5 52.7 289.5 50Q282.5 55.3 274.4 60.7ZM268.1 60.7Q261.2 44.4 254.1 31.4Q265.5 42.8 271.8 60.7ZM320.7 60.2Q328.4 53.5 338.2 56.2Q330.3 56.1 323.2 60.2ZM323.6 60.2Q312.6 53.9 301.2 52Q314.7 50.8 326.6 60.2ZM341.5 60Q335.2 54.7 330.4 48.9Q338.3 51.8 344.9 60ZM366.4 60.2Q361.9 43.6 358.8 29.6Q365.9 42.7 369.6 60.2ZM388.9 60.8Q382.2 57.6 375.7 55.1Q384.7 54 392.4 60.8ZM389.3 60.8Q397.5 56 405.7 61Q398.7 58.7 391.7 60.8ZM412.6 60.3Q408.4 48.9 403.5 40Q411.3 47.9 415.1 60.3ZM424.9 60Q429.9 49.3 436.7 42.5Q432.4 50.6 427.2 60ZM427.5 60Q423.6 44.7 421.5 31.7Q427.2 43.9 430.5 60ZM424.3 60Q431 42.8 440.8 31.3Q434.8 44.4 427.6 60ZM446.7 60.9Q438.6 46.9 432 35Q441.6 45.3 449.4 60.9ZM444.2 60.9Q435.6 49.1 427.3 40Q437.9 47.5 446.4 60.9ZM460.7 60.1Q470.3 41.9 482.4 30.4Q474.1 44 464.2 60.1ZM461.5 60.1Q452 55.3 441.6 56.7Q454.1 51.9 464.7 60.1ZM478.6 60.1Q481.3 48.5 485.9 40Q484.4 49.3 481.1 60.1ZM523.1 60.4Q526 47.1 531.4 37.2Q528.6 47.7 525.3 60.4ZM522.9 60.4Q530.4 47.7 540.5 40.9Q533.7 49.8 526 60.4ZM555.2 60.1Q548.4 47.6 541.6 37.7Q551.6 46 558.1 60.1ZM555.7 60.1Q545.2 45.1 531 37.4Q547.7 43.4 558.2 60.1ZM594.4 59.8Q586.1 50.3 577.9 43.2Q588.7 48.3 597 59.8ZM592.6 59.8Q598.5 47.9 608.6 42Q601.4 49.4 595.2 59.8ZM650 59.7Q638.2 51.3 624 52.9Q640.4 48.6 652.8 59.7ZM-58.8 59.7Q-70.5 51.3 -84.7 52.9Q-68.3 48.6 -56 59.7ZM650.9 59.7Q638.6 49.7 623.7 48.7Q641 47.1 653.7 59.7ZM-58.8 59.7Q-71.1 49.7 -86.1 48.7Q-68.7 47.1 -56 59.7ZM650.2 59.7Q660.2 47.7 673.1 44Q663 50.2 653.2 59.7ZM-58.9 59.7Q-48.9 47.7 -36 44Q-46.2 50.2 -55.9 59.7ZM666.9 60.6Q670.2 42.2 677.7 28.5Q673.8 43 669.8 60.6ZM-42.9 60.6Q-39.5 42.2 -32.1 28.5Q-36 43 -40 60.6ZM665.3 60.6Q659.6 43.2 654.4 28.9Q663.7 42 668.7 60.6ZM-43.2 60.6Q-48.9 43.2 -54 28.9Q-44.8 42 -39.7 60.6ZM681.7 60.3Q688.9 51.2 698.1 48Q691.4 53.4 684.4 60.3ZM-29.3 60.3Q-22.1 51.2 -12.8 48Q-19.5 53.4 -26.6 60.3ZM682.4 60.3Q671.9 55.3 661 56.4Q673.8 52.2 685.3 60.3ZM-29.4 60.3Q-39.8 55.3 -50.8 56.4Q-37.9 52.2 -26.4 60.3ZM679.3 60.3Q687.5 47.9 698.9 42.7Q690.9 50.4 682.7 60.3ZM-29.6 60.3Q-21.4 47.9 -10 42.7Q-18 50.4 -26.2 60.3ZM679.6 60.3Q675.3 49.7 672.1 40.6Q679.5 48.2 683.1 60.3ZM-29.7 60.3Q-33.9 49.7 -37.2 40.6Q-29.8 48.2 -26.1 60.3ZM698.7 59.7Q694 41.8 690.1 26.9Q697.1 41 701.3 59.7ZM-10.6 59.7Q-15.4 41.8 -19.2 26.9Q-12.2 41 -8 59.7Z"/><path fill="#88d834" d="M25.8 59.8Q32 50.8 40.8 47.6Q34.4 52.7 28.2 59.8ZM737.3 59.8Q743.5 50.8 752.3 47.6Q745.9 52.7 739.8 59.8ZM44.5 60.6Q45.6 37.8 50.4 19.6Q49.9 38.1 47.9 60.6ZM755.3 60.6Q756.4 37.8 761.2 19.6Q760.7 38.1 758.7 60.6ZM69.1 60.7Q75.9 52.8 86.1 53.3Q77.6 54.5 71 60.7ZM65.8 60.7Q58.8 48.6 49.9 40.5Q62 46.9 68.7 60.7ZM90.9 59.6Q89.8 45.5 90.6 33.9Q93 45.4 93.4 59.6ZM102.2 60.4Q93.1 42.3 85.3 27.3Q96.1 40.9 104.9 60.4ZM102.8 60.4Q116.7 48.1 133.7 49Q119.1 51 105.9 60.4ZM118.5 59.9Q109.4 53.3 99.9 49.8Q112.1 50.2 121.9 59.9ZM118.9 59.9Q121.7 40.6 128.3 25.9Q126.2 41.4 122.5 59.9ZM139.1 60.1Q138.4 42.2 139.5 27.6Q141.5 42.2 141.5 60.1ZM138.5 60.1Q152.2 48.1 168.3 47.9Q154.8 51.3 141.8 60.1ZM207.4 59.9Q198.5 54.1 188.1 54.6Q201 50.9 210.6 59.9ZM205.6 59.9Q204.5 41.9 205.8 27Q208.7 41.7 209 59.9ZM226.7 60.3Q234.3 50.5 243.4 46.5Q237.7 53.6 230.4 60.3ZM225 60.3Q225.8 47.9 229.3 38.2Q229.5 48.3 227.9 60.3ZM224.5 60.3Q219 52.4 212.3 47.3Q221.2 51 226.6 60.3ZM247 60.4Q255 50.6 266.8 49.9Q258.2 53.5 250.4 60.4ZM268.3 60.7Q282.7 52.6 297.2 59.5Q284.4 56.3 271.6 60.7ZM288.9 59.9Q291.7 42.8 297.2 29.8Q295.7 43.6 292.2 59.9ZM287.7 59.9Q281.2 54.4 275.2 49.7Q283.7 51.9 290.5 59.9ZM308.6 59.7Q321.4 46.1 336.5 42Q324.4 49.3 312.1 59.7ZM310.1 59.7Q305.8 48.9 301.2 40.3Q309.2 47.7 313 59.7ZM322.1 60.2Q313.4 46.6 302.1 38.2Q316.7 44.7 325.1 60.2ZM322.4 60.2Q330.5 54.3 339.5 57.6Q332.3 57.5 325.3 60.2ZM342.4 60Q329.5 53.4 318.1 47.4Q331.8 49.8 345.8 60ZM364.2 60.2Q356.3 51.4 346.4 47.4Q358.6 49.6 366.6 60.2ZM390.4 60.8Q383.7 56.3 377.7 52.2Q385.9 53.7 393.1 60.8ZM387.5 60.8Q380.4 44.3 374.5 30.6Q383.5 43.1 390.2 60.8ZM412.3 60.3Q413 48.1 416.8 38.5Q417.2 48.4 415.7 60.3ZM411 60.3Q407.7 45.7 405.6 33.4Q410.3 45.2 413.1 60.3ZM411.8 60.3Q420.6 45.8 434.6 39.9Q423.4 47.6 414.4 60.3ZM426.8 60Q436.7 44.4 450.6 37.1Q440.2 46.8 430.2 60ZM424.2 60Q437.3 51.1 451.5 54.9Q439.4 54.7 427.6 60ZM427.1 60Q432.7 47 442.2 39.6Q436.7 48.9 430.7 60ZM446.7 60.9Q435.5 56.9 424.3 60.7Q437.2 53.4 449.7 60.9ZM444.8 60.9Q444.8 37.9 447.8 19.2Q449.4 38 448.4 60.9ZM462.2 60.1Q472.7 52.7 483.2 53.4Q474.8 56.5 465.7 60.1ZM480.8 60.1Q488.5 51.4 497.8 48.9Q491.1 54 483.7 60.1ZM501.7 59.5Q510.1 45.2 521.2 37.2Q513.6 47.4 505 59.5ZM502.2 59.5Q494.1 52.8 484.1 52.2Q496.1 50.7 504.5 59.5ZM520.9 60.4Q520.4 40.7 521.9 24.6Q523.8 40.7 523.6 60.4ZM555 60.1Q568.1 46.9 584.2 44.5Q570.9 49.9 558.2 60.1ZM573.9 59.8Q563.6 47.9 553.6 39Q565.5 46.3 575.9 59.8ZM576.2 59.8Q582.9 39.4 594 25.3Q586.8 40.8 579.5 59.8ZM616.4 59.6Q620.9 42.5 630 30.5Q623.8 43.3 618.9 59.6ZM631.3 60.6Q639.9 51.5 650.3 49.7Q642.3 54.1 634.2 60.6ZM652.4 59.7Q664.7 49.9 678.6 50.8Q667.2 53.4 655.8 59.7ZM-59.1 59.7Q-46.7 49.9 -32.8 50.8Q-44.3 53.4 -55.7 59.7Z"/><path fill="#72d02c" d="M1.7 60.7Q14.4 53.7 26.1 52.7Q15.5 55.9 3.7 60.7ZM711.1 60.7Q723.8 53.7 735.5 52.7Q724.9 55.9 713.1 60.7ZM1.3 60.7Q-3.6 48.6 -9.4 39.1Q0.4 47.1 4.8 60.7ZM710.4 60.7Q705.4 48.6 699.7 39.1Q709.5 47.1 713.9 60.7ZM14 60.2Q2.4 54 -10.1 55.5Q4.1 51.3 16.6 60.2ZM724 60.2Q712.5 54 699.9 55.5Q714.2 51.3 726.6 60.2ZM12.5 60.2Q8.3 39.1 4.2 21.8Q12.2 38.4 15.7 60.2ZM723.7 60.2Q719.5 39.1 715.4 21.8Q723.5 38.4 726.9 60.2ZM13 60.2Q12.4 43.8 14.4 30.2Q16.8 43.7 16.5 60.2ZM723.6 60.2Q723 43.8 724.9 30.2Q727.3 43.7 727 60.2ZM28.8 59.8Q41.3 47.8 54.6 42.9Q43.4 50.1 31.3 59.8ZM737.3 59.8Q749.8 47.8 763 42.9Q751.9 50.1 739.8 59.8ZM27.4 59.8Q25.5 42.7 24.9 28.6Q28.2 42.4 29.6 59.8ZM737.5 59.8Q735.6 42.7 735 28.6Q738.3 42.4 739.6 59.8ZM25.1 59.8Q13.4 54.6 1.5 54.9Q15.5 50.9 28.5 59.8ZM736.8 59.8Q725.2 54.6 713.2 54.9Q727.3 50.9 740.3 59.8ZM25.9 59.8Q26.9 44.4 31.5 32.2Q31.2 44.7 29.4 59.8ZM736.8 59.8Q737.8 44.4 742.4 32.2Q742.1 44.7 740.3 59.8ZM68.5 60.7Q58.1 57 48.7 54.3Q59.3 54.4 70.8 60.7ZM88.3 59.6Q90.6 40.2 95.6 24.9Q94.2 40.7 91.2 59.6ZM102.1 60.4Q95.5 54.9 88.6 51.7Q97.5 52.9 104.3 60.4ZM118.4 59.9Q115.2 48.5 113.9 38.5Q119.4 47.5 121.8 59.9ZM138.8 60.1Q148.4 47.9 160.2 42.5Q150.7 49.8 141.2 60.1ZM164.1 60.6Q158.8 52.2 152.2 46.7Q160.9 50.9 166.1 60.6ZM162 60.6Q170.9 41 183.6 28.5Q174.3 42.7 165.1 60.6ZM186.7 59.6Q196.3 48.9 207.1 44.8Q199.4 52.1 190.3 59.6ZM225.5 60.3Q238.5 53.6 251.3 59.6Q239.5 55.8 227.5 60.3ZM224.6 60.3Q217.3 49.3 207.8 42.8Q219.4 47.9 226.6 60.3ZM225.6 60.3Q235.4 44 251.7 38.2Q239 46.3 229 60.3ZM246 60.4Q239.3 46.4 232.4 35.3Q241.8 45.3 248.2 60.4ZM247.6 60.4Q249.2 48 254.1 38.7Q253.2 48.7 250.9 60.4ZM270 60.7Q267.8 48.7 267.6 38.4Q271.9 48 273.4 60.7ZM287.8 59.9Q275.2 48.9 263.1 41.3Q277 46.9 289.9 59.9ZM287.6 59.9Q288.3 42.5 290.9 28.4Q290.9 42.6 289.7 59.9ZM289.1 59.9Q293.4 37.9 300.7 21Q296.4 38.5 291.6 59.9ZM287 59.9Q275.8 52.6 263.9 51Q277.3 50.6 289 59.9ZM286.9 59.9Q292.2 49 300.9 43.4Q296 51 290.3 59.9ZM322.4 60.2Q317.3 43 311.5 29.3Q321.2 42 325.6 60.2ZM323.1 60.2Q315.7 43.6 305.4 32.1Q318.8 42.4 325.8 60.2ZM344.3 60Q342.1 48.1 340.5 38.2Q344.8 47.7 346.5 60ZM341.5 60Q327.8 52.6 312.7 56.4Q329.6 49.7 344.2 60ZM341.2 60Q332.7 56.8 324.8 54.1Q334.8 53.1 344.6 60ZM367.3 60.2Q364.4 40.5 361.8 24.2Q367.3 40.1 369.7 60.2ZM365.3 60.2Q360.3 49.5 355 41Q362.9 48.4 367.6 60.2ZM366.4 60.2Q364.8 41.8 365.5 26.5Q368.8 41.6 369.6 60.2ZM412.4 60.3Q414.8 42.1 419.7 27.7Q418.4 42.6 415.3 60.3ZM413.1 60.3Q404.4 53.3 396.5 47.4Q407.2 50.4 416.4 60.3ZM427.7 60Q424.8 46.5 422.8 35.2Q427.7 45.9 430.1 60ZM443.7 60.9Q438.5 51.1 433 43.5Q442.5 49.3 447.2 60.9ZM462 60.1Q461.1 39.5 461.5 22.7Q463.8 39.5 464.1 60.1ZM462.5 60.1Q453.4 52.8 443.5 49.6Q455.9 50.1 465.4 60.1ZM478.3 60.1Q473.9 38.8 470.6 21.2Q477.5 38.1 481.2 60.1ZM479.1 60.1Q492.2 51.2 506.6 55.1Q494 54.2 481.9 60.1ZM501.7 59.5Q504.6 38.9 510.4 22.8Q508.8 39.6 505.1 59.5ZM533.9 60.4Q537 44.1 542.9 31.8Q539.6 44.7 536.1 60.4ZM556.5 60.1Q549.3 55 542.3 51.6Q550.9 53 558.5 60.1ZM575.4 59.8Q562.8 53.8 550.4 51.4Q564.9 50.2 578.7 59.8ZM574.7 59.8Q566.1 48.9 555 43.3Q568.6 47 577.3 59.8ZM574.2 59.8Q588.8 52.2 603.4 61.5Q589.9 54.5 576.2 59.8ZM594.9 59.8Q590.1 50.3 585.5 42.6Q593.3 48.9 597.7 59.8ZM591.4 59.8Q585.1 43.7 578.7 30.8Q588.2 42.6 594 59.8ZM591.8 59.8Q602.1 51.7 614 53.5Q604 54.5 594.5 59.8ZM668.7 60.6Q673 48.3 681.1 40.7Q676.2 49.6 671.4 60.6ZM-42.8 60.6Q-38.5 48.3 -30.4 40.7Q-35.3 49.6 -40.1 60.6ZM669.1 60.6Q678.8 51.6 691.4 53.2Q680.5 53.7 671.3 60.6ZM-42.5 60.6Q-32.8 51.6 -20.2 53.2Q-31.1 53.7 -40.4 60.6ZM679.8 60.3Q668.5 47.1 656.2 38.7Q670.8 45.3 682.2 60.3ZM-29.1 60.3Q-40.4 47.1 -52.7 38.7Q-38.1 45.3 -26.7 60.3ZM682.1 60.3Q682.1 45.9 684.7 34.3Q686.1 46 685.3 60.3ZM-29.5 60.3Q-29.5 45.9 -26.9 34.3Q-25.5 46 -26.3 60.3ZM681 60.3Q686.1 42.1 695.6 29.4Q689.7 43.2 684 60.3ZM-29.4 60.3Q-24.2 42.1 -14.8 29.4Q-20.6 43.2 -26.4 60.3ZM701.2 59.7Q706.9 50 714 44.5Q709.8 51.9 703.9 59.7ZM-10.7 59.7Q-5 50 2.2 44.5Q-2.1 51.9 -7.9 59.7ZM700.8 59.7Q699.7 36.5 700 17.4Q702.8 36.4 703.3 59.7ZM-10.5 59.7Q-11.6 36.5 -11.3 17.4Q-8.5 36.4 -8 59.7ZM701.1 59.7Q696 43.8 691.7 30.6Q698.7 43 703.3 59.7ZM-10.4 59.7Q-15.5 43.8 -19.8 30.6Q-12.8 43 -8.2 59.7Z"/><path fill="#4dba22" d="M-1.4 60.7Q-14.4 55.9 -27.5 59.2Q-12.5 52.1 1.9 60.7ZM710.4 60.7Q697.5 55.9 684.4 59.2Q699.4 52.1 713.8 60.7ZM28.7 59.8Q27.7 36.4 29.2 17.3Q32 36.3 32.1 59.8ZM736.8 59.8Q735.8 36.4 737.3 17.3Q740.1 36.3 740.3 59.8ZM69.6 60.7Q63.7 48.7 56 40.2Q66.4 47.4 72 60.7ZM87.6 59.6Q85 47.6 83.2 37.5Q88.5 46.9 90.4 59.6ZM100 60.4Q104.7 49.7 112 43.4Q108.6 51.6 103.5 60.4ZM138.3 60.1Q131.5 51.1 126.3 42.7Q134.8 48.9 141.4 60.1ZM161.3 60.6Q166.4 44 175.3 32.4Q169.3 44.9 163.7 60.6ZM162.5 60.6Q169.9 46.9 182.8 41.1Q172.1 48.1 164.5 60.6ZM208.5 59.9Q202.4 53.9 195.1 51Q205.7 51.1 212 59.9ZM206.3 59.9Q209.5 48 216.4 40.1Q213 49.1 209.2 59.9ZM207.9 59.9Q203.2 50.4 200.6 41.5Q207.3 48.6 211.5 59.9ZM227.1 60.3Q234.9 52.1 244.7 50.9Q236.9 54.3 229.5 60.3ZM226.7 60.3Q216.4 47.6 206.4 37.7Q219.2 45.5 229.5 60.3ZM226.2 60.3Q233.6 46.6 243.8 38.7Q236.8 48.5 229.2 60.3ZM248.1 60.4Q250.3 37.1 255.4 18.6Q254.1 37.6 251.2 60.4ZM270 60.7Q260.6 48.5 250.9 39.7Q263.1 46.8 272.4 60.7ZM269.8 60.7Q277.8 51.3 286.7 46.8Q279.9 53.3 272.1 60.7ZM286.7 59.9Q296.7 45.8 310.7 40.4Q299.5 48 289.6 59.9ZM310.3 59.7Q302.8 55.7 294.8 54.5Q305.3 52.2 313.8 59.7ZM309.7 59.7Q304.7 43.7 301.3 30Q308.2 42.7 312.5 59.7ZM310.8 59.7Q319.7 51.6 330.4 51.7Q321.7 54.1 313.4 59.7ZM320.6 60.2Q331.1 49.6 343 46.1Q333.3 52 323.3 60.2ZM320.1 60.2Q320.6 46.7 323.9 35.9Q324.5 47 323.1 60.2ZM321.5 60.2Q315.5 51.4 310.5 43.5Q318.5 49.5 324.4 60.2ZM344.4 60Q331.8 49 320.8 39.4Q334.9 45.8 348 60ZM365.2 60.2Q359.3 51.2 352.6 44.7Q362 49.6 367.8 60.2ZM388.7 60.8Q376.8 50 365.4 42Q379.1 47.6 391.4 60.8ZM390.2 60.8Q397.5 48 409.4 42.9Q401.4 50.5 393.8 60.8ZM387.2 60.8Q396.6 52.6 407.2 52Q398.4 55.1 389.7 60.8ZM412.2 60.3Q419.9 51 429.4 47.7Q422.7 53.6 415.2 60.3ZM444.3 60.9Q441.6 50.1 440.1 41Q445.2 49.4 447.2 60.9ZM461.3 60.1Q461.6 45.6 463.9 33.9Q464.7 45.7 463.8 60.1ZM478.7 60.1Q470.2 54.9 461.6 51.9Q473 51.3 482.4 60.1ZM480.9 60.1Q478.2 45.8 477.5 33.6Q482.2 45.1 484.1 60.1ZM504.5 59.5Q502.4 47 502 36.5Q506.1 46.5 507.5 59.5ZM521.2 60.4Q523.6 48.9 528.5 40.4Q526.3 49.5 523.4 60.4ZM536.4 60.4Q539.9 42.2 548.1 29Q544 43.1 539.7 60.4ZM534.2 60.4Q522.9 53.5 512.4 48.3Q525.4 50.1 537.5 60.4ZM554.9 60.1Q545.7 51.8 537.4 45.1Q547.9 49.7 557.4 60.1ZM554.8 60.1Q558.3 45.9 566 36.2Q561.9 46.9 557.8 60.1ZM591.5 59.8Q585 52.5 577 49.1Q587.1 50.8 593.6 59.8ZM618.5 59.6Q611.8 53.2 604.9 48.8Q613.8 51.3 620.7 59.6ZM614.9 59.6Q613.9 46 615.2 34.6Q618.1 45.8 618.3 59.6ZM615.2 59.6Q602.9 54.4 590 60.6Q604.7 50.9 618.3 59.6ZM629.9 60.6Q620.2 55 609.5 56.2Q621.7 52.8 632 60.6ZM652.4 59.7Q659.2 42 668.1 29.5Q662.8 43.5 655.6 59.7ZM-59 59.7Q-52.2 42 -43.3 29.5Q-48.5 43.5 -55.8 59.7ZM667.9 60.6Q671.3 46.5 677.6 36.3Q674.8 47.5 670.8 60.6ZM-42.9 60.6Q-39.5 46.5 -33.2 36.3Q-35.9 47.5 -40 60.6ZM665.3 60.6Q675 51 686.8 49.6Q677.2 53.5 668 60.6ZM-42.8 60.6Q-33.1 51 -21.3 49.6Q-30.9 53.5 -40.1 60.6ZM668.6 60.6Q661.8 51.3 653.5 45.6Q664.1 49.8 670.8 60.6ZM-42.5 60.6Q-49.3 51.3 -57.6 45.6Q-47.1 49.8 -40.3 60.6ZM698.9 59.7Q690.7 51.4 683.9 43.6Q693.3 49.1 701.7 59.7ZM-10.7 59.7Q-19 51.4 -25.7 43.6Q-16.4 49.1 -7.9 59.7Z"/><path fill="#41b01f" d="M1.6 60.7Q11 52.6 22.9 55.4Q13 55.2 4.2 60.7ZM710.8 60.7Q720.3 52.6 732.2 55.4Q722.2 55.2 713.4 60.7ZM0.4 60.7Q-13.5 54.9 -26.1 51.7Q-12.4 52.7 2.5 60.7ZM711.1 60.7Q697.2 54.9 684.6 51.7Q698.3 52.7 713.1 60.7ZM12.9 60.2Q8.5 48.9 4.9 39.5Q11.5 47.9 15.4 60.2ZM724.1 60.2Q719.7 48.9 716.1 39.5Q722.7 47.9 726.6 60.2ZM15.8 60.2Q14.6 45.3 15.1 32.9Q18.1 45.1 18.6 60.2ZM723.9 60.2Q722.7 45.3 723.2 32.9Q726.2 45.1 726.7 60.2ZM27.6 59.8Q24.5 49.3 21.7 40.6Q27.9 48.4 30.3 59.8ZM737.2 59.8Q734.1 49.3 731.3 40.6Q737.5 48.4 739.9 59.8ZM45.9 60.6Q39 50 32.4 41.5Q41.1 48.7 47.9 60.6ZM756 60.6Q749.1 50 742.4 41.5Q751.2 48.7 758 60.6ZM47.4 60.6Q54.9 46.7 65.3 38.7Q57.5 48.2 49.8 60.6ZM755.8 60.6Q763.3 46.7 773.7 38.7Q765.9 48.2 758.2 60.6ZM46.1 60.6Q39 43.1 29.7 30.1Q42.2 41.8 48.9 60.6ZM755.6 60.6Q748.5 43.1 739.3 30.1Q751.8 41.8 758.4 60.6ZM66.1 60.7Q61.8 49.1 57 39.8Q65.1 47.9 68.9 60.7ZM67.6 60.7Q65.2 43.3 64.2 28.8Q68.4 42.9 70.2 60.7ZM66.8 60.7Q76.2 53.9 87.1 57.8Q77.8 56.3 69.1 60.7ZM66.2 60.7Q59.5 48.1 53.8 37.6Q61.8 47 68.2 60.7ZM87.1 59.6Q75 48.4 60.3 44.9Q77.8 45.7 90.3 59.6ZM87.2 59.6Q79.3 53.2 70.3 50.9Q82.2 50.2 90.5 59.6ZM90.5 59.6Q88.7 36.3 88.2 17.1Q91.5 36.1 92.8 59.6ZM86.8 59.6Q84.2 44.2 83.2 31.2Q88.2 43.6 90 59.6ZM122 59.9Q128.2 42.7 136.7 30.6Q131.8 44.1 125 59.9ZM140 60.1Q145.3 47.8 152.6 39.8Q148.6 49.4 142.9 60.1ZM141.8 60.1Q148.7 44.8 160.5 36.3Q151 45.9 143.9 60.1ZM164 60.6Q157.6 52.7 151.3 46.4Q161.3 50.1 167.6 60.6ZM162.1 60.6Q175.6 47.8 190.9 44.5Q177.9 50.6 164.9 60.6ZM187.2 59.6Q176.5 53.6 165.1 53.3Q178.4 50.7 190 59.6ZM184.8 59.6Q178.4 49.4 170.3 42.8Q181.8 47.5 187.9 59.6ZM187.3 59.6Q179.2 55.7 170.4 59.2Q180.5 53.4 189.4 59.6ZM207.6 59.9Q202.4 44.8 195.6 33.3Q205.6 43.8 210.3 59.9ZM207.6 59.9Q220 51.9 233.1 56.4Q221.8 55.4 210.7 59.9ZM248.4 60.4Q258.5 41.9 272.2 31Q262.1 44 251.8 60.4ZM245.9 60.4Q235.4 48.4 225.9 38.5Q237.6 46.5 248.3 60.4ZM248.9 60.4Q262.5 50.4 277.6 52.3Q264.5 53.5 251.9 60.4ZM286.6 59.9Q296.6 46.5 311.2 42.5Q298.7 48.1 288.7 59.9ZM308.4 59.7Q313.8 45 320.8 34.2Q316.4 46 310.7 59.7ZM307.5 59.7Q316.7 54.1 326.2 57.6Q318.1 56.8 309.9 59.7ZM320.1 60.2Q322.8 39.8 328.1 23.7Q326.2 40.3 322.9 60.2ZM344.5 60Q336.2 54.1 328.7 48.9Q338.9 51 347.8 60ZM365.8 60.2Q357.8 47.3 350.5 36.5Q361.7 45.1 369.4 60.2ZM389.5 60.8Q389.4 38.1 392.3 19.6Q394 38.1 393.1 60.8ZM412.3 60.3Q399.2 50 386.1 43.8Q400.9 47.9 414.5 60.3ZM413 60.3Q399.5 55.1 386.7 53.7Q401.2 51.7 416.1 60.3ZM414 60.3Q415.3 42.4 418.3 28Q418 42.7 416.2 60.3ZM425 60Q437.1 49.4 451.9 51.3Q439.8 53 428.5 60ZM427.6 60Q441.9 51.3 456 52.4Q443.6 54.6 430.5 60ZM443.3 60.9Q431.7 55 420.5 51.5Q433.9 51.5 446.7 60.9ZM459.2 60.1Q454.8 49.2 450.7 40.2Q458.3 47.9 462.2 60.1ZM461.8 60.1Q471.1 41 484.2 29.2Q474.6 42.8 464.9 60.1ZM460.6 60.1Q453 51.3 445.6 44.3Q456.4 48.7 464 60.1ZM478.8 60.1Q490.3 44.9 507.1 40.5Q492.3 46.5 480.8 60.1ZM478.1 60.1Q484.9 48.2 493 40.6Q487.4 49.7 480.5 60.1ZM504 59.5Q496.3 43.6 488.2 31.1Q500.3 41.8 507.5 59.5ZM502.2 59.5Q491.2 54.9 480.7 53.2Q492.9 51.8 505 59.5ZM534 60.4Q531 49.7 529.9 40.3Q535.5 48.7 537.6 60.4ZM534.2 60.4Q542.9 45.3 556 38.1Q546.1 47.3 537.2 60.4ZM533.8 60.4Q542.1 52.3 551.5 50.1Q543.8 54.2 535.9 60.4ZM556.5 60.1Q558.6 39.2 564.7 22.9Q562.9 39.8 559.9 60.1ZM574.1 59.8Q567 50.4 558.4 44.8Q569.2 48.9 576.3 59.8ZM573.6 59.8Q587.7 51.6 602.3 60.4Q589.2 54.7 576.4 59.8ZM573.4 59.8Q587.1 50.6 600.6 49.2Q588.6 53 575.7 59.8ZM592.3 59.8Q596.4 48.9 604 42.5Q600.4 50.6 595.8 59.8ZM592.2 59.8Q605.3 48.1 622.5 51.5Q607.2 50.4 594.6 59.8ZM591.1 59.8Q596.4 47.7 604.7 40.3Q599.4 49.1 593.7 59.8ZM594.6 59.8Q600.6 48.3 609.7 42Q603.3 49.8 597.1 59.8ZM628.2 60.6Q621.2 57.7 615.2 53.7Q623.5 54 631.7 60.6ZM649.9 59.7Q659.3 45.1 671.3 37.3Q662.3 47.2 652.9 59.7ZM-58.9 59.7Q-49.5 45.1 -37.6 37.3Q-46.5 47.2 -55.9 59.7ZM665.6 60.6Q673.7 42.6 685.1 30.8Q676.3 43.8 667.9 60.6ZM-42.6 60.6Q-34.5 42.6 -23.1 30.8Q-32 43.8 -40.3 60.6ZM667.1 60.6Q680.7 51 696.8 57.9Q682.1 53 669.1 60.6ZM-42.4 60.6Q-28.8 51 -12.7 57.9Q-27.5 53 -40.4 60.6ZM679.4 60.3Q688.9 50.1 701.3 49.1Q691.6 52.9 682.5 60.3ZM-29.5 60.3Q-19.9 50.1 -7.5 49.1Q-17.3 52.9 -26.4 60.3ZM682.3 60.3Q683 41.3 686 26Q686.2 41.5 684.9 60.3ZM-29.2 60.3Q-28.5 41.3 -25.5 26Q-25.3 41.5 -26.6 60.3ZM698.6 59.7Q703.8 42.8 711.7 30.5Q706.2 43.6 700.7 59.7ZM-10.3 59.7Q-5.2 42.8 2.7 30.5Q-2.7 43.6 -8.3 59.7ZM697.6 59.7Q706 52.7 716.4 55.5Q707.6 55 699.8 59.7ZM-10.4 59.7Q-2 52.7 8.4 55.5Q-0.4 55 -8.2 59.7Z"/><path fill="#a4e04c" d="M10.8 60.3Q6.9 55.6 3.2 51.5Q10.5 53.2 14.3 60.3ZM721.2 60.3Q717.3 55.6 713.6 51.5Q720.9 53.2 724.7 60.3ZM12.9 60.3Q8.4 58.7 3.9 58Q10.4 55.6 15.8 60.3ZM721.5 60.3Q717 58.7 712.5 58Q719 55.6 724.4 60.3ZM45.7 60Q49 54.8 54 53.6Q52.3 57.5 49.2 60ZM757.2 60Q760.5 54.8 765.4 53.6Q763.8 57.5 760.6 60ZM46.1 60Q44.7 55.8 46 51.5Q50 54.7 50.5 60ZM756.7 60Q755.3 55.8 756.6 51.5Q760.6 54.7 761.1 60ZM109 60.8Q109.5 55.6 112.6 52Q113.4 56.3 112.2 60.8ZM110.4 60.8Q112.6 54.8 118.6 53.1Q117.4 57.3 114.7 60.8ZM155.7 60.6Q161.3 52.8 169.5 51Q164.1 55.2 158.7 60.6ZM156 60.6Q158.6 53.8 164.3 50.8Q163.1 55.9 160 60.6ZM156.3 60.6Q160 51.5 166.1 46.2Q164 53.4 159.9 60.6ZM211 60.2Q210.6 53.7 212.9 48.5Q215 53.7 214.5 60.2ZM249.8 60.5Q245.2 54 241.1 48.5Q248.8 51.9 253.1 60.5ZM300.1 60.7Q296.3 60.2 293.4 56.7Q298.9 55.9 304.2 60.7ZM297.6 60.7Q302 54.7 309 55.5Q305.8 58.5 301.9 60.7ZM299.1 60.7Q301.4 55.8 306.1 54.7Q305.1 58.3 302.6 60.7ZM398.2 60.7Q393.2 60.6 388.3 59.7Q394.7 56.4 401.8 60.7ZM461.8 60.9Q463.8 51.8 468.9 45.7Q467.5 52.8 464.9 60.9ZM576.1 60.9Q574.6 50.7 574.8 42.2Q577.8 50.4 578.6 60.9ZM613.2 60Q609.1 59.9 605 59.8Q610.2 56.6 616.1 60ZM612.5 60Q609.2 55.6 606.4 51.4Q612.3 53.7 615.4 60ZM670.2 60.5Q668.4 52.8 668.1 46.2Q672.4 52.1 673.4 60.5ZM-38.8 60.5Q-40.6 52.8 -40.9 46.2Q-36.6 52.1 -35.5 60.5Z"/><path fill="#c8ee70" d="M13 60.3Q17.1 50.8 24.5 45.9Q20.8 52.6 16.3 60.3ZM721.3 60.3Q725.4 50.8 732.8 45.9Q729.1 52.6 724.6 60.3ZM47 60Q41.1 58.1 35.1 59.9Q42.8 54.9 49.9 60ZM757.4 60Q751.5 58.1 745.5 59.9Q753.3 54.9 760.3 60ZM152.8 60.6Q149.7 55.4 148.4 50Q154.6 53.3 157.1 60.6ZM214.2 60.2Q219 55.4 225.1 58.8Q221.7 59.5 218.1 60.2ZM252 60.5Q255.2 51.3 262.3 46.4Q259.6 53.1 255.9 60.5ZM465 60.9Q468.3 51.8 474.9 46.8Q472.3 53.5 468.5 60.9ZM612.6 60Q610.6 55.3 610.8 50.5Q614.5 54.1 615.9 60ZM673.1 60.5Q673.5 52.7 676.2 46.6Q677 53 675.9 60.5ZM-38.6 60.5Q-38.2 52.7 -35.5 46.6Q-34.7 53 -35.8 60.5Z"/><path fill="#b6e85a" d="M45.2 60Q42.2 56.2 40.6 51.7Q46.5 53.7 49.3 60ZM756.8 60Q753.8 56.2 752.2 51.7Q758.2 53.7 760.9 60ZM45.7 60Q48.2 50.4 55 44.8Q52.6 51.9 49.4 60ZM757 60Q759.5 50.4 766.3 44.8Q763.9 51.9 760.7 60ZM109 60.8Q104.5 60.3 100.5 58.2Q105.9 57 111.8 60.8ZM213.8 60.2Q216.6 55 222.7 55.4Q220.7 58.1 217.9 60.2ZM211.2 60.2Q215 56.3 220 58.2Q217.1 59.3 214.1 60.2ZM249.6 60.5Q253.4 56.4 258 58.3Q256.2 60.7 253.8 60.5ZM250.8 60.5Q246.9 57.1 244.7 52.3Q250.3 54.3 254.4 60.5ZM300.5 60.7Q298.9 55.9 299 51.3Q302.5 55 303.4 60.7ZM298.9 60.7Q297.9 55.7 299.4 51.2Q302.5 55.2 302.6 60.7ZM338.1 60.7Q342.3 56.8 347.2 59.3Q344.4 60.3 341.4 60.7ZM338.3 60.7Q337.3 53.8 338.1 47.9Q340.7 53.5 341.1 60.7ZM401.3 60.7Q398.2 57.7 395.2 55.1Q400.9 55.6 404.1 60.7ZM401.2 60.7Q401.1 51.9 403.6 44.9Q405 52.1 404.3 60.7ZM463.1 60.9Q461.4 56.1 462.3 51.3Q466.7 54.9 467.4 60.9ZM520.3 60.3Q522.9 55.5 528 55.2Q526.7 58.4 524.2 60.3ZM522.2 60.3Q529.6 55.5 536.7 60.4Q531.3 59.5 525.7 60.3ZM612.8 60Q607.5 56.9 601.6 56.6Q609.4 54.4 615.3 60Z"/><path fill="#dcf490" d="M212.5 60.2Q215.6 55.5 220.1 54.9Q218.6 58.4 215.8 60.2ZM252.2 60.5Q249.6 54.1 248.4 48.3Q254.5 52.6 256.3 60.5ZM339.9 60.7Q338.1 54.6 337.9 49Q342.1 53.7 343.2 60.7ZM461.9 60.9Q462.9 54.8 467.5 51.2Q468 56.1 466.2 60.9ZM521 60.3Q518.1 51.2 517.3 43Q522.6 50 524.8 60.3ZM572.3 60.9Q572.9 50.4 577.6 42.5Q578.3 51 576.6 60.9ZM573.3 60.9Q570.5 60.1 568.2 58.3Q572.3 57.5 575.8 60.9ZM613.3 60Q608.5 58.2 604.8 54.1Q611.6 54 617.5 60ZM670.4 60.5Q670.3 54.3 673.1 49.4Q674.8 54.5 674 60.5ZM-39 60.5Q-39.1 54.3 -36.3 49.4Q-34.6 54.5 -35.4 60.5ZM671.3 60.5Q675 57.1 679 58.1Q676.9 60.3 674.3 60.5ZM-38.7 60.5Q-35 57.1 -31 58.1Q-33.1 60.3 -35.7 60.5Z"/><path d="M92 12L94 60M115 15L108 60M114 25L100 60M455 17L462 60M437 18L462 60M468 24L464 60M475 49L474 60M334 44L338 60M344 41L340 60M556 53L556 60M566 45L560 60M695 28L700 60M-15 28L-10 60M704 23L702 60M-6 23L-8 60M25 20L12 60M735 20L722 60M2 20L8 60M712 20L718 60" stroke="#6b6a2a" stroke-width="1.100" fill="none" opacity=".8"/><ellipse cx="435" cy="13" rx="5.5" ry="5" fill="url(#fg)"/><ellipse cx="454" cy="12" rx="6.5" ry="6" fill="url(#fy)"/><ellipse cx="460" cy="7" rx="7" ry="3" fill="url(#fy)"/><ellipse cx="468" cy="21.6" rx="6" ry="3.2" fill="url(#fy)"/><ellipse cx="475" cy="42" rx="7.5" ry="7.5" fill="url(#fy)"/><ellipse cx="444" cy="47.5" rx="3.5" ry="4.5" fill="url(#fg)"/><ellipse cx="572" cy="26" rx="6" ry="4" fill="url(#fg)"/><ellipse cx="546.6" cy="35" rx="4.5" ry="4.5" fill="url(#fy)"/><ellipse cx="555" cy="36.6" rx="5" ry="5" fill="url(#fy)"/><ellipse cx="566" cy="39" rx="6" ry="6" fill="url(#fy)"/><ellipse cx="556.5" cy="49" rx="5" ry="5" fill="url(#fy)"/><ellipse cx="688" cy="18" rx="5" ry="4" fill="url(#fg)"/><ellipse cx="-22" cy="18" rx="5" ry="4" fill="url(#fg)"/><ellipse cx="695" cy="24" rx="5" ry="5" fill="url(#fy)"/><ellipse cx="-15" cy="24" rx="5" ry="5" fill="url(#fy)"/><ellipse cx="704.7" cy="19" rx="4.5" ry="4" fill="url(#fy)"/><ellipse cx="-5.3" cy="19" rx="4.5" ry="4" fill="url(#fy)"/><ellipse cx="2" cy="17" rx="4" ry="3.5" fill="url(#fy)"/><ellipse cx="712" cy="17" rx="4" ry="3.5" fill="url(#fy)"/><ellipse cx="25.6" cy="17" rx="6" ry="3" fill="url(#fy)"/><ellipse cx="735.6" cy="17" rx="6" ry="3" fill="url(#fy)"/><ellipse cx="-1.6" cy="32" rx="5" ry="3" fill="url(#fy)"/><ellipse cx="708.4" cy="32" rx="5" ry="3" fill="url(#fy)"/><ellipse cx="705.6" cy="50" rx="6" ry="6" fill="url(#fy)"/><ellipse cx="-4.4" cy="50" rx="6" ry="6" fill="url(#fy)"/><ellipse cx="14" cy="21" rx="2.5" ry="2" fill="url(#fg)"/><ellipse cx="724" cy="21" rx="2.5" ry="2" fill="url(#fg)"/><ellipse cx="92" cy="10" rx="8" ry="3.2" fill="url(#fo)"/><ellipse cx="117" cy="12" rx="7" ry="3.5" fill="url(#fo)"/><ellipse cx="114" cy="21" rx="8" ry="5" fill="url(#fo)"/><ellipse cx="327" cy="27" rx="7" ry="4" fill="url(#fo)"/><ellipse cx="333" cy="39.6" rx="5.5" ry="5.5" fill="url(#fo)"/><ellipse cx="344" cy="36" rx="5" ry="5" fill="url(#fo)"/><ellipse cx="352.5" cy="35" rx="4.5" ry="4.5" fill="url(#fo)"/><ellipse cx="343" cy="50" rx="5" ry="5" fill="url(#fo)"/></g></defs><rect x="0" y="60" width="1690" height="38" fill="url(#wg)"/><g filter="url(#bl)"><ellipse cx="402.2" cy="76.2" rx="17.7" ry="3.4" fill="#4fa89a" opacity=".18"/><ellipse cx="110.7" cy="69.6" rx="9.2" ry="2.7" fill="#b8ecd0" opacity=".18"/><ellipse cx="794.7" cy="71" rx="22.4" ry="4.6" fill="#b8ecd0" opacity=".22"/><ellipse cx="1072.9" cy="70.9" rx="22.9" ry="2" fill="#e6f0a0" opacity=".22"/><ellipse cx="269.4" cy="70" rx="24.3" ry="2.1" fill="#8fe0a8" opacity=".3"/><ellipse cx="798.9" cy="74.1" rx="20.5" ry="4.8" fill="#b8ecd0" opacity=".3"/><ellipse cx="1230.5" cy="75.8" rx="18.2" ry="2.3" fill="#a8e6b0" opacity=".22"/><ellipse cx="836.4" cy="74.8" rx="13.1" ry="4.6" fill="#b8ecd0" opacity=".3"/><ellipse cx="857.2" cy="72.3" rx="15.2" ry="3.2" fill="#4fa89a" opacity=".22"/><ellipse cx="1528.1" cy="75.6" rx="19.9" ry="5" fill="#8fe0a8" opacity=".18"/><ellipse cx="1175.5" cy="76.6" rx="20.2" ry="4.7" fill="#4fa89a" opacity=".18"/><ellipse cx="175.9" cy="69.7" rx="19.5" ry="2.4" fill="#e6f0a0" opacity=".3"/><ellipse cx="1443.2" cy="70.4" rx="24.8" ry="2.2" fill="#8fe0a8" opacity=".22"/><ellipse cx="34" cy="75.7" rx="15.8" ry="2.1" fill="#b8ecd0" opacity=".18"/><ellipse cx="1287.2" cy="70.3" rx="15" ry="4.6" fill="#e6f0a0" opacity=".3"/><ellipse cx="854.2" cy="67.1" rx="25" ry="2.3" fill="#4fa89a" opacity=".18"/><ellipse cx="53" cy="69.9" rx="12.2" ry="2.8" fill="#b8ecd0" opacity=".18"/><ellipse cx="71.7" cy="70.6" rx="22.9" ry="2.4" fill="#4fa89a" opacity=".3"/><ellipse cx="636.7" cy="73.4" rx="22.9" ry="3.8" fill="#b8ecd0" opacity=".18"/><ellipse cx="173.3" cy="69.7" rx="24.6" ry="3.9" fill="#e6f0a0" opacity=".18"/><ellipse cx="401.6" cy="72.2" rx="13.8" ry="3.6" fill="#4fa89a" opacity=".22"/><ellipse cx="1332.4" cy="67.2" rx="24.8" ry="3.8" fill="#4fa89a" opacity=".18"/><ellipse cx="225.2" cy="71.7" rx="19.1" ry="4" fill="#4fa89a" opacity=".3"/><ellipse cx="1029" cy="67.2" rx="13.5" ry="2.2" fill="#b8ecd0" opacity=".18"/><ellipse cx="35.9" cy="70" rx="14.9" ry="3.8" fill="#b8ecd0" opacity=".22"/><ellipse cx="615.1" cy="75.4" rx="14" ry="2.8" fill="#4fa89a" opacity=".3"/><ellipse cx="177.2" cy="73.8" rx="22" ry="2.4" fill="#e6f0a0" opacity=".18"/><ellipse cx="376.1" cy="70.3" rx="21.9" ry="4" fill="#a8e6b0" opacity=".18"/><ellipse cx="1179.7" cy="76.5" rx="10.6" ry="4" fill="#4fa89a" opacity=".22"/><ellipse cx="740.9" cy="67.8" rx="22.7" ry="4.2" fill="#a8e6b0" opacity=".22"/><ellipse cx="1495.5" cy="74.9" rx="16.2" ry="2.1" fill="#a8e6b0" opacity=".22"/><ellipse cx="532.6" cy="68.8" rx="22.4" ry="2.8" fill="#e6f0a0" opacity=".18"/><ellipse cx="144.6" cy="68.3" rx="18.9" ry="2.9" fill="#e6f0a0" opacity=".3"/><ellipse cx="785.4" cy="71.2" rx="19.1" ry="3.2" fill="#4fa89a" opacity=".3"/><ellipse cx="263.6" cy="76.9" rx="9.1" ry="3.3" fill="#e6f0a0" opacity=".18"/><ellipse cx="375.3" cy="76.6" rx="20.9" ry="3.6" fill="#e6f0a0" opacity=".22"/><ellipse cx="1456" cy="68.2" rx="22.7" ry="2.7" fill="#4fa89a" opacity=".22"/><ellipse cx="1527.1" cy="76" rx="20.1" ry="4.7" fill="#a8e6b0" opacity=".18"/><ellipse cx="83.4" cy="68.7" rx="16.7" ry="2.9" fill="#8fe0a8" opacity=".18"/><ellipse cx="33.5" cy="76.4" rx="17.6" ry="3.8" fill="#8fe0a8" opacity=".3"/><ellipse cx="211.9" cy="71.8" rx="24.6" ry="4.3" fill="#e6f0a0" opacity=".3"/><ellipse cx="373.2" cy="68.7" rx="11" ry="4.4" fill="#8fe0a8" opacity=".22"/><ellipse cx="1391.7" cy="75.6" rx="9.1" ry="2.1" fill="#e6f0a0" opacity=".3"/><ellipse cx="419.6" cy="71.2" rx="18.9" ry="3.4" fill="#e6f0a0" opacity=".22"/><ellipse cx="1448.4" cy="68.2" rx="21.4" ry="2.2" fill="#8fe0a8" opacity=".22"/><ellipse cx="1444" cy="71.9" rx="10.4" ry="2.5" fill="#e6f0a0" opacity=".22"/><ellipse cx="593.7" cy="70" rx="19.4" ry="2.8" fill="#e6f0a0" opacity=".3"/><ellipse cx="724.5" cy="74.2" rx="11" ry="3.1" fill="#8fe0a8" opacity=".22"/></g><use href="#gt" x="0"/><use href="#gt" x="710"/><use href="#gt" x="1420"/><rect x="0" y="49" width="1690" height="12" fill="url(#bs)"/><g filter="url(#bl2)"><ellipse cx="500" cy="96" rx="110" ry="12" fill="#fff" opacity=".45"/><ellipse cx="1210" cy="96" rx="110" ry="12" fill="#fff" opacity=".45"/><ellipse cx="1920" cy="96" rx="110" ry="12" fill="#fff" opacity=".45"/><ellipse cx="40" cy="96" rx="80" ry="9" fill="#fff" opacity=".3"/></g><rect x="0" y="59" width="1690" height="2.500" fill="#0f3d2a" opacity=".55"/></svg>
</div>
<div class="pg" style="left:933px;width:30px"><svg style="position:absolute;left:9px;top:8px;width:12px;height:12px" viewBox="0 0 12 12"><path d="M8 1.500L3.500 6 8 10.500" fill="none" stroke="#606266" stroke-width="1.100"/></svg></div>
<div class="pg" style="left:970px;width:30px;background:#13c6ba;color:#fff;font-weight:bold">1</div>
<div class="pg" style="left:1007px;width:30px"><svg style="position:absolute;left:9px;top:8px;width:12px;height:12px" viewBox="0 0 12 12"><path d="M4 1.500L8.500 6 4 10.500" fill="none" stroke="#606266" stroke-width="1.100"/></svg></div>
<div class="pg" style="left:1048px;width:98px;text-align:left;padding-left:16px;border-radius:3px">10条/页<svg style="position:absolute;right:7px;top:9px;width:11px;height:11px" viewBox="0 0 11 11"><path d="M1.500 3.500l4 4 4-4" fill="none" stroke="#c0c4cc" stroke-width="1.100"/></svg></div>
<div class="abs" style="left:0;top:93px;width:170px;height:16px;background:linear-gradient(rgba(19,198,186,.75),rgba(19,198,186,.75));z-index:6"></div>
<div id="sb"></div>
</div></body></html>
